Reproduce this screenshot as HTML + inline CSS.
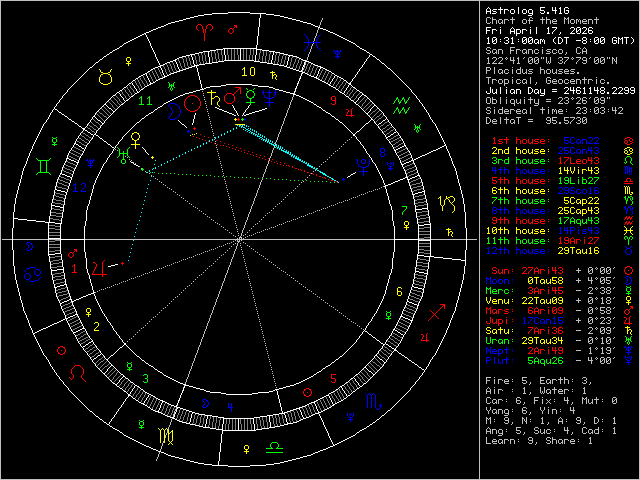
<!DOCTYPE html>
<html><head><meta charset="utf-8"><style>
html,body{margin:0;padding:0;background:#000;width:640px;height:480px;overflow:hidden}
#w{position:relative;width:640px;height:480px;background:#000}
svg{position:absolute;left:0;top:0}
.t{position:absolute;font-family:"Liberation Mono",monospace;font-size:10px;line-height:10px;white-space:pre;color:transparent}
</style></head><body><div id="w">
<svg width="640" height="480" viewBox="0 0 640 480" shape-rendering="crispEdges" fill="none">
<path stroke="#c0c0c0" d="M0 .5m0 0h640m-640 1h1m478 0h1m159 0h1m-640 1h1m478 0h1m159 0h1m-640 1h1m478 0h1m159 0h1m-640 1h1m478 0h1m159 0h1m-640 1h1m478 0h1m159 0h1m-640 1h1m478 0h1m159 0h1m-640 1h1m478 0h1m159 0h1m-640 1h1m478 0h1m159 0h1m-640 1h1m478 0h1m159 0h1m-640 1h1m478 0h1m159 0h1m-640 1h1m478 0h1m159 0h1m-640 1h1m478 0h1m159 0h1m-640 1h1m478 0h1m159 0h1m-640 1h1m478 0h1m159 0h1m-640 1h1m478 0h1m159 0h1m-640 1h1m478 0h1m159 0h1m-640 1h1m478 0h1m7 0h3m2 0h1m19 0h1m17 0h2m10 0h1m3 0h1m17 0h1m3 0h1m27 0h1m42 0h1m-640 1h1m321 0h1m156 0h1m6 0h1m3 0h1m1 0h1m19 0h1m16 0h1m2 0h1m9 0h1m3 0h1m17 0h2m1 0h2m27 0h1m42 0h1m-640 1h1m321 0h1m156 0h1m6 0h1m5 0h4m3 0h3m2 0h4m2 0h5m8 0h3m3 0h1m10 0h5m1 0h4m3 0h3m8 0h1m1 0h1m1 0h1m2 0h3m2 0h2m1 0h1m3 0h3m2 0h4m2 0h5m40 0h1m-640 1h1m320 0h1m157 0h1m6 0h1m5 0h1m3 0h1m1 0h1m3 0h1m1 0h1m3 0h1m3 0h1m9 0h1m3 0h1m1 0h5m9 0h1m3 0h1m3 0h1m1 0h1m3 0h1m7 0h1m3 0h1m1 0h1m3 0h1m1 0h1m1 0h1m1 0h1m1 0h1m3 0h1m1 0h1m3 0h1m3 0h1m42 0h1m-640 1h1m320 0h1m157 0h1m6 0h1m5 0h1m3 0h1m1 0h1m3 0h1m1 0h1m7 0h1m9 0h1m3 0h1m2 0h1m12 0h1m3 0h1m3 0h1m1 0h5m7 0h1m3 0h1m1 0h1m3 0h1m1 0h1m1 0h1m1 0h1m1 0h5m1 0h1m3 0h1m3 0h1m42 0h1m-640 1h1m319 0h1m158 0h1m6 0h1m3 0h1m1 0h1m3 0h1m1 0h1m2 0h2m1 0h1m7 0h1m9 0h1m3 0h1m2 0h1m12 0h1m3 0h1m3 0h1m1 0h1m11 0h1m3 0h1m1 0h1m3 0h1m1 0h1m3 0h1m1 0h1m5 0h1m3 0h1m3 0h1m42 0h1m-640 1h1m319 0h1m158 0h1m7 0h3m2 0h1m3 0h1m2 0h2m1 0h1m1 0h1m7 0h1m10 0h3m3 0h1m12 0h1m3 0h1m3 0h1m2 0h4m7 0h1m3 0h1m2 0h3m2 0h1m3 0h1m2 0h4m1 0h1m3 0h1m3 0h1m42 0h1m-640 1h1m319 0h1m158 0h1m159 0h1m-640 1h1m318 0h1m159 0h1m159 0h1m-640 1h1m318 0h1m159 0h1m159 0h1m-640 1h1m478 0h1m159 0h1m-640 1h1m317 0h1m160 0h1m159 0h1m-640 1h1m317 0h1m160 0h1m159 0h1m-640 1h1m316 0h1m161 0h1m159 0h1m-640 1h1m316 0h1m161 0h1m159 0h1m-640 1h1m316 0h1m161 0h1m159 0h1m-640 1h1m315 0h1m162 0h1m159 0h1m-640 1h1m315 0h1m162 0h1m159 0h1m-640 1h1m315 0h1m162 0h1m159 0h1m-640 1h1m314 0h1m163 0h1m159 0h1m-640 1h1m314 0h1m163 0h1m159 0h1m-640 1h1m313 0h1m164 0h1m159 0h1m-640 1h1m313 0h1m164 0h1m159 0h1m-640 1h1m313 0h1m164 0h1m159 0h1m-640 1h1m312 0h1m165 0h1m159 0h1m-640 1h1m478 0h1m159 0h1m-640 1h1m312 0h1m165 0h1m159 0h1m-640 1h1m311 0h1m166 0h1m159 0h1m-640 1h1m311 0h1m166 0h1m159 0h1m-640 1h1m310 0h1m167 0h1m159 0h1m-640 1h1m310 0h1m167 0h1m7 0h3m20 0h5m27 0h1m34 0h3m4 0h1m54 0h1m-640 1h1m310 0h1m167 0h1m6 0h1m3 0h1m19 0h1m65 0h1m3 0h1m2 0h1m1 0h1m53 0h1m-640 1h1m309 0h1m168 0h1m6 0h1m6 0h3m2 0h4m8 0h1m5 0h4m3 0h3m2 0h4m3 0h3m4 0h1m4 0h4m2 0h3m3 0h3m14 0h1m5 0h1m3 0h1m52 0h1m-640 1h1m309 0h1m168 0h1m7 0h3m2 0h1m3 0h1m1 0h1m3 0h1m7 0h4m2 0h1m3 0h1m1 0h1m3 0h1m1 0h1m3 0h1m1 0h1m3 0h1m3 0h1m3 0h1m5 0h1m3 0h1m1 0h1m3 0h1m13 0h1m5 0h1m3 0h1m52 0h1m-640 1h1m309 0h1m168 0h1m10 0h1m1 0h1m3 0h1m1 0h1m3 0h1m7 0h1m5 0h1m5 0h1m3 0h1m1 0h1m3 0h1m1 0h1m7 0h1m4 0h3m2 0h1m5 0h1m3 0h1m13 0h1m5 0h5m52 0h1m-640 1h1m308 0h1m169 0h1m6 0h1m3 0h1m1 0h1m2 0h2m1 0h1m3 0h1m7 0h1m5 0h1m5 0h1m2 0h2m1 0h1m3 0h1m1 0h1m3 0h1m3 0h1m7 0h1m1 0h1m3 0h1m1 0h1m3 0h1m3 0h1m9 0h1m3 0h1m1 0h1m3 0h1m52 0h1m-640 1h1m308 0h1m169 0h1m7 0h3m3 0h2m1 0h1m1 0h1m3 0h1m7 0h1m5 0h1m6 0h2m1 0h1m1 0h1m3 0h1m2 0h3m4 0h1m3 0h4m3 0h3m3 0h3m4 0h1m10 0h3m2 0h1m3 0h1m52 0h1m-640 1h1m307 0h1m170 0h1m85 0h1m73 0h1m-640 1h1m307 0h1m170 0h1m159 0h1m-640 1h1m307 0h1m170 0h1m159 0h1m-640 1h1m306 0h1m171 0h1m8 0h1m4 0h3m3 0h3m4 0h1m3 0h1m2 0h1m4 0h1m5 0h1m4 0h3m3 0h3m3 0h1m1 0h1m2 0h1m3 0h1m8 0h3m2 0h5m3 0h1m3 0h5m2 0h3m4 0h1m4 0h3m3 0h3m3 0h1m1 0h1m2 0h1m3 0h1m22 0h1m-640 1h1m306 0h1m171 0h1m7 0h2m3 0h1m3 0h1m1 0h1m3 0h1m2 0h1m1 0h1m2 0h1m2 0h1m3 0h2m4 0h1m4 0h1m3 0h1m1 0h1m3 0h1m2 0h1m1 0h1m2 0h1m3 0h1m7 0h1m3 0h1m5 0h1m2 0h1m1 0h1m6 0h1m1 0h1m3 0h1m2 0h1m4 0h1m3 0h1m1 0h1m3 0h1m2 0h1m1 0h1m2 0h2m2 0h1m22 0h1m-640 1h1m306 0h1m171 0h1m8 0h1m7 0h1m5 0h1m3 0h1m3 0h1m2 0h1m4 0h1m9 0h1m2 0h2m1 0h1m2 0h2m7 0h1m3 0h1m11 0h1m4 0h1m4 0h1m6 0h1m2 0h1m3 0h1m7 0h1m2 0h2m1 0h1m2 0h2m7 0h1m1 0h1m1 0h1m22 0h1m-640 1h1m305 0h1m172 0h1m8 0h1m6 0h1m5 0h1m8 0h5m3 0h1m9 0h1m1 0h1m1 0h1m1 0h1m1 0h1m1 0h1m7 0h1m3 0h1m9 0h2m4 0h1m11 0h1m4 0h4m7 0h1m1 0h1m1 0h1m1 0h1m1 0h1m1 0h1m7 0h1m1 0h1m1 0h1m22 0h1m-640 1h1m478 0h1m8 0h1m5 0h1m5 0h1m12 0h1m4 0h1m9 0h2m2 0h1m1 0h2m2 0h1m7 0h1m1 0h1m1 0h1m11 0h1m2 0h1m11 0h1m8 0h1m7 0h2m2 0h1m1 0h2m2 0h1m7 0h1m2 0h2m22 0h1m-640 1h1m304 0h1m173 0h1m8 0h1m4 0h1m5 0h1m13 0h1m4 0h1m9 0h1m3 0h1m1 0h1m3 0h1m7 0h1m1 0h1m1 0h1m7 0h1m3 0h1m1 0h1m11 0h1m5 0h1m3 0h1m7 0h1m3 0h1m1 0h1m3 0h1m7 0h1m3 0h1m22 0h1m-640 1h1m304 0h1m173 0h1m7 0h3m2 0h5m1 0h5m10 0h1m3 0h3m9 0h3m3 0h3m9 0h1m1 0h1m9 0h3m2 0h1m11 0h1m6 0h3m9 0h3m3 0h3m8 0h1m3 0h1m22 0h1m-640 1h1m304 0h1m173 0h1m159 0h1m-640 1h1m303 0h1m174 0h1m159 0h1m-640 1h1m303 0h1m174 0h1m159 0h1m-640 1h1m303 0h1m174 0h1m6 0h4m4 0h1m17 0h1m7 0h1m19 0h1m98 0h1m-640 1h1m302 0h1m175 0h1m6 0h1m3 0h1m3 0h1m25 0h1m19 0h1m98 0h1m-640 1h1m302 0h1m175 0h1m6 0h1m3 0h1m3 0h1m4 0h3m3 0h3m4 0h1m4 0h4m1 0h1m3 0h1m2 0h4m7 0h4m3 0h3m2 0h1m3 0h1m2 0h4m2 0h3m3 0h4m64 0h1m-640 1h1m301 0h1m176 0h1m6 0h4m4 0h1m3 0h1m3 0h1m1 0h1m3 0h1m3 0h1m3 0h1m3 0h1m1 0h1m3 0h1m1 0h1m11 0h1m3 0h1m1 0h1m3 0h1m1 0h1m3 0h1m1 0h1m5 0h1m3 0h1m1 0h1m68 0h1m-640 1h1m301 0h1m176 0h1m6 0h1m7 0h1m3 0h1m3 0h1m1 0h1m7 0h1m3 0h1m3 0h1m1 0h1m3 0h1m2 0h3m8 0h1m3 0h1m1 0h1m3 0h1m1 0h1m3 0h1m2 0h3m2 0h5m2 0h3m65 0h1m-640 1h1m478 0h1m6 0h1m7 0h1m3 0h1m2 0h2m1 0h1m3 0h1m3 0h1m3 0h1m3 0h1m1 0h1m2 0h2m5 0h1m7 0h1m3 0h1m1 0h1m3 0h1m1 0h1m2 0h2m5 0h1m1 0h1m9 0h1m2 0h2m60 0h1m-640 1h1m300 0h1m177 0h1m6 0h1m7 0h1m4 0h2m1 0h1m2 0h3m4 0h1m4 0h4m2 0h2m1 0h1m1 0h4m8 0h1m3 0h1m2 0h3m3 0h2m1 0h1m1 0h4m3 0h4m1 0h4m3 0h2m60 0h1m-640 1h1m478 0h1m159 0h1m-640 1h1m478 0h1m159 0h1m-640 1h1m478 0h1m159 0h1m-640 1h1m478 0h1m6 0h5m21 0h1m17 0h1m16 0h3m34 0h1m11 0h1m42 0h1m-640 1h1m298 0h1m179 0h1m8 0h1m41 0h1m15 0h1m3 0h1m33 0h1m54 0h1m-640 1h1m478 0h1m8 0h1m3 0h4m3 0h3m2 0h4m4 0h1m4 0h3m3 0h3m4 0h1m15 0h1m6 0h3m3 0h3m3 0h3m3 0h3m2 0h4m2 0h5m1 0h4m4 0h1m4 0h3m35 0h1m-640 1h1m478 0h1m8 0h1m3 0h1m3 0h1m1 0h1m3 0h1m1 0h1m3 0h1m3 0h1m3 0h1m3 0h1m1 0h1m3 0h1m3 0h1m15 0h1m1 0h3m1 0h1m3 0h1m1 0h1m3 0h1m1 0h1m3 0h1m1 0h1m3 0h1m1 0h1m3 0h1m3 0h1m3 0h1m3 0h1m3 0h1m3 0h1m3 0h1m34 0h1m-640 1h1m478 0h1m8 0h1m3 0h1m5 0h1m3 0h1m1 0h1m3 0h1m3 0h1m3 0h1m5 0h1m3 0h1m3 0h1m15 0h1m3 0h1m1 0h5m1 0h1m3 0h1m1 0h1m5 0h5m1 0h1m3 0h1m3 0h1m3 0h1m7 0h1m3 0h1m38 0h1m-640 1h1m478 0h1m8 0h1m3 0h1m5 0h1m3 0h1m1 0h1m3 0h1m3 0h1m3 0h1m3 0h1m1 0h1m2 0h2m3 0h1m5 0h1m9 0h1m3 0h1m1 0h1m5 0h1m3 0h1m1 0h1m3 0h1m1 0h1m5 0h1m3 0h1m3 0h1m3 0h1m7 0h1m3 0h1m3 0h1m2 0h2m30 0h1m-640 1h1m297 0h1m180 0h1m8 0h1m3 0h1m6 0h3m2 0h4m4 0h1m4 0h3m3 0h2m1 0h1m3 0h1m5 0h1m10 0h3m3 0h4m2 0h3m3 0h3m3 0h4m1 0h1m3 0h1m3 0h1m3 0h1m7 0h1m4 0h3m3 0h2m30 0h1m-640 1h1m478 0h1m24 0h1m30 0h1m103 0h1m-640 1h1m478 0h1m24 0h1m134 0h1m-640 1h1m478 0h1m159 0h1m-640 1h1m478 0h1m159 0h1m-640 1h1m295 0h1m182 0h1m159 0h1m-640 1h1m478 0h1m159 0h1m-640 1h1m478 0h1m159 0h1m-640 1h1m201 0h1m92 0h1m183 0h1m159 0h1m-640 1h1m478 0h1m159 0h1m-640 1h1m202 0h1m90 0h1m184 0h1m159 0h1m-640 1h1m478 0h1m159 0h1m-640 1h1m202 0h1m89 0h1m185 0h1m159 0h1m-640 1h1m292 0h1m185 0h1m159 0h1m-640 1h1m203 0h1m87 0h1m186 0h1m7 0h3m2 0h1m7 0h1m5 0h1m17 0h1m5 0h1m28 0h3m3 0h3m4 0h1m4 0h3m3 0h3m4 0h1m4 0h3m3 0h3m3 0h1m1 0h1m29 0h1m-640 1h1m291 0h1m186 0h1m6 0h1m3 0h1m1 0h1m7 0h1m29 0h1m27 0h1m3 0h1m1 0h1m3 0h1m2 0h1m1 0h1m2 0h1m3 0h1m1 0h1m3 0h1m2 0h1m4 0h1m3 0h1m1 0h1m3 0h1m2 0h1m1 0h1m29 0h1m-640 1h1m203 0h1m87 0h1m186 0h1m6 0h1m3 0h1m1 0h4m4 0h1m5 0h1m4 0h3m2 0h1m3 0h1m3 0h1m3 0h5m1 0h1m3 0h1m7 0h5m11 0h1m5 0h1m3 0h1m7 0h1m1 0h1m11 0h1m2 0h2m1 0h1m3 0h1m34 0h1m-640 1h1m290 0h1m187 0h1m6 0h1m3 0h1m1 0h1m3 0h1m3 0h1m5 0h1m3 0h1m3 0h1m1 0h1m3 0h1m3 0h1m5 0h1m3 0h1m3 0h1m22 0h1m4 0h2m11 0h1m2 0h4m8 0h1m1 0h1m1 0h1m2 0h4m34 0h1m-640 1h1m204 0h1m85 0h1m187 0h1m6 0h1m3 0h1m1 0h1m3 0h1m3 0h1m5 0h1m3 0h1m3 0h1m1 0h1m3 0h1m3 0h1m5 0h1m3 0h1m3 0h1m7 0h5m9 0h1m7 0h1m9 0h1m3 0h1m3 0h1m7 0h2m2 0h1m5 0h1m34 0h1m-640 1h1m289 0h1m188 0h1m6 0h1m3 0h1m1 0h1m3 0h1m3 0h1m5 0h1m3 0h1m3 0h1m1 0h1m2 0h2m3 0h1m5 0h1m3 0h1m3 0h1m20 0h1m4 0h1m3 0h1m8 0h1m4 0h1m3 0h1m7 0h1m3 0h1m1 0h1m3 0h1m34 0h1m-640 1h1m204 0h1m84 0h1m188 0h1m7 0h3m2 0h4m4 0h1m5 0h1m4 0h4m2 0h2m1 0h1m3 0h1m5 0h1m4 0h4m19 0h5m2 0h3m8 0h5m2 0h3m9 0h3m3 0h3m35 0h1m-640 1h1m289 0h1m188 0h1m34 0h1m23 0h1m100 0h1m-640 1h1m205 0h1m82 0h1m189 0h1m34 0h1m19 0h4m101 0h1m-640 1h1m288 0h1m189 0h1m159 0h1m-640 1h1m205 0h1m82 0h1m189 0h1m7 0h3m4 0h1m7 0h1m27 0h1m11 0h1m5 0h1m28 0h3m3 0h3m9 0h3m3 0h3m8 0h1m2 0h1m3 0h3m17 0h1m-640 1h1m287 0h1m190 0h1m6 0h1m3 0h1m11 0h1m27 0h1m11 0h1m33 0h1m3 0h1m1 0h1m3 0h1m7 0h1m3 0h1m1 0h1m3 0h1m7 0h1m2 0h1m2 0h1m3 0h1m16 0h1m-640 1h1m206 0h1m80 0h1m190 0h1m6 0h1m7 0h1m4 0h4m2 0h3m2 0h4m3 0h3m3 0h3m4 0h1m9 0h5m3 0h1m3 0h2m1 0h1m3 0h3m4 0h1m13 0h1m5 0h1m3 0h1m3 0h1m2 0h2m5 0h1m3 0h1m3 0h1m2 0h1m6 0h1m16 0h1m-640 1h1m286 0h1m191 0h1m7 0h3m4 0h1m3 0h1m3 0h1m1 0h1m3 0h1m1 0h1m3 0h1m1 0h1m3 0h1m1 0h1m3 0h1m3 0h1m11 0h1m5 0h1m3 0h1m1 0h1m1 0h1m1 0h1m3 0h1m16 0h1m4 0h2m8 0h1m1 0h1m1 0h1m3 0h2m8 0h5m4 0h1m17 0h1m-640 1h1m206 0h1m79 0h1m191 0h1m10 0h1m3 0h1m3 0h1m3 0h1m1 0h5m1 0h1m5 0h5m1 0h1m3 0h1m3 0h1m11 0h1m5 0h1m3 0h1m1 0h1m1 0h1m1 0h5m3 0h1m11 0h1m7 0h1m3 0h1m3 0h2m2 0h1m5 0h1m3 0h1m6 0h1m4 0h1m18 0h1m-640 1h1m286 0h1m191 0h1m6 0h1m3 0h1m3 0h1m3 0h1m3 0h1m1 0h1m5 0h1m5 0h1m5 0h1m2 0h2m3 0h1m11 0h1m5 0h1m3 0h1m3 0h1m1 0h1m18 0h1m4 0h1m3 0h1m7 0h1m3 0h1m1 0h1m3 0h1m10 0h1m3 0h1m19 0h1m-640 1h1m207 0h1m77 0h1m192 0h1m7 0h3m4 0h1m4 0h4m2 0h4m1 0h1m6 0h4m2 0h2m1 0h1m3 0h1m11 0h1m5 0h1m3 0h1m3 0h1m2 0h4m13 0h5m2 0h3m9 0h3m3 0h3m11 0h1m2 0h5m16 0h1m-640 1h1m285 0h1m192 0h1m159 0h1m-640 1h1m207 0h1m77 0h1m192 0h1m159 0h1m-640 1h1m284 0h1m193 0h1m159 0h1m-640 1h1m208 0h1m75 0h1m193 0h1m6 0h3m11 0h1m5 0h1m9 0h5m26 0h3m2 0h5m7 0h5m1 0h5m2 0h3m3 0h3m53 0h1m-640 1h1m283 0h1m194 0h1m6 0h1m2 0h1m10 0h1m5 0h1m11 0h1m27 0h1m3 0h1m1 0h1m11 0h1m9 0h1m1 0h1m3 0h1m1 0h1m3 0h1m52 0h1m-640 1h1m208 0h1m74 0h1m194 0h1m6 0h1m3 0h1m2 0h3m4 0h1m3 0h5m2 0h3m4 0h1m9 0h5m13 0h1m3 0h1m1 0h1m11 0h1m8 0h1m6 0h1m1 0h1m2 0h2m52 0h1m-640 1h1m283 0h1m194 0h1m6 0h1m3 0h1m1 0h1m3 0h1m3 0h1m5 0h1m3 0h1m3 0h1m3 0h1m28 0h4m1 0h4m8 0h4m4 0h1m5 0h2m2 0h1m1 0h1m1 0h1m52 0h1m-640 1h1m209 0h1m72 0h1m195 0h1m6 0h1m3 0h1m1 0h5m3 0h1m5 0h1m3 0h1m3 0h1m3 0h1m9 0h5m17 0h1m5 0h1m11 0h1m2 0h1m8 0h1m1 0h2m2 0h1m52 0h1m-640 1h1m282 0h1m195 0h1m6 0h1m2 0h1m2 0h1m7 0h1m5 0h1m3 0h1m2 0h2m3 0h1m27 0h1m3 0h1m1 0h1m3 0h1m2 0h2m3 0h1m3 0h1m1 0h1m5 0h1m3 0h1m1 0h1m3 0h1m52 0h1m-640 1h1m209 0h1m72 0h1m195 0h1m6 0h3m4 0h4m3 0h1m5 0h1m4 0h2m1 0h1m3 0h1m28 0h3m3 0h3m3 0h2m4 0h3m2 0h1m6 0h3m3 0h3m53 0h1m-640 1h1m281 0h1m196 0h1m159 0h1m-640 1h1m210 0h1m70 0h1m196 0h1m159 0h1m-640 1h1m280 0h1m197 0h1m159 0h1m-640 1h1m210 0h1m69 0h1m197 0h1m159 0h1m-640 1h1m280 0h1m197 0h1m159 0h1m-640 1h1m211 0h1m67 0h1m198 0h1m159 0h1m-640 1h1m279 0h1m198 0h1m159 0h1m-640 1h1m211 0h1m67 0h1m198 0h1m159 0h1m-640 1h1m278 0h1m199 0h1m159 0h1m-640 1h1m212 0h1m65 0h1m199 0h1m159 0h1m-640 1h1m277 0h1m200 0h1m159 0h1m-640 1h1m212 0h1m64 0h1m200 0h1m159 0h1m-640 1h1m277 0h1m200 0h1m159 0h1m-640 1h1m213 0h1m62 0h1m73 0h1m127 0h1m159 0h1m-640 1h1m276 0h1m201 0h1m159 0h1m-640 1h1m213 0h1m62 0h1m71 0h1m129 0h1m159 0h1m-640 1h1m275 0h1m70 0h1m131 0h1m159 0h1m-640 1h1m214 0h1m60 0h1m202 0h1m159 0h1m-640 1h1m274 0h1m69 0h1m133 0h1m159 0h1m-640 1h1m214 0h1m59 0h1m203 0h1m159 0h1m-640 1h1m274 0h1m67 0h1m135 0h1m159 0h1m-640 1h1m215 0h1m262 0h1m159 0h1m-640 1h1m273 0h1m66 0h1m137 0h1m159 0h1m-640 1h1m215 0h1m57 0h1m204 0h1m159 0h1m-640 1h1m272 0h1m65 0h1m139 0h1m159 0h1m-640 1h1m114 0h1m101 0h1m55 0h1m205 0h1m159 0h1m-640 1h1m116 0h1m154 0h1m64 0h1m141 0h1m159 0h1m-640 1h1m216 0h1m54 0h1m62 0h1m143 0h1m159 0h1m-640 1h1m271 0h1m206 0h1m159 0h1m-640 1h1m217 0h1m52 0h1m61 0h1m145 0h1m159 0h1m-640 1h1m270 0h1m207 0h1m159 0h1m-640 1h1m217 0h1m52 0h1m59 0h1m147 0h1m159 0h1m-640 1h1m124 0h1m144 0h1m208 0h1m159 0h1m-640 1h1m126 0h1m91 0h1m50 0h1m58 0h1m149 0h1m159 0h1m-640 1h1m268 0h1m209 0h1m159 0h1m-640 1h1m128 0h1m89 0h1m49 0h1m57 0h1m151 0h1m159 0h1m-640 1h1m130 0h1m137 0h1m209 0h1m159 0h1m-640 1h1m219 0h1m47 0h1m56 0h1m153 0h1m159 0h1m-640 1h1m132 0h1m134 0h1m54 0h1m155 0h1m159 0h1m-640 1h1m134 0h1m84 0h1m47 0h1m210 0h1m159 0h1m-640 1h1m266 0h1m53 0h1m157 0h1m159 0h1m-640 1h1m220 0h1m45 0h1m211 0h1m159 0h1m-640 1h1m138 0h1m126 0h1m52 0h1m159 0h1m159 0h1m-640 1h1m220 0h1m44 0h1m212 0h1m159 0h1m-640 1h1m140 0h1m124 0h1m50 0h1m161 0h1m159 0h1m-640 1h1m221 0h1m42 0h1m213 0h1m159 0h1m-640 1h1m264 0h1m49 0h1m163 0h1m159 0h1m-640 1h1m144 0h1m76 0h1m42 0h1m47 0h1m165 0h1m159 0h1m-640 1h1m146 0h1m116 0h1m214 0h1m159 0h1m-640 1h1m148 0h1m73 0h1m40 0h1m46 0h1m167 0h1m159 0h1m-640 1h1m262 0h1m215 0h1m159 0h1m-640 1h1m150 0h1m71 0h1m39 0h1m45 0h1m169 0h1m159 0h1m-640 1h1m152 0h1m109 0h1m215 0h1m159 0h1m-640 1h1m223 0h1m37 0h1m44 0h1m171 0h1m159 0h1m-640 1h1m154 0h1m323 0h1m159 0h1m-640 1h1m156 0h1m66 0h1m37 0h1m42 0h1m173 0h1m159 0h1m-640 1h1m260 0h1m217 0h1m159 0h1m-640 1h1m158 0h1m65 0h1m35 0h1m41 0h1m175 0h1m159 0h1m-640 1h1m160 0h1m98 0h1m40 0h1m177 0h1m159 0h1m-640 1h1m224 0h1m34 0h1m218 0h1m159 0h1m-640 1h1m162 0h1m96 0h1m38 0h1m179 0h1m159 0h1m-640 1h1m164 0h1m60 0h1m32 0h1m219 0h1m159 0h1m-640 1h1m258 0h1m37 0h1m85 0h1m95 0h1m159 0h1m-640 1h1m166 0h1m58 0h1m32 0h1m121 0h1m97 0h1m159 0h1m-640 1h1m168 0h1m88 0h1m36 0h1m83 0h1m99 0h1m159 0h1m-640 1h1m170 0h1m55 0h1m30 0h1m116 0h1m1 0h1m101 0h1m159 0h1m-640 1h1m256 0h1m35 0h1m79 0h1m105 0h1m159 0h1m-640 1h1m172 0h1m53 0h1m29 0h1m111 0h1m1 0h1m107 0h1m159 0h1m-640 1h1m174 0h1m81 0h1m33 0h1m75 0h1m111 0h1m159 0h1m-640 1h1m227 0h1m27 0h1m32 0h1m75 0h1m113 0h1m159 0h1m-640 1h1m176 0h1m78 0h1m104 0h1m1 0h1m115 0h1m159 0h1m-640 1h1m178 0h1m48 0h1m27 0h1m30 0h1m71 0h1m119 0h1m159 0h1m-640 1h1m254 0h1m101 0h1m121 0h1m159 0h1m-640 1h1m180 0h1m47 0h1m25 0h1m29 0h1m67 0h1m1 0h1m123 0h1m159 0h1m-640 1h1m182 0h1m70 0h1m96 0h1m127 0h1m159 0h1m-640 1h1m228 0h1m24 0h1m28 0h1m65 0h1m129 0h1m159 0h1m-640 1h1m184 0h1m68 0h1m90 0h1m1 0h1m131 0h1m159 0h1m-640 1h1m186 0h1m42 0h1m22 0h1m27 0h1m61 0h1m135 0h1m159 0h1m-640 1h1m252 0h1m85 0h1m1 0h1m137 0h1m159 0h1m-640 1h1m188 0h1m40 0h1m22 0h1m25 0h1m57 0h1m141 0h1m159 0h1m-640 1h1m190 0h1m60 0h1m24 0h1m57 0h1m143 0h1m159 0h1m-640 1h1m230 0h1m20 0h1m78 0h1m1 0h1m145 0h1m159 0h1m-640 1h1m192 0h1m57 0h1m23 0h1m53 0h1m149 0h1m159 0h1m-640 1h1m194 0h1m35 0h1m19 0h1m75 0h1m151 0h1m159 0h1m-640 1h1m196 0h1m53 0h1m21 0h1m49 0h1m1 0h1m153 0h1m159 0h1m-640 1h1m231 0h1m17 0h1m70 0h1m157 0h1m159 0h1m-640 1h1m198 0h1m50 0h1m20 0h1m45 0h1m1 0h1m159 0h1m159 0h1m-640 1h1m200 0h1m30 0h1m17 0h1m64 0h1m163 0h1m159 0h1m-640 1h1m248 0h1m19 0h1m43 0h1m165 0h1m159 0h1m-640 1h1m202 0h1m29 0h1m15 0h1m17 0h1m41 0h1m1 0h1m167 0h1m159 0h1m-640 1h1m204 0h1m42 0h1m58 0h1m171 0h1m159 0h1m-640 1h1m232 0h1m14 0h1m16 0h1m39 0h1m173 0h1m159 0h1m-640 1h1m206 0h1m40 0h1m52 0h1m1 0h1m175 0h1m159 0h1m-640 1h1m208 0h1m24 0h1m12 0h1m15 0h1m35 0h1m179 0h1m159 0h1m-640 1h1m246 0h1m49 0h1m181 0h1m159 0h1m-640 1h1m210 0h1m22 0h1m12 0h1m13 0h1m31 0h1m1 0h1m183 0h1m159 0h1m-640 1h1m212 0h1m32 0h1m44 0h1m187 0h1m159 0h1m-640 1h1m234 0h1m10 0h1m12 0h1m27 0h1m1 0h1m189 0h1m159 0h1m-640 1h1m214 0h1m29 0h1m39 0h1m193 0h1m159 0h1m-640 1h1m216 0h1m17 0h1m9 0h1m11 0h1m25 0h1m195 0h1m159 0h1m-640 1h1m218 0h1m25 0h1m9 0h1m23 0h1m1 0h1m197 0h1m159 0h1m-640 1h1m235 0h1m7 0h1m32 0h1m201 0h1m159 0h1m-640 1h1m220 0h1m22 0h1m8 0h1m21 0h1m203 0h1m159 0h1m-640 1h1m222 0h1m12 0h1m7 0h1m26 0h1m1 0h1m205 0h1m159 0h1m-640 1h1m242 0h1m7 0h1m17 0h1m209 0h1m159 0h1m-640 1h1m224 0h1m11 0h1m5 0h1m21 0h1m1 0h1m211 0h1m159 0h1m-640 1h1m226 0h1m14 0h1m6 0h1m13 0h1m215 0h1m159 0h1m-640 1h1m236 0h1m4 0h1m18 0h1m217 0h1m159 0h1m-640 1h1m228 0h1m12 0h1m4 0h1m9 0h1m1 0h1m219 0h1m159 0h1m-640 1h1m230 0h1m6 0h1m2 0h1m13 0h1m223 0h1m159 0h1m-640 1h1m240 0h1m3 0h1m7 0h1m225 0h1m159 0h1m-640 1h1m232 0h1m4 0h1m2 0h1m1 0h1m5 0h1m1 0h1m227 0h1m159 0h1m-640 1h1m234 0h1m4 0h1m6 0h1m231 0h1m159 0h1m-640 1h1m238 0h3m3 0h1m233 0h1m159 0h1m-640 1h1m236 0h1m1 0h1m1 0h1m1 0h1m235 0h1m159 0h1m-640 1h1m1 0h10m1 0h35m1 0h11m25 0h309m25 0h11m1 0h35m1 0h10m2 0h1m159 0h1m-640 1h1m234 0h1m1 0h1m1 0h1m1 0h1m237 0h1m159 0h1m-640 1h1m232 0h1m3 0h3m239 0h1m159 0h1m-640 1h1m230 0h1m6 0h1m4 0h1m235 0h1m159 0h1m-640 1h1m226 0h1m1 0h1m5 0h1m1 0h1m2 0h1m4 0h1m233 0h1m159 0h1m-640 1h1m224 0h1m7 0h1m3 0h1m241 0h1m159 0h1m-640 1h1m222 0h1m13 0h1m2 0h1m6 0h1m231 0h1m159 0h1m-640 1h1m218 0h1m1 0h1m9 0h1m4 0h1m12 0h1m229 0h1m159 0h1m-640 1h1m216 0h1m18 0h1m4 0h1m237 0h1m159 0h1m-640 1h1m214 0h1m13 0h1m6 0h1m14 0h1m227 0h1m159 0h1m-640 1h1m210 0h1m1 0h1m21 0h1m5 0h1m11 0h1m225 0h1m159 0h1m-640 1h1m208 0h1m17 0h1m7 0h1m243 0h1m159 0h1m-640 1h1m204 0h1m1 0h1m26 0h1m7 0h1m12 0h1m223 0h1m159 0h1m-640 1h1m202 0h1m21 0h1m8 0h1m22 0h1m221 0h1m159 0h1m-640 1h1m200 0h1m32 0h1m7 0h1m236 0h1m159 0h1m-640 1h1m196 0h1m1 0h1m23 0h1m9 0h1m25 0h1m219 0h1m159 0h1m-640 1h1m194 0h1m25 0h1m11 0h1m9 0h1m17 0h1m217 0h1m159 0h1m-640 1h1m192 0h1m39 0h1m29 0h1m215 0h1m159 0h1m-640 1h1m188 0h1m1 0h1m27 0h1m12 0h1m10 0h1m235 0h1m159 0h1m-640 1h1m186 0h1m44 0h1m32 0h1m213 0h1m159 0h1m-640 1h1m182 0h1m1 0h1m31 0h1m13 0h1m12 0h1m22 0h1m211 0h1m159 0h1m-640 1h1m180 0h1m49 0h1m247 0h1m159 0h1m-640 1h1m178 0h1m35 0h1m15 0h1m12 0h1m24 0h1m209 0h1m159 0h1m-640 1h1m174 0h1m1 0h1m52 0h1m40 0h1m207 0h1m159 0h1m-640 1h1m172 0h1m39 0h1m16 0h1m14 0h1m233 0h1m159 0h1m-640 1h1m170 0h1m58 0h1m42 0h1m205 0h1m159 0h1m-640 1h1m166 0h1m1 0h1m41 0h1m17 0h1m15 0h1m29 0h1m203 0h1m159 0h1m-640 1h1m164 0h1m43 0h1m19 0h1m249 0h1m159 0h1m-640 1h1m162 0h1m64 0h1m17 0h1m30 0h1m201 0h1m109 0h3m4 0h1m4 0h3m3 0h3m4 0h1m24 0h1m-640 1h1m158 0h1m1 0h1m45 0h1m20 0h1m50 0h1m199 0h1m98 0h1m9 0h1m3 0h1m2 0h1m1 0h1m2 0h1m3 0h1m1 0h1m3 0h1m2 0h1m25 0h1m-640 1h1m156 0h1m70 0h1m17 0h1m232 0h1m98 0h1m9 0h1m2 0h2m3 0h1m3 0h1m2 0h2m1 0h1m2 0h2m28 0h1m-640 1h1m152 0h1m1 0h1m49 0h1m21 0h1m53 0h1m197 0h1m96 0h5m7 0h1m1 0h1m1 0h1m7 0h1m1 0h1m1 0h1m1 0h1m1 0h1m1 0h1m28 0h1m-640 1h1m150 0h1m75 0h1m19 0h1m35 0h1m195 0h1m98 0h1m9 0h2m2 0h1m7 0h2m2 0h1m1 0h2m2 0h1m28 0h1m-640 1h1m148 0h1m53 0h1m23 0h1m57 0h1m193 0h1m98 0h1m9 0h1m3 0h1m7 0h1m3 0h1m1 0h1m3 0h1m28 0h1m-640 1h1m144 0h1m1 0h1m78 0h1m20 0h1m231 0h1m109 0h3m9 0h3m3 0h3m29 0h1m-640 1h1m142 0h1m57 0h1m24 0h1m60 0h1m191 0h1m159 0h1m-640 1h1m140 0h1m57 0h1m25 0h1m22 0h1m40 0h1m189 0h1m159 0h1m-640 1h1m136 0h1m1 0h1m85 0h1m253 0h1m159 0h1m-640 1h1m134 0h1m61 0h1m27 0h1m22 0h1m42 0h1m187 0h1m108 0h1m2 0h1m4 0h1m4 0h3m2 0h5m3 0h1m24 0h1m-640 1h1m130 0h1m1 0h1m90 0h1m68 0h1m185 0h1m98 0h1m9 0h1m2 0h1m3 0h1m1 0h1m2 0h1m3 0h1m1 0h1m6 0h1m25 0h1m-640 1h1m128 0h1m65 0h1m28 0h1m24 0h1m229 0h1m98 0h1m9 0h1m2 0h1m4 0h1m3 0h1m2 0h2m1 0h1m32 0h1m-640 1h1m126 0h1m96 0h1m70 0h1m183 0h1m96 0h5m7 0h5m7 0h1m1 0h1m1 0h1m1 0h4m29 0h1m-640 1h1m122 0h1m1 0h1m67 0h1m29 0h1m25 0h1m47 0h1m181 0h1m98 0h1m12 0h1m8 0h2m2 0h1m5 0h1m28 0h1m-640 1h1m120 0h1m101 0h1m255 0h1m98 0h1m12 0h1m8 0h1m3 0h1m1 0h1m3 0h1m28 0h1m-640 1h1m118 0h1m71 0h1m30 0h1m27 0h1m48 0h1m179 0h1m111 0h1m9 0h3m3 0h3m29 0h1m-640 1h1m114 0h1m1 0h1m104 0h1m78 0h1m177 0h1m159 0h1m-640 1h1m112 0h1m75 0h1m32 0h1m27 0h1m228 0h1m159 0h1m-640 1h1m110 0h1m75 0h1m33 0h1m81 0h1m175 0h1m159 0h1m-640 1h1m106 0h1m1 0h1m111 0h1m29 0h1m53 0h1m173 0h1m109 0h3m4 0h1m4 0h3m3 0h3m4 0h1m24 0h1m-640 1h1m104 0h1m79 0h1m35 0h1m257 0h1m108 0h1m3 0h1m2 0h1m1 0h1m2 0h1m3 0h1m1 0h1m3 0h1m2 0h1m25 0h1m-640 1h1m100 0h1m1 0h1m116 0h1m30 0h1m55 0h1m171 0h1m112 0h1m3 0h1m7 0h1m1 0h1m3 0h1m28 0h1m-640 1h1m98 0h1m83 0h1m36 0h1m88 0h1m169 0h1m96 0h5m10 0h1m10 0h2m3 0h3m29 0h1m-640 1h1m96 0h1m121 0h1m32 0h1m58 0h1m167 0h1m110 0h1m13 0h1m1 0h1m3 0h1m28 0h1m-640 1h1m94 0h1m85 0h1m37 0h1m259 0h1m109 0h1m10 0h1m3 0h1m1 0h1m3 0h1m28 0h1m-640 1h1m218 0h1m32 0h1m60 0h1m165 0h1m108 0h5m8 0h3m3 0h3m29 0h1m-640 1h1m178 0h1m38 0h1m96 0h1m163 0h1m159 0h1m-640 1h1m217 0h1m34 0h1m225 0h1m159 0h1m-640 1h1m176 0h1m40 0h1m98 0h1m161 0h1m159 0h1m-640 1h1m174 0h1m41 0h1m35 0h1m65 0h1m159 0h1m109 0h3m4 0h1m5 0h1m4 0h3m4 0h1m24 0h1m-640 1h1m216 0h1m261 0h1m98 0h1m9 0h1m3 0h1m2 0h1m1 0h1m3 0h2m3 0h1m3 0h1m2 0h1m25 0h1m-640 1h1m172 0h1m42 0h1m37 0h1m66 0h1m157 0h1m98 0h1m9 0h1m2 0h2m3 0h1m5 0h1m3 0h1m3 0h1m28 0h1m-640 1h1m215 0h1m106 0h1m155 0h1m96 0h5m7 0h1m1 0h1m1 0h1m9 0h1m4 0h3m29 0h1m-640 1h1m170 0h1m44 0h1m37 0h1m224 0h1m98 0h1m9 0h2m2 0h1m9 0h1m3 0h1m3 0h1m28 0h1m-640 1h1m214 0h1m109 0h1m153 0h1m98 0h1m9 0h1m3 0h1m9 0h1m3 0h1m3 0h1m28 0h1m-640 1h1m168 0h1m45 0h1m39 0h1m71 0h1m151 0h1m109 0h3m9 0h3m3 0h3m29 0h1m-640 1h1m214 0h1m263 0h1m159 0h1m-640 1h1m166 0h1m46 0h1m40 0h1m73 0h1m149 0h1m159 0h1m-640 1h1m213 0h1m116 0h1m147 0h1m159 0h1m-640 1h1m164 0h1m47 0h1m42 0h1m76 0h1m145 0h1m109 0h3m4 0h1m3 0h5m2 0h3m4 0h1m24 0h1m-640 1h1m162 0h1m49 0h1m265 0h1m108 0h1m3 0h1m2 0h1m1 0h1m2 0h1m5 0h1m3 0h1m2 0h1m25 0h1m-640 1h1m212 0h1m42 0h1m78 0h1m143 0h1m108 0h1m2 0h2m3 0h1m3 0h1m5 0h1m3 0h1m28 0h1m-640 1h1m160 0h1m50 0h1m124 0h1m141 0h1m96 0h5m7 0h1m1 0h1m1 0h1m7 0h4m3 0h3m29 0h1m-640 1h1m211 0h1m44 0h1m221 0h1m108 0h2m2 0h1m11 0h1m1 0h1m3 0h1m28 0h1m-640 1h1m158 0h1m52 0h1m126 0h1m139 0h1m108 0h1m3 0h1m7 0h1m3 0h1m1 0h1m3 0h1m28 0h1m-640 1h1m210 0h1m45 0h1m83 0h1m137 0h1m109 0h3m9 0h3m3 0h3m29 0h1m-640 1h1m156 0h1m53 0h1m267 0h1m159 0h1m-640 1h1m209 0h1m47 0h1m84 0h1m135 0h1m159 0h1m-640 1h1m154 0h1m54 0h1m134 0h1m133 0h1m159 0h1m-640 1h1m152 0h1m56 0h1m47 0h1m220 0h1m109 0h3m4 0h1m4 0h3m3 0h3m4 0h1m24 0h1m-640 1h1m208 0h1m137 0h1m131 0h1m98 0h1m9 0h1m3 0h1m2 0h1m1 0h1m2 0h1m3 0h1m1 0h1m3 0h1m2 0h1m25 0h1m-640 1h1m150 0h1m57 0h1m49 0h1m89 0h1m129 0h1m98 0h1m9 0h1m2 0h2m3 0h1m7 0h1m5 0h1m28 0h1m-640 1h1m208 0h1m269 0h1m96 0h5m7 0h1m1 0h1m1 0h1m10 0h1m4 0h2m29 0h1m-640 1h1m148 0h1m58 0h1m50 0h1m91 0h1m127 0h1m98 0h1m9 0h2m2 0h1m9 0h1m7 0h1m28 0h1m-640 1h1m207 0h1m144 0h1m125 0h1m98 0h1m9 0h1m3 0h1m8 0h1m4 0h1m3 0h1m28 0h1m-640 1h1m146 0h1m59 0h1m52 0h1m94 0h1m123 0h1m109 0h3m8 0h5m2 0h3m29 0h1m-640 1h1m206 0h1m271 0h1m159 0h1m-640 1h1m144 0h1m61 0h1m52 0h1m96 0h1m121 0h1m159 0h1m-640 1h1m205 0h1m152 0h1m119 0h1m159 0h1m-640 1h1m142 0h1m62 0h1m54 0h1m217 0h1m109 0h3m4 0h1m4 0h3m3 0h3m4 0h1m24 0h1m-640 1h1m140 0h1m64 0h1m154 0h1m117 0h1m108 0h1m3 0h1m2 0h1m1 0h1m2 0h1m3 0h1m1 0h1m3 0h1m2 0h1m25 0h1m-640 1h1m204 0h1m55 0h1m101 0h1m115 0h1m112 0h1m3 0h1m3 0h1m2 0h2m1 0h1m3 0h1m28 0h1m-640 1h1m138 0h1m65 0h1m273 0h1m96 0h5m10 0h1m8 0h1m1 0h1m1 0h1m2 0h4m28 0h1m-640 1h1m203 0h1m57 0h1m216 0h1m110 0h1m9 0h2m2 0h1m5 0h1m28 0h1m-640 1h1m136 0h1m66 0h1m274 0h1m109 0h1m10 0h1m3 0h1m1 0h1m3 0h1m28 0h1m-640 1h1m203 0h1m57 0h1m216 0h1m108 0h5m8 0h3m3 0h3m29 0h1m-640 1h1m134 0h1m67 0h1m275 0h1m159 0h1m-640 1h1m202 0h1m59 0h1m215 0h1m159 0h1m-640 1h1m132 0h1m69 0h1m275 0h1m159 0h1m-640 1h1m201 0h1m60 0h1m215 0h1m109 0h3m4 0h1m5 0h1m4 0h3m4 0h1m24 0h1m-640 1h1m130 0h1m70 0h1m276 0h1m108 0h1m3 0h1m2 0h1m1 0h1m3 0h2m3 0h1m3 0h1m2 0h1m25 0h1m-640 1h1m128 0h1m71 0h1m62 0h1m214 0h1m108 0h1m2 0h2m3 0h1m5 0h1m3 0h1m2 0h2m28 0h1m-640 1h1m200 0h1m277 0h1m96 0h5m7 0h1m1 0h1m1 0h1m9 0h1m3 0h1m1 0h1m1 0h1m28 0h1m-640 1h1m126 0h1m73 0h1m62 0h1m214 0h1m108 0h2m2 0h1m9 0h1m3 0h2m2 0h1m28 0h1m-640 1h1m199 0h1m278 0h1m108 0h1m3 0h1m9 0h1m3 0h1m3 0h1m28 0h1m-640 1h1m199 0h1m64 0h1m213 0h1m109 0h3m9 0h3m3 0h3m29 0h1m-640 1h1m199 0h1m278 0h1m159 0h1m-640 1h1m198 0h1m65 0h1m213 0h1m159 0h1m-640 1h1m198 0h1m279 0h1m159 0h1m-640 1h1m197 0h1m67 0h1m212 0h1m110 0h1m5 0h1m5 0h1m4 0h3m4 0h1m24 0h1m-640 1h1m197 0h1m280 0h1m109 0h2m4 0h1m1 0h1m3 0h2m3 0h1m3 0h1m2 0h1m25 0h1m-640 1h1m197 0h1m67 0h1m212 0h1m110 0h1m5 0h1m5 0h1m3 0h1m3 0h1m28 0h1m-640 1h1m196 0h1m281 0h1m96 0h5m9 0h1m11 0h1m4 0h4m28 0h1m-640 1h1m196 0h1m69 0h1m211 0h1m110 0h1m11 0h1m7 0h1m28 0h1m-640 1h1m196 0h1m281 0h1m110 0h1m11 0h1m3 0h1m3 0h1m28 0h1m-640 1h1m195 0h1m70 0h1m211 0h1m109 0h3m9 0h3m3 0h3m29 0h1m-640 1h1m195 0h1m282 0h1m159 0h1m-640 1h1m194 0h1m72 0h1m210 0h1m159 0h1m-640 1h1m194 0h1m283 0h1m159 0h1m-640 1h1m194 0h1m72 0h1m210 0h1m108 0h1m2 0h1m4 0h1m4 0h3m3 0h3m4 0h1m24 0h1m-640 1h1m193 0h1m284 0h1m108 0h1m2 0h1m3 0h1m1 0h1m2 0h1m3 0h1m1 0h1m3 0h1m2 0h1m25 0h1m-640 1h1m193 0h1m74 0h1m209 0h1m108 0h1m2 0h1m4 0h1m3 0h1m2 0h2m1 0h1m2 0h2m28 0h1m-640 1h1m193 0h1m284 0h1m96 0h5m7 0h5m7 0h1m1 0h1m1 0h1m1 0h1m1 0h1m1 0h1m28 0h1m-640 1h1m192 0h1m75 0h1m209 0h1m111 0h1m8 0h2m2 0h1m1 0h2m2 0h1m28 0h1m-640 1h1m192 0h1m285 0h1m111 0h1m8 0h1m3 0h1m1 0h1m3 0h1m28 0h1m-640 1h1m191 0h1m77 0h1m208 0h1m111 0h1m9 0h3m3 0h3m29 0h1m-640 1h1m191 0h1m286 0h1m159 0h1m-640 1h1m191 0h1m77 0h1m208 0h1m159 0h1m-640 1h1m190 0h1m287 0h1m159 0h1m-640 1h1m190 0h1m79 0h1m207 0h1m159 0h1m-640 1h1m190 0h1m287 0h1m159 0h1m-640 1h1m189 0h1m80 0h1m207 0h1m159 0h1m-640 1h1m189 0h1m288 0h1m159 0h1m-640 1h1m188 0h1m82 0h1m206 0h1m159 0h1m-640 1h1m188 0h1m289 0h1m159 0h1m-640 1h1m188 0h1m82 0h1m206 0h1m159 0h1m-640 1h1m187 0h1m290 0h1m159 0h1m-640 1h1m187 0h1m84 0h1m205 0h1m159 0h1m-640 1h1m187 0h1m290 0h1m159 0h1m-640 1h1m186 0h1m85 0h1m205 0h1m6 0h5m3 0h1m27 0h5m13 0h5m15 0h1m3 0h1m18 0h3m53 0h1m-640 1h1m186 0h1m291 0h1m6 0h1m35 0h1m17 0h1m19 0h1m3 0h1m17 0h1m3 0h1m52 0h1m-640 1h1m185 0h1m87 0h1m204 0h1m6 0h1m7 0h1m3 0h4m3 0h3m4 0h1m9 0h1m17 0h1m6 0h3m2 0h4m2 0h5m1 0h4m4 0h1m13 0h1m52 0h1m-640 1h1m185 0h1m292 0h1m6 0h4m4 0h1m3 0h1m3 0h1m1 0h1m3 0h1m13 0h4m14 0h4m2 0h1m3 0h1m1 0h1m3 0h1m3 0h1m3 0h1m3 0h1m15 0h2m53 0h1m-640 1h1m185 0h1m87 0h1m204 0h1m6 0h1m7 0h1m3 0h1m5 0h5m3 0h1m13 0h1m13 0h1m5 0h1m3 0h1m1 0h1m7 0h1m3 0h1m3 0h1m3 0h1m13 0h1m52 0h1m-640 1h1m184 0h1m293 0h1m6 0h1m7 0h1m3 0h1m5 0h1m17 0h1m3 0h1m3 0h1m9 0h1m5 0h1m2 0h2m1 0h1m7 0h1m3 0h1m3 0h1m13 0h1m3 0h1m3 0h1m48 0h1m-640 1h1m184 0h1m89 0h1m203 0h1m6 0h1m7 0h1m3 0h1m6 0h4m14 0h3m4 0h1m9 0h5m2 0h2m1 0h1m1 0h1m7 0h1m3 0h1m3 0h1m14 0h3m4 0h1m48 0h1m-640 1h1m478 0h1m49 0h1m59 0h1m49 0h1m-640 1h1m183 0h1m90 0h1m203 0h1m159 0h1m-640 1h1m478 0h1m159 0h1m-640 1h1m182 0h1m92 0h1m202 0h1m8 0h1m5 0h1m29 0h1m15 0h1m3 0h1m9 0h1m29 0h1m54 0h1m-640 1h1m478 0h1m7 0h1m1 0h1m33 0h2m15 0h1m3 0h1m9 0h1m28 0h2m54 0h1m-640 1h1m478 0h1m6 0h1m3 0h1m3 0h1m3 0h4m10 0h1m11 0h1m15 0h1m3 0h1m2 0h3m2 0h5m2 0h3m2 0h4m4 0h1m11 0h1m54 0h1m-640 1h1m181 0h1m296 0h1m6 0h1m3 0h1m3 0h1m3 0h1m3 0h1m21 0h1m15 0h1m3 0h1m1 0h1m3 0h1m3 0h1m3 0h1m3 0h1m1 0h1m3 0h1m15 0h1m54 0h1m-640 1h1m478 0h1m6 0h5m3 0h1m3 0h1m13 0h1m11 0h1m15 0h1m1 0h1m1 0h1m1 0h1m3 0h1m3 0h1m3 0h5m1 0h1m7 0h1m11 0h1m54 0h1m-640 1h1m478 0h1m6 0h1m3 0h1m3 0h1m3 0h1m25 0h1m5 0h1m9 0h1m1 0h1m1 0h1m1 0h1m2 0h2m3 0h1m3 0h1m5 0h1m19 0h1m54 0h1m-640 1h1m478 0h1m6 0h1m3 0h1m3 0h1m3 0h1m24 0h3m4 0h1m10 0h1m1 0h1m3 0h2m1 0h1m3 0h1m4 0h4m1 0h1m18 0h3m53 0h1m-640 1h1m478 0h1m49 0h1m109 0h1m-640 1h1m478 0h1m159 0h1m-640 1h1m478 0h1m159 0h1m-640 1h1m478 0h1m7 0h3m27 0h3m14 0h5m3 0h1m21 0h1m2 0h1m14 0h1m3 0h1m9 0h1m16 0h3m23 0h1m-640 1h1m478 0h1m6 0h1m3 0h1m25 0h1m3 0h1m13 0h1m29 0h1m2 0h1m14 0h2m1 0h2m9 0h1m15 0h1m3 0h1m22 0h1m-640 1h1m478 0h1m6 0h1m6 0h3m2 0h4m4 0h1m9 0h1m17 0h1m7 0h1m3 0h1m3 0h1m3 0h1m9 0h1m2 0h1m14 0h1m1 0h1m1 0h1m1 0h1m3 0h1m1 0h5m3 0h1m9 0h1m2 0h2m22 0h1m-640 1h1m178 0h1m299 0h1m6 0h1m5 0h1m3 0h1m1 0h1m3 0h1m13 0h4m14 0h4m4 0h1m4 0h1m1 0h1m14 0h5m13 0h1m3 0h1m1 0h1m3 0h1m3 0h1m15 0h1m1 0h1m1 0h1m22 0h1m-640 1h1m478 0h1m6 0h1m5 0h1m3 0h1m1 0h1m7 0h1m9 0h1m3 0h1m13 0h1m7 0h1m5 0h1m5 0h1m12 0h1m14 0h1m3 0h1m1 0h1m3 0h1m3 0h1m5 0h1m9 0h2m2 0h1m22 0h1m-640 1h1m478 0h1m6 0h1m3 0h1m1 0h1m2 0h2m1 0h1m17 0h1m3 0h1m3 0h1m9 0h1m7 0h1m4 0h1m1 0h1m17 0h1m4 0h1m9 0h1m3 0h1m1 0h1m2 0h2m3 0h1m15 0h1m3 0h1m22 0h1m-640 1h1m478 0h1m7 0h3m3 0h2m1 0h1m1 0h1m18 0h3m4 0h1m9 0h1m7 0h1m3 0h1m3 0h1m16 0h1m4 0h1m9 0h1m3 0h1m2 0h2m1 0h1m3 0h1m16 0h3m23 0h1m-640 1h1m478 0h1m43 0h1m47 0h1m67 0h1m-640 1h1m176 0h1m301 0h1m159 0h1m-640 1h1m478 0h1m159 0h1m-640 1h1m175 0h1m302 0h1m6 0h1m3 0h1m32 0h3m14 0h1m3 0h1m3 0h1m21 0h1m2 0h1m65 0h1m-640 1h1m175 0h1m302 0h1m6 0h1m3 0h1m31 0h1m3 0h1m13 0h1m3 0h1m25 0h1m2 0h1m65 0h1m-640 1h1m174 0h1m303 0h1m6 0h1m3 0h1m2 0h3m2 0h4m3 0h3m4 0h1m9 0h1m17 0h1m3 0h1m3 0h1m3 0h4m4 0h1m9 0h1m2 0h1m65 0h1m-640 1h1m174 0h1m303 0h1m7 0h1m1 0h1m2 0h1m3 0h1m1 0h1m3 0h1m1 0h1m3 0h1m13 0h4m15 0h1m1 0h1m4 0h1m3 0h1m3 0h1m13 0h5m64 0h1m-640 1h1m173 0h1m304 0h1m8 0h1m3 0h1m3 0h1m1 0h1m3 0h1m1 0h1m3 0h1m3 0h1m9 0h1m3 0h1m15 0h1m5 0h1m3 0h1m3 0h1m3 0h1m12 0h1m65 0h1m-640 1h1m173 0h1m304 0h1m8 0h1m3 0h1m2 0h2m1 0h1m3 0h1m1 0h1m3 0h1m13 0h1m3 0h1m3 0h1m11 0h1m5 0h1m3 0h1m3 0h1m16 0h1m65 0h1m-640 1h1m173 0h1m304 0h1m8 0h1m4 0h2m1 0h1m1 0h1m3 0h1m2 0h4m14 0h3m4 0h1m11 0h1m5 0h1m3 0h1m3 0h1m16 0h1m65 0h1m-640 1h1m172 0h1m305 0h1m28 0h1m20 0h1m109 0h1m-640 1h1m172 0h1m305 0h1m24 0h4m131 0h1m-640 1h1m172 0h1m305 0h1m159 0h1m-640 1h1m478 0h1m6 0h1m3 0h1m14 0h3m14 0h1m3 0h1m15 0h1m17 0h1m16 0h3m14 0h3m17 0h1m24 0h1m-640 1h1m171 0h1m306 0h1m6 0h2m1 0h2m13 0h1m3 0h1m13 0h2m2 0h1m14 0h2m16 0h1m1 0h1m14 0h1m3 0h1m13 0h1m2 0h1m15 0h2m24 0h1m-640 1h1m170 0h1m307 0h1m6 0h1m1 0h1m1 0h1m3 0h1m9 0h1m3 0h1m13 0h1m1 0h1m1 0h1m3 0h1m11 0h1m15 0h1m3 0h1m3 0h1m9 0h1m3 0h1m13 0h1m3 0h1m3 0h1m11 0h1m24 0h1m-640 1h1m170 0h1m307 0h1m6 0h1m3 0h1m14 0h4m13 0h1m1 0h1m1 0h1m15 0h1m15 0h1m3 0h1m14 0h4m13 0h1m3 0h1m15 0h1m24 0h1m-640 1h1m170 0h1m307 0h1m6 0h1m3 0h1m3 0h1m13 0h1m13 0h1m2 0h2m3 0h1m11 0h1m15 0h5m3 0h1m13 0h1m13 0h1m3 0h1m3 0h1m11 0h1m24 0h1m-640 1h1m169 0h1m308 0h1m6 0h1m3 0h1m13 0h1m3 0h1m3 0h1m9 0h1m3 0h1m15 0h1m5 0h1m9 0h1m3 0h1m13 0h1m3 0h1m3 0h1m9 0h1m2 0h1m16 0h1m24 0h1m-640 1h1m169 0h1m308 0h1m6 0h1m3 0h1m14 0h3m4 0h1m9 0h1m3 0h1m14 0h3m4 0h1m9 0h1m3 0h1m14 0h3m4 0h1m9 0h3m16 0h3m23 0h1m-640 1h1m169 0h1m308 0h1m31 0h1m35 0h1m35 0h1m55 0h1m-640 1h1m168 0h1m309 0h1m159 0h1m-640 1h1m168 0h1m309 0h1m159 0h1m-640 1h1m167 0h1m310 0h1m8 0h1m27 0h5m14 0h3m26 0h1m2 0h1m15 0h3m12 0h1m15 0h1m24 0h1m-640 1h1m167 0h1m310 0h1m7 0h1m1 0h1m26 0h1m17 0h1m3 0h1m25 0h1m2 0h1m14 0h1m3 0h1m11 0h1m14 0h2m24 0h1m-640 1h1m167 0h1m310 0h1m6 0h1m3 0h1m1 0h4m3 0h3m4 0h1m9 0h1m17 0h1m5 0h1m3 0h1m2 0h3m4 0h1m9 0h1m2 0h1m14 0h1m6 0h3m3 0h4m3 0h1m11 0h1m24 0h1m-640 1h1m166 0h1m311 0h1m6 0h1m3 0h1m1 0h1m3 0h1m1 0h1m3 0h1m13 0h4m15 0h3m2 0h1m3 0h1m1 0h1m3 0h1m13 0h5m13 0h1m5 0h1m3 0h1m1 0h1m3 0h1m15 0h1m24 0h1m-640 1h1m166 0h1m311 0h1m6 0h5m1 0h1m3 0h1m1 0h1m3 0h1m3 0h1m13 0h1m17 0h1m1 0h1m3 0h1m1 0h1m7 0h1m12 0h1m14 0h1m5 0h1m3 0h1m1 0h1m3 0h1m3 0h1m11 0h1m24 0h1m-640 1h1m166 0h1m311 0h1m6 0h1m3 0h1m1 0h1m3 0h1m1 0h1m3 0h1m13 0h1m3 0h1m3 0h1m9 0h1m3 0h1m1 0h1m2 0h2m1 0h1m3 0h1m16 0h1m4 0h1m9 0h1m3 0h1m1 0h1m2 0h2m1 0h1m3 0h1m15 0h1m24 0h1m-640 1h1m165 0h1m312 0h1m6 0h1m3 0h1m1 0h1m3 0h1m2 0h4m14 0h3m4 0h1m10 0h3m3 0h2m1 0h1m2 0h3m17 0h1m4 0h1m10 0h3m3 0h2m1 0h1m2 0h4m14 0h3m23 0h1m-640 1h1m165 0h1m312 0h1m22 0h1m20 0h1m47 0h1m67 0h1m-640 1h1m164 0h1m313 0h1m18 0h4m137 0h1m-640 1h1m164 0h1m313 0h1m159 0h1m-640 1h1m164 0h1m313 0h1m6 0h1m42 0h3m15 0h3m2 0h1m37 0h1m48 0h1m-640 1h1m478 0h1m6 0h1m41 0h1m3 0h1m13 0h1m3 0h1m1 0h1m36 0h2m48 0h1m-640 1h1m478 0h1m6 0h1m6 0h3m3 0h3m2 0h4m2 0h4m4 0h1m9 0h1m3 0h1m13 0h1m5 0h4m3 0h3m2 0h4m3 0h3m4 0h1m11 0h1m48 0h1m-640 1h1m478 0h1m6 0h1m5 0h1m3 0h1m1 0h1m3 0h1m1 0h1m3 0h1m1 0h1m3 0h1m14 0h4m14 0h3m2 0h1m3 0h1m1 0h1m3 0h1m1 0h1m3 0h1m1 0h1m3 0h1m15 0h1m48 0h1m-640 1h1m162 0h1m315 0h1m6 0h1m5 0h5m1 0h1m3 0h1m1 0h1m5 0h1m3 0h1m3 0h1m13 0h1m17 0h1m1 0h1m3 0h1m1 0h1m3 0h1m1 0h1m5 0h5m3 0h1m11 0h1m48 0h1m-640 1h1m162 0h1m315 0h1m6 0h1m5 0h1m5 0h1m2 0h2m1 0h1m5 0h1m3 0h1m13 0h1m3 0h1m3 0h1m9 0h1m3 0h1m1 0h1m3 0h1m1 0h1m2 0h2m1 0h1m5 0h1m19 0h1m48 0h1m-640 1h1m161 0h1m316 0h1m6 0h5m2 0h4m2 0h2m1 0h1m1 0h1m5 0h1m3 0h1m14 0h3m4 0h1m10 0h3m2 0h1m3 0h1m2 0h2m1 0h1m1 0h1m6 0h4m14 0h3m47 0h1m-640 1h1m161 0h1m316 0h1m55 0h1m103 0h1m-640 1h1m161 0h1m316 0h1m159 0h1m-640 1h1m160 0h1m317 0h1m159 0h1m-640 1h1m160 0h1m317 0h1m159 0h1m-640 1h1m160 0h1m317 0h1m159 0h1m-640 1h1m159 0h1m318 0h1m159 0h1m-640 1h1m159 0h1m318 0h1m159 0h1m-640 1h1m478 0h1m159 0h1m-640 1h1m158 0h1m319 0h1m159 0h1m-640 1h1m158 0h1m319 0h1m159 0h1m-640 1h1m157 0h1m320 0h1m159 0h1m-640 1h1m157 0h1m320 0h1m159 0h1m-640 1h1m157 0h1m320 0h1m159 0h1m-640 1h1m156 0h1m321 0h1m159 0h1m-640 1h1m156 0h1m321 0h1m159 0h1m-640 1h1m155 0h1m322 0h1m159 0h1m-640 1h1m155 0h1m322 0h1m159 0h1m-640 1h1m478 0h1m159 0h1m-640 1h1m478 0h1m159 0h1m-640 1h1m478 0h1m159 0h1m-640 1h1m478 0h1m159 0h1m-640 1h1m478 0h1m159 0h1m-640 1h1m478 0h1m159 0h1m-640 1h1m478 0h1m159 0h1m-640 1h1m478 0h1m159 0h1m-640 1h1m478 0h1m159 0h1m-640 1h1m478 0h1m159 0h1m-640 1h1m478 0h1m159 0h1m-640 1h1m478 0h1m159 0h1m-640 1h1m478 0h1m159 0h1m-640 1h1m478 0h1m159 0h1m-640 1h1m478 0h1m159 0h1m-640 1h1m478 0h1m159 0h1m-640 1h1m478 0h1m159 0h1m-640 1h1m478 0h1m159 0h1m-640 1h640"/>
<path stroke="#fff" d="M0 .5m488 7h1m11 0h1m17 0h1m21 0h5m7 0h1m2 0h1m4 0h1m4 0h3m-81 1h1m1 0h1m10 0h1m17 0h1m21 0h1m11 0h1m2 0h1m3 0h2m3 0h1m3 0h1m-83 1h1m3 0h1m2 0h4m1 0h5m1 0h4m3 0h3m4 0h1m4 0h3m3 0h3m8 0h1m11 0h1m2 0h1m4 0h1m3 0h1m-79 1h1m3 0h1m1 0h1m7 0h1m3 0h1m3 0h1m1 0h1m3 0h1m3 0h1m3 0h1m3 0h1m1 0h1m3 0h1m7 0h4m8 0h5m3 0h1m3 0h1m1 0h3m-83 1h5m2 0h3m4 0h1m3 0h1m5 0h1m3 0h1m3 0h1m3 0h1m3 0h1m1 0h1m3 0h1m11 0h1m10 0h1m4 0h1m3 0h1m3 0h1m-341 1h22m236 0h1m3 0h1m5 0h1m3 0h1m3 0h1m5 0h1m3 0h1m3 0h1m3 0h1m3 0h1m1 0h1m3 0h1m7 0h1m3 0h1m2 0h2m6 0h1m4 0h1m3 0h1m3 0h1m-357 1h16m22 0h16m220 0h1m3 0h1m1 0h4m4 0h1m3 0h1m6 0h3m4 0h1m4 0h3m3 0h4m8 0h3m3 0h2m6 0h1m3 0h3m3 0h3m-364 1h8m48 0h1m5 0h8m258 0h1m-335 1h6m56 0h1m13 0h6m248 0h4m-338 1h4m62 0h1m19 0h4m-94 1h4m66 0h1m23 0h4m-102 1h4m69 0h1m28 0h4m-109 1h3m73 0h1m32 0h4m-117 1h4m76 0h1m36 0h4m-125 1h4m80 0h1m40 0h3m-132 1h4m84 0h1m43 0h4m-139 1h3m88 0h1m47 0h4m-145 1h2m91 0h1m51 0h2m-149 1h2m93 0h1m53 0h2m-154 1h3m95 0h1m55 0h3m-160 1h3m97 0h1m59 0h2m166 0h5m9 0h1m11 0h1m17 0h1m5 0h1m11 0h1m3 0h5m14 0h3m3 0h3m3 0h3m3 0h3m-436 1h2m100 0h1m61 0h3m163 0h1m24 0h1m1 0h1m22 0h1m10 0h2m7 0h1m13 0h1m3 0h1m1 0h1m3 0h1m1 0h1m3 0h1m1 0h1m3 0h1m-440 1h3m102 0h1m64 0h3m160 0h1m5 0h4m4 0h1m9 0h1m3 0h1m1 0h4m2 0h4m4 0h1m5 0h1m11 0h1m6 0h1m18 0h1m1 0h1m2 0h2m5 0h1m1 0h1m-438 1h2m105 0h1m67 0h2m158 0h4m2 0h1m3 0h1m3 0h1m9 0h1m3 0h1m1 0h1m3 0h1m1 0h1m3 0h1m3 0h1m5 0h1m11 0h1m5 0h1m18 0h1m2 0h1m1 0h1m1 0h1m4 0h1m2 0h4m-443 1h2m107 0h1m69 0h2m156 0h1m5 0h1m7 0h1m9 0h5m1 0h1m3 0h1m1 0h1m7 0h1m5 0h1m11 0h1m4 0h1m18 0h1m3 0h2m2 0h1m3 0h1m3 0h1m3 0h1m-447 1h3m109 0h1m71 0h3m153 0h1m5 0h1m7 0h1m9 0h1m3 0h1m1 0h1m3 0h1m1 0h1m7 0h1m5 0h1m11 0h1m3 0h1m7 0h1m10 0h1m4 0h1m3 0h1m2 0h1m4 0h1m3 0h1m-449 1h2m112 0h1m74 0h2m151 0h1m5 0h1m7 0h1m9 0h1m3 0h1m1 0h4m2 0h1m7 0h1m5 0h1m10 0h3m2 0h1m7 0h1m9 0h5m2 0h3m2 0h5m2 0h3m-450 1h2m1 0h1m112 0h1m76 0h2m179 0h1m42 0h1m-420 1h2m4 0h1m111 0h1m78 0h2m177 0h1m-379 1h2m6 0h1m110 0h1m81 0h2m-205 1h2m9 0h1m109 0h1m83 0h2m145 0h1m4 0h3m9 0h3m4 0h1m10 0h3m3 0h3m23 0h1m2 0h3m3 0h5m14 0h3m9 0h3m3 0h3m9 0h3m2 0h1m3 0h1m1 0h5m2 0h1m-498 1h2m11 0h1m109 0h1m85 0h2m142 0h2m3 0h1m3 0h1m7 0h1m3 0h1m2 0h2m9 0h1m3 0h1m1 0h1m3 0h1m21 0h1m3 0h1m2 0h1m4 0h1m15 0h1m3 0h1m7 0h1m3 0h1m1 0h1m3 0h1m7 0h1m3 0h1m1 0h2m1 0h2m3 0h1m5 0h1m-501 1h2m14 0h1m108 0h1m87 0h2m141 0h1m3 0h1m2 0h2m3 0h1m7 0h1m3 0h1m5 0h1m3 0h1m2 0h2m1 0h1m2 0h2m2 0h3m2 0h2m1 0h1m9 0h1m4 0h1m3 0h1m3 0h1m15 0h1m3 0h1m3 0h1m3 0h1m2 0h2m1 0h1m2 0h2m7 0h1m5 0h1m1 0h1m1 0h1m3 0h1m6 0h1m-504 1h2m16 0h1m108 0h1m89 0h2m139 0h1m3 0h1m1 0h1m1 0h1m9 0h2m4 0h1m9 0h1m1 0h1m1 0h1m1 0h1m1 0h1m1 0h1m1 0h1m3 0h1m1 0h1m1 0h1m1 0h1m8 0h1m4 0h1m3 0h1m3 0h1m9 0h5m2 0h3m8 0h1m1 0h1m1 0h1m1 0h1m1 0h1m1 0h1m7 0h1m1 0h3m1 0h1m3 0h1m3 0h1m6 0h1m-506 1h2m19 0h1m107 0h1m91 0h2m137 0h1m3 0h2m2 0h1m3 0h1m7 0h1m3 0h1m5 0h1m3 0h2m2 0h1m1 0h2m2 0h1m1 0h1m3 0h1m1 0h1m1 0h1m1 0h1m8 0h1m4 0h1m3 0h1m3 0h1m15 0h1m3 0h1m3 0h1m3 0h2m2 0h1m1 0h2m2 0h1m7 0h1m3 0h1m1 0h1m3 0h1m3 0h1m6 0h1m-508 1h2m21 0h1m107 0h1m93 0h2m135 0h1m3 0h1m3 0h1m7 0h1m3 0h1m3 0h1m9 0h1m3 0h1m1 0h1m3 0h1m1 0h1m2 0h2m1 0h1m3 0h1m9 0h1m3 0h1m2 0h1m4 0h1m15 0h1m3 0h1m7 0h1m3 0h1m1 0h1m3 0h1m7 0h1m3 0h1m1 0h1m3 0h1m3 0h1m5 0h1m-509 1h2m24 0h1m106 0h1m95 0h2m132 0h3m3 0h3m9 0h3m3 0h3m9 0h3m3 0h3m3 0h2m1 0h1m1 0h1m3 0h1m10 0h1m2 0h3m5 0h1m16 0h3m9 0h3m3 0h3m9 0h3m2 0h1m3 0h1m3 0h1m4 0h1m-509 1h1m26 0h1m106 0h1m97 0h1m-234 1h1m27 0h1m105 0h1m99 0h1m-237 1h2m29 0h1m104 0h1m100 0h2m-240 1h1m31 0h1m104 0h1m102 0h1m-243 1h2m33 0h1m70 0h34m103 0h2m-247 1h2m35 0h1m63 0h7m1 0h1m15 0h1m15 0h6m100 0h2m-251 1h2m38 0h1m56 0h6m8 0h1m15 0h1m15 0h1m5 0h7m95 0h2m-254 1h1m40 0h1m49 0h7m14 0h1m15 0h1m15 0h1m12 0h6m91 0h1m-257 1h2m42 0h1m44 0h4m5 0h1m15 0h1m15 0h1m15 0h1m16 0h1m1 0h5m87 0h2m-260 1h1m44 0h1m40 0h4m9 0h1m15 0h1m15 0h1m15 0h1m16 0h1m6 0h4m85 0h1m-263 1h2m46 0h1m34 0h5m13 0h1m15 0h1m15 0h1m15 0h1m16 0h1m10 0h4m82 0h2m-266 1h1m48 0h1m30 0h4m1 0h1m16 0h1m16 0h1m14 0h1m14 0h1m16 0h1m15 0h5m76 0h1m2 0h1m-269 1h2m49 0h1m26 0h4m5 0h1m16 0h1m16 0h1m14 0h1m14 0h1m16 0h1m16 0h1m3 0h4m72 0h1m3 0h2m-272 1h1m52 0h1m22 0h3m10 0h1m16 0h1m15 0h1m14 0h1m14 0h1m16 0h1m15 0h1m8 0h2m69 0h1m6 0h1m-274 1h1m53 0h1m20 0h2m13 0h1m16 0h1m15 0h1m14 0h1m14 0h1m16 0h1m15 0h1m10 0h2m66 0h1m8 0h1m-277 1h2m55 0h1m17 0h2m15 0h1m16 0h1m15 0h1m14 0h1m14 0h1m16 0h1m15 0h1m12 0h2m63 0h1m10 0h2m-280 1h1m57 0h1m15 0h3m17 0h1m15 0h1m14 0h30m1 0h1m15 0h1m16 0h1m14 0h3m60 0h1m12 0h1m-282 1h1m59 0h1m11 0h3m2 0h1m17 0h1m15 0h1m8 0h6m30 0h6m11 0h1m15 0h1m17 0h4m56 0h1m14 0h1m-285 1h2m60 0h1m8 0h3m6 0h1m16 0h1m15 0h1m2 0h6m42 0h7m4 0h1m15 0h1m16 0h1m4 0h2m53 0h1m16 0h1m-287 1h1m63 0h1m5 0h2m9 0h1m16 0h1m11 0h7m55 0h6m14 0h1m16 0h1m6 0h2m51 0h1m17 0h2m-290 1h1m64 0h1m3 0h2m12 0h1m16 0h1m4 0h6m68 0h6m8 0h1m16 0h1m8 0h2m48 0h1m20 0h1m-292 1h1m66 0h3m14 0h1m16 0h5m80 0h5m2 0h1m16 0h1m11 0h3m44 0h1m22 0h1m-294 1h1m65 0h3m16 0h1m14 0h3m1 0h1m87 0h3m16 0h1m14 0h3m41 0h1m23 0h1m-297 1h2m63 0h3m2 0h1m17 0h1m10 0h3m4 0h1m90 0h3m12 0h1m17 0h3m38 0h1m25 0h1m-299 1h1m63 0h2m6 0h1m16 0h1m7 0h3m8 0h1m92 0h3m9 0h1m17 0h1m2 0h2m35 0h1m27 0h2m-302 1h1m62 0h2m8 0h1m17 0h1m3 0h3m11 0h1m95 0h3m6 0h1m16 0h1m5 0h2m32 0h1m30 0h1m-304 1h1m62 0h1m11 0h1m16 0h4m14 0h1m98 0h3m2 0h1m17 0h1m7 0h2m30 0h1m31 0h1m-306 1h1m61 0h2m12 0h1m14 0h3m17 0h1m101 0h3m16 0h1m10 0h2m27 0h1m33 0h1m-308 1h1m61 0h1m14 0h1m11 0h3m21 0h1m103 0h3m13 0h1m12 0h1m25 0h1m35 0h1m-310 1h1m60 0h2m16 0h1m7 0h3m24 0h1m103 0h1m2 0h2m11 0h1m13 0h2m23 0h1m36 0h1m-312 1h1m59 0h2m1 0h1m16 0h1m5 0h2m27 0h1m102 0h1m5 0h2m8 0h1m16 0h1m21 0h1m38 0h1m-314 1h1m58 0h2m3 0h1m17 0h1m2 0h2m29 0h1m102 0h1m7 0h2m6 0h1m17 0h2m18 0h1m40 0h1m-316 1h1m57 0h2m6 0h1m16 0h3m32 0h1m100 0h1m10 0h3m2 0h1m17 0h1m2 0h2m16 0h1m41 0h1m-318 1h1m57 0h1m8 0h1m15 0h2m34 0h1m100 0h1m13 0h3m17 0h1m4 0h2m13 0h1m43 0h1m-320 1h1m56 0h2m10 0h1m11 0h3m36 0h1m100 0h1m15 0h2m15 0h1m7 0h2m10 0h1m45 0h1m-322 1h1m56 0h1m12 0h1m9 0h2m39 0h1m99 0h1m18 0h2m12 0h1m10 0h1m8 0h1m47 0h1m-324 1h1m55 0h2m14 0h1m6 0h2m42 0h1m98 0h1m20 0h2m10 0h1m11 0h2m6 0h1m48 0h1m-326 1h1m55 0h1m16 0h1m5 0h1m44 0h1m97 0h1m23 0h2m7 0h1m14 0h1m4 0h1m50 0h1m-328 1h1m55 0h1m18 0h1m2 0h2m45 0h1m97 0h1m25 0h2m4 0h1m16 0h1m2 0h1m52 0h1m-330 1h1m54 0h2m1 0h1m17 0h3m47 0h1m96 0h1m28 0h2m2 0h1m17 0h3m53 0h1m-332 1h1m54 0h1m3 0h1m16 0h2m50 0h1m24 0h26m45 0h1m30 0h2m19 0h2m54 0h1m-334 1h1m54 0h1m5 0h1m13 0h2m52 0h1m19 0h5m26 0h6m39 0h1m31 0h2m17 0h1m2 0h1m54 0h1m-336 1h1m54 0h1m7 0h1m10 0h2m54 0h1m8 0h11m37 0h11m27 0h1m34 0h2m15 0h1m3 0h1m54 0h1m-338 1h1m53 0h2m8 0h1m9 0h1m56 0h1m4 0h4m59 0h4m23 0h1m36 0h2m12 0h1m5 0h2m53 0h1m81 0h1m9 0h1m5 0h1m21 0h3m34 0h3m2 0h1m2 0h1m3 0h3m4 0h1m5 0h1m3 0h1m2 0h1m3 0h3m9 0h3m3 0h3m3 0h3m3 0h3m-565 1h1m53 0h1m11 0h1m7 0h1m58 0h1m1 0h2m67 0h2m20 0h1m39 0h1m10 0h1m8 0h1m53 0h1m80 0h1m9 0h1m27 0h1m2 0h1m32 0h1m3 0h1m1 0h1m2 0h1m2 0h1m3 0h1m2 0h2m4 0h2m3 0h1m2 0h1m2 0h1m3 0h1m7 0h1m3 0h1m1 0h1m3 0h1m1 0h1m3 0h1m1 0h1m3 0h1m-567 1h1m53 0h1m13 0h1m4 0h2m57 0h4m71 0h4m16 0h1m40 0h2m8 0h1m9 0h1m53 0h1m79 0h1m1 0h1m3 0h1m3 0h1m5 0h1m4 0h3m2 0h4m8 0h1m3 0h1m2 0h3m2 0h1m3 0h1m7 0h5m11 0h1m1 0h1m2 0h1m2 0h1m7 0h1m5 0h1m3 0h1m2 0h1m2 0h1m3 0h1m11 0h1m5 0h1m1 0h1m3 0h1m1 0h1m3 0h1m-568 1h1m52 0h2m14 0h1m3 0h1m55 0h4m79 0h4m12 0h1m42 0h1m6 0h1m11 0h2m52 0h1m78 0h1m1 0h1m3 0h1m3 0h1m5 0h1m3 0h1m3 0h1m1 0h1m3 0h1m7 0h1m3 0h1m1 0h1m3 0h1m1 0h1m3 0h1m22 0h1m2 0h5m1 0h4m4 0h1m5 0h1m3 0h5m2 0h3m11 0h1m5 0h1m3 0h4m2 0h4m-568 1h1m51 0h1m17 0h1m1 0h1m53 0h3m87 0h3m8 0h1m44 0h1m4 0h1m14 0h1m51 0h1m74 0h1m3 0h1m1 0h1m3 0h1m3 0h1m5 0h1m3 0h1m3 0h1m1 0h1m3 0h1m7 0h1m3 0h1m1 0h1m3 0h1m1 0h1m3 0h1m7 0h5m9 0h1m6 0h1m2 0h1m3 0h1m3 0h1m5 0h1m6 0h1m2 0h1m3 0h1m9 0h1m5 0h1m7 0h1m5 0h1m-569 1h1m50 0h2m18 0h2m50 0h4m93 0h4m4 0h1m45 0h2m2 0h1m15 0h2m50 0h1m73 0h1m3 0h1m1 0h1m2 0h2m3 0h1m5 0h1m3 0h1m2 0h2m1 0h1m3 0h1m7 0h1m2 0h1m2 0h1m2 0h2m1 0h1m3 0h1m20 0h1m7 0h1m2 0h1m3 0h1m3 0h1m5 0h1m6 0h1m2 0h1m3 0h1m2 0h2m4 0h1m5 0h1m4 0h1m3 0h1m1 0h1m3 0h1m-570 1h1m50 0h1m2 0h1m15 0h2m48 0h4m101 0h4m48 0h2m18 0h1m50 0h1m73 0h3m3 0h2m1 0h1m3 0h1m5 0h1m4 0h2m1 0h1m1 0h1m3 0h1m7 0h3m4 0h2m1 0h1m2 0h4m19 0h5m4 0h1m3 0h3m3 0h3m3 0h3m5 0h1m3 0h3m3 0h2m3 0h5m1 0h5m2 0h3m3 0h3m-570 1h1m50 0h1m4 0h1m13 0h1m48 0h2m108 0h3m48 0h1m17 0h2m50 0h1m129 0h1m-482 1h1m49 0h2m5 0h1m12 0h1m46 0h3m113 0h3m46 0h1m15 0h1m2 0h2m49 0h1m124 0h4m-482 1h1m49 0h1m8 0h1m9 0h2m45 0h2m119 0h2m45 0h2m12 0h1m5 0h1m49 0h1m-355 1h1m48 0h1m10 0h1m7 0h1m45 0h2m123 0h2m45 0h1m10 0h1m7 0h1m48 0h1m-356 1h1m48 0h1m12 0h1m5 0h1m44 0h2m127 0h2m44 0h1m8 0h1m9 0h1m48 0h1m-358 1h1m48 0h1m13 0h1m4 0h1m43 0h2m131 0h2m43 0h1m7 0h1m10 0h1m48 0h1m-360 1h1m48 0h1m15 0h1m1 0h2m42 0h2m135 0h2m42 0h2m4 0h1m12 0h1m48 0h1m-361 1h1m47 0h1m17 0h1m42 0h2m139 0h2m42 0h1m2 0h1m14 0h1m47 0h1m-362 1h1m47 0h1m17 0h1m41 0h2m143 0h2m41 0h2m16 0h1m47 0h1m-364 1h1m47 0h1m17 0h1m40 0h2m147 0h1m41 0h1m17 0h1m47 0h1m-366 1h1m47 0h2m15 0h2m40 0h1m150 0h2m40 0h2m16 0h1m47 0h1m-367 1h1m46 0h1m2 0h1m13 0h1m41 0h1m69 0h1m16 0h1m66 0h1m41 0h1m15 0h2m46 0h1m-368 1h1m46 0h1m4 0h1m11 0h1m40 0h2m71 0h1m14 0h1m68 0h2m40 0h1m13 0h1m2 0h1m46 0h1m-370 1h1m46 0h1m6 0h1m9 0h1m39 0h2m55 0h2m16 0h1m14 0h1m70 0h2m39 0h1m11 0h1m4 0h1m46 0h1m-371 1h1m45 0h1m8 0h2m6 0h1m39 0h1m59 0h2m15 0h1m12 0h1m17 0h2m54 0h1m39 0h1m9 0h1m6 0h1m45 0h1m-372 1h1m1 0h2m42 0h1m11 0h1m4 0h1m38 0h2m62 0h3m12 0h1m11 0h1m15 0h3m57 0h1m39 0h1m7 0h1m8 0h1m45 0h1m-374 1h1m4 0h1m40 0h1m13 0h1m2 0h1m38 0h1m67 0h2m11 0h1m9 0h1m13 0h3m61 0h2m38 0h1m6 0h1m9 0h1m45 0h1m-375 1h1m5 0h1m38 0h1m15 0h2m38 0h1m70 0h3m9 0h1m8 0h1m9 0h4m66 0h1m38 0h1m4 0h1m11 0h1m44 0h1m-376 1h1m7 0h2m35 0h1m16 0h1m37 0h2m74 0h2m7 0h1m7 0h1m7 0h3m71 0h2m37 0h1m2 0h1m13 0h1m44 0h1m-378 1h1m10 0h1m33 0h1m16 0h1m36 0h2m44 0h1m33 0h3m5 0h1m5 0h1m5 0h3m76 0h2m36 0h2m15 0h1m44 0h1m-379 1h1m11 0h2m31 0h1m15 0h1m36 0h1m46 0h1m36 0h2m3 0h1m5 0h1m2 0h3m81 0h1m36 0h1m15 0h1m44 0h1m-380 1h1m14 0h1m29 0h1m15 0h1m35 0h2m46 0h1m39 0h2m2 0h1m3 0h1m1 0h2m85 0h1m36 0h1m15 0h1m44 0h1m-381 1h1m15 0h2m26 0h2m14 0h1m35 0h1m48 0h1m137 0h2m35 0h1m15 0h1m43 0h1m-382 1h1m18 0h1m24 0h1m2 0h1m12 0h1m35 0h1m49 0h1m139 0h1m35 0h1m15 0h1m43 0h1m-383 1h1m19 0h1m23 0h1m3 0h1m10 0h1m34 0h2m50 0h1m140 0h1m35 0h1m14 0h1m43 0h1m-384 1h1m21 0h2m20 0h1m5 0h1m8 0h1m34 0h1m51 0h1m142 0h2m33 0h2m12 0h1m1 0h1m43 0h1m-386 1h1m24 0h1m18 0h1m7 0h2m5 0h1m34 0h1m37 0h1m14 0h1m144 0h1m31 0h1m2 0h1m9 0h2m3 0h1m43 0h1m-387 1h1m25 0h2m16 0h1m9 0h1m3 0h1m34 0h1m39 0h1m13 0h1m145 0h1m29 0h1m4 0h1m7 0h1m5 0h1m43 0h1m-388 1h1m28 0h1m14 0h1m11 0h1m2 0h1m32 0h2m41 0h1m12 0h1m146 0h2m26 0h1m5 0h1m6 0h1m7 0h1m43 0h1m-390 1h1m30 0h2m11 0h1m13 0h2m32 0h1m44 0h1m10 0h1m149 0h1m23 0h2m7 0h1m3 0h2m9 0h1m43 0h1m-392 1h1m33 0h1m9 0h1m14 0h1m32 0h1m46 0h2m8 0h1m150 0h1m21 0h1m10 0h1m1 0h1m12 0h1m43 0h1m-393 1h1m34 0h1m8 0h1m13 0h1m32 0h1m49 0h1m159 0h1m19 0h1m12 0h1m13 0h1m43 0h1m-394 1h1m36 0h2m5 0h1m13 0h1m32 0h1m51 0h1m159 0h1m17 0h1m14 0h1m13 0h1m43 0h1m-395 1h1m38 0h1m3 0h1m14 0h1m31 0h1m53 0h1m159 0h1m15 0h1m15 0h1m14 0h1m42 0h1m-396 1h1m40 0h3m14 0h1m31 0h1m215 0h1m13 0h1m17 0h1m14 0h1m42 0h1m-397 1h1m41 0h2m13 0h1m31 0h1m217 0h1m11 0h1m19 0h1m14 0h1m41 0h1m-398 1h1m42 0h1m1 0h2m10 0h1m31 0h1m219 0h1m9 0h1m21 0h1m13 0h1m42 0h1m-399 1h1m41 0h1m4 0h1m8 0h1m31 0h1m221 0h1m6 0h2m23 0h1m13 0h1m41 0h1m-400 1h1m41 0h1m6 0h2m6 0h1m30 0h1m223 0h1m4 0h1m25 0h1m11 0h2m1 0h1m41 0h1m-401 1h1m40 0h1m9 0h1m4 0h1m30 0h1m225 0h1m2 0h1m27 0h1m9 0h1m4 0h1m40 0h1m-402 1h1m41 0h1m10 0h2m1 0h2m29 0h1m227 0h2m29 0h1m6 0h2m5 0h1m41 0h1m-403 1h1m40 0h1m13 0h1m2 0h2m26 0h1m228 0h2m30 0h1m4 0h1m8 0h1m40 0h1m-404 1h1m40 0h1m14 0h1m4 0h1m24 0h1m231 0h1m29 0h1m2 0h2m10 0h1m40 0h1m-405 1h1m40 0h1m13 0h1m6 0h1m22 0h1m233 0h1m29 0h2m12 0h1m40 0h1m-406 1h1m40 0h1m14 0h1m7 0h2m20 0h1m233 0h1m29 0h1m14 0h1m40 0h1m-407 1h1m39 0h1m14 0h1m10 0h1m18 0h1m235 0h1m29 0h1m14 0h1m39 0h1m-408 1h1m40 0h1m13 0h1m12 0h1m16 0h1m237 0h1m29 0h1m13 0h1m40 0h1m-409 1h1m39 0h1m13 0h1m14 0h2m13 0h1m239 0h1m29 0h1m13 0h1m39 0h1m-410 1h1m40 0h1m13 0h1m16 0h1m11 0h1m241 0h1m28 0h1m13 0h1m40 0h1m-411 1h1m39 0h2m12 0h1m18 0h1m10 0h1m241 0h1m29 0h1m13 0h1m39 0h1m-412 1h1m40 0h1m1 0h2m9 0h1m20 0h2m7 0h1m243 0h1m29 0h1m12 0h1m40 0h1m-413 1h1m39 0h1m4 0h1m7 0h1m23 0h1m5 0h1m245 0h1m29 0h1m11 0h2m38 0h2m-414 1h1m40 0h1m5 0h2m5 0h1m24 0h1m3 0h1m247 0h1m28 0h1m9 0h2m1 0h1m36 0h2m2 0h1m-415 1h1m39 0h1m8 0h1m3 0h1m26 0h2m1 0h1m26 0h1m220 0h1m29 0h1m6 0h2m4 0h1m33 0h2m4 0h1m-415 1h1m38 0h1m10 0h2m1 0h1m28 0h1m28 0h1m220 0h1m28 0h1m4 0h2m7 0h1m30 0h2m6 0h1m-416 1h1m39 0h1m12 0h1m28 0h1m30 0h1m220 0h1m28 0h1m1 0h2m9 0h1m28 0h2m9 0h1m-417 1h1m38 0h1m13 0h1m28 0h1m31 0h1m219 0h1m28 0h2m12 0h1m24 0h3m11 0h1m-418 1h1m38 0h1m13 0h1m28 0h1m32 0h1m220 0h1m28 0h1m13 0h1m21 0h2m15 0h1m-419 1h1m38 0h1m13 0h1m28 0h1m33 0h1m219 0h1m28 0h1m13 0h1m19 0h2m17 0h1m-420 1h1m38 0h1m13 0h1m28 0h1m35 0h1m219 0h1m28 0h1m13 0h1m16 0h2m20 0h1m-421 1h1m38 0h1m13 0h1m27 0h1m37 0h1m219 0h1m27 0h1m13 0h1m14 0h2m22 0h1m-421 1h1m37 0h1m13 0h1m27 0h1m259 0h1m27 0h1m13 0h1m10 0h3m24 0h1m-422 1h1m38 0h1m12 0h1m28 0h1m259 0h1m28 0h1m12 0h1m8 0h2m28 0h1m-423 1h1m38 0h1m12 0h1m27 0h1m261 0h1m27 0h1m12 0h1m6 0h2m30 0h1m-424 1h1m38 0h3m10 0h1m27 0h1m263 0h1m27 0h1m12 0h1m3 0h2m33 0h1m-425 1h1m38 0h1m2 0h2m8 0h1m27 0h1m263 0h1m27 0h1m12 0h1m1 0h2m35 0h1m-425 1h1m38 0h1m4 0h3m4 0h1m27 0h1m265 0h1m27 0h1m10 0h3m37 0h1m-426 1h1m38 0h1m8 0h2m2 0h1m27 0h1m23 0h1m241 0h1m27 0h1m8 0h2m2 0h1m38 0h1m-427 1h1m38 0h1m10 0h3m26 0h1m25 0h2m240 0h1m26 0h1m5 0h3m4 0h1m38 0h1m-427 1h1m37 0h1m12 0h1m26 0h1m28 0h1m240 0h1m26 0h1m2 0h2m8 0h1m37 0h1m-428 1h1m38 0h1m12 0h1m25 0h1m30 0h2m239 0h1m25 0h3m10 0h1m38 0h1m-429 1h1m37 0h1m12 0h1m26 0h1m32 0h2m237 0h1m26 0h1m12 0h1m37 0h1m-430 1h1m38 0h1m12 0h1m25 0h1m35 0h1m237 0h1m25 0h1m12 0h1m38 0h1m-431 1h1m37 0h1m12 0h1m26 0h1m273 0h1m26 0h1m12 0h1m37 0h1m-432 1h1m38 0h1m12 0h1m25 0h1m275 0h1m25 0h1m12 0h1m38 0h1m-433 1h1m38 0h1m11 0h1m26 0h1m275 0h1m26 0h1m11 0h1m38 0h1m-433 1h1m37 0h1m12 0h1m25 0h1m277 0h1m25 0h1m12 0h1m37 0h1m-434 1h1m38 0h1m11 0h1m26 0h1m277 0h1m26 0h1m11 0h1m38 0h1m-435 1h1m38 0h1m11 0h1m25 0h1m255 0h1m23 0h1m25 0h1m11 0h1m38 0h1m-435 1h1m37 0h2m11 0h1m25 0h1m253 0h2m24 0h1m25 0h1m12 0h1m37 0h1m-435 1h1m37 0h1m1 0h3m7 0h1m25 0h1m252 0h2m27 0h1m25 0h1m11 0h1m37 0h1m-436 1h1m37 0h1m5 0h2m5 0h1m25 0h1m251 0h1m29 0h1m25 0h1m10 0h3m37 0h1m-437 1h1m37 0h1m7 0h3m2 0h1m24 0h1m250 0h2m31 0h1m24 0h1m8 0h2m2 0h1m37 0h1m-437 1h1m36 0h1m11 0h2m25 0h1m249 0h1m33 0h1m23 0h3m4 0h3m5 0h1m36 0h1m-437 1h1m36 0h1m12 0h1m24 0h1m285 0h1m20 0h2m2 0h1m2 0h2m8 0h1m36 0h1m-438 1h1m36 0h1m13 0h1m24 0h1m285 0h1m17 0h3m4 0h3m11 0h1m36 0h1m-439 1h1m36 0h1m12 0h1m24 0h1m287 0h1m14 0h2m8 0h1m12 0h1m36 0h1m-439 1h1m36 0h1m12 0h1m24 0h1m287 0h1m11 0h3m10 0h1m12 0h1m36 0h1m-439 1h1m35 0h1m13 0h1m24 0h1m287 0h1m9 0h2m13 0h1m13 0h1m35 0h1m-440 1h1m36 0h1m12 0h1m24 0h1m289 0h1m6 0h2m16 0h1m12 0h1m36 0h1m-441 1h1m36 0h1m12 0h1m24 0h1m289 0h1m3 0h3m18 0h1m12 0h1m36 0h1m-441 1h1m36 0h1m12 0h1m23 0h1m291 0h3m21 0h1m12 0h1m36 0h1m-442 1h1m36 0h1m12 0h1m24 0h1m290 0h2m24 0h1m12 0h1m36 0h1m-443 1h1m36 0h1m12 0h1m24 0h1m291 0h1m24 0h1m12 0h1m36 0h1m-443 1h1m36 0h1m12 0h1m24 0h1m291 0h1m24 0h1m12 0h1m36 0h1m-443 1h1m36 0h2m10 0h1m24 0h1m293 0h1m24 0h1m11 0h1m36 0h1m-444 1h1m36 0h1m2 0h4m6 0h1m24 0h1m293 0h1m24 0h1m12 0h1m36 0h1m-445 1h1m36 0h1m6 0h4m2 0h1m24 0h1m293 0h1m24 0h1m10 0h3m36 0h1m-445 1h1m36 0h1m10 0h2m25 0h1m293 0h1m25 0h1m5 0h4m2 0h1m36 0h1m-445 1h1m36 0h1m11 0h1m24 0h1m295 0h1m24 0h1m2 0h3m6 0h1m36 0h1m-446 1h1m37 0h1m11 0h1m24 0h1m295 0h1m24 0h3m9 0h1m37 0h1m-447 1h1m36 0h1m11 0h1m25 0h1m295 0h1m25 0h1m11 0h1m36 0h1m-447 1h1m36 0h1m11 0h1m24 0h1m297 0h1m24 0h1m11 0h1m36 0h1m-447 1h1m36 0h1m11 0h1m24 0h1m297 0h1m24 0h1m11 0h1m36 0h1m-448 1h1m37 0h1m11 0h1m24 0h1m297 0h1m24 0h1m11 0h1m37 0h1m-449 1h1m36 0h1m11 0h1m25 0h1m297 0h1m25 0h1m11 0h1m36 0h1m-449 1h1m36 0h1m11 0h1m24 0h1m299 0h1m24 0h1m11 0h1m36 0h1m-449 1h1m36 0h1m11 0h1m24 0h1m299 0h1m24 0h1m11 0h1m36 0h1m-449 1h1m36 0h1m11 0h1m24 0h1m299 0h1m24 0h1m11 0h1m36 0h1m-449 1h1m35 0h1m12 0h1m24 0h1m299 0h1m24 0h1m12 0h1m35 0h1m-450 1h1m36 0h1m12 0h1m23 0h1m301 0h1m23 0h1m12 0h1m36 0h1m-451 1h1m36 0h4m8 0h1m24 0h1m301 0h1m24 0h1m11 0h1m36 0h1m-451 1h1m36 0h1m3 0h5m3 0h1m23 0h1m303 0h1m23 0h1m11 0h1m36 0h1m-451 1h1m36 0h1m8 0h4m23 0h1m303 0h1m23 0h1m11 0h1m36 0h1m-451 1h1m36 0h1m11 0h1m23 0h1m303 0h1m23 0h1m6 0h6m36 0h1m-451 1h1m36 0h1m11 0h1m23 0h1m303 0h1m23 0h7m5 0h1m36 0h1m-451 1h1m35 0h1m12 0h1m22 0h1m305 0h1m22 0h1m12 0h1m35 0h1m-451 1h1m35 0h1m12 0h1m22 0h1m305 0h1m22 0h1m12 0h1m35 0h1m-452 1h1m36 0h1m11 0h1m23 0h1m305 0h1m23 0h1m11 0h1m36 0h1m-453 1h1m36 0h1m11 0h1m23 0h1m305 0h1m23 0h1m11 0h1m36 0h1m-453 1h1m36 0h1m11 0h1m23 0h1m305 0h1m23 0h1m11 0h1m36 0h1m-453 1h1m36 0h1m11 0h1m23 0h1m305 0h1m23 0h1m11 0h1m36 0h1m-453 1h1m35 0h1m12 0h1m23 0h1m305 0h1m23 0h1m12 0h1m35 0h1m-453 1h1m35 0h1m12 0h1m23 0h1m305 0h1m23 0h1m12 0h1m35 0h1m-453 1h5m31 0h1m11 0h1m24 0h1m305 0h1m24 0h1m11 0h1m35 0h1m-453 1h1m4 0h9m22 0h1m11 0h1m24 0h1m305 0h1m24 0h1m11 0h1m35 0h1m-453 1h1m13 0h9m13 0h1m11 0h1m24 0h1m305 0h1m24 0h1m11 0h1m35 0h1m-453 1h1m22 0h9m4 0h1m11 0h1m23 0h1m307 0h1m23 0h1m11 0h1m35 0h1m-453 1h1m31 0h10m6 0h1m23 0h1m307 0h1m23 0h1m11 0h1m35 0h1m-453 1h1m34 0h1m6 0h7m23 0h1m307 0h1m23 0h1m12 0h1m34 0h1m-453 1h1m34 0h1m11 0h1m24 0h1m307 0h1m24 0h1m5 0h7m34 0h1m-453 1h1m34 0h1m11 0h1m24 0h1m307 0h1m24 0h6m6 0h1m34 0h1m-453 1h1m34 0h1m11 0h1m23 0h1m309 0h1m23 0h1m11 0h1m34 0h1m-453 1h1m34 0h1m11 0h1m23 0h1m309 0h1m23 0h1m11 0h1m34 0h1m-454 1h1m35 0h1m11 0h1m23 0h1m309 0h1m23 0h1m11 0h1m35 0h1m-455 1h1m35 0h1m11 0h1m23 0h1m309 0h1m23 0h1m11 0h1m35 0h1m-455 1h1m35 0h1m11 0h1m23 0h1m309 0h1m23 0h1m11 0h1m35 0h1m-455 1h1m35 0h1m11 0h1m23 0h1m309 0h1m23 0h1m11 0h1m35 0h1m-455 1h1m35 0h1m11 0h1m23 0h1m309 0h1m23 0h1m11 0h1m35 0h1m-455 1h1m35 0h1m11 0h1m23 0h1m309 0h1m23 0h1m11 0h1m35 0h1m-455 1h1m35 0h1m11 0h1m23 0h1m309 0h1m23 0h1m11 0h1m35 0h1m-455 1h1m35 0h1m11 0h1m23 0h1m309 0h1m23 0h1m11 0h1m35 0h1m-455 1h1m35 0h1m11 0h1m23 0h1m309 0h1m23 0h1m11 0h1m35 0h1m-455 1h1m35 0h1m11 0h1m23 0h1m309 0h1m23 0h1m11 0h1m35 0h1m-455 1h1m35 0h13m23 0h1m309 0h1m23 0h1m11 0h1m35 0h1m-455 1h1m35 0h1m11 0h25m309 0h25m11 0h1m35 0h1m-455 1h1m35 0h1m11 0h1m23 0h1m309 0h1m23 0h13m35 0h1m-455 1h1m35 0h1m11 0h1m23 0h1m309 0h1m23 0h1m11 0h1m35 0h1m-455 1h1m35 0h1m11 0h1m23 0h1m309 0h1m23 0h1m11 0h1m35 0h1m-455 1h1m35 0h1m11 0h1m23 0h1m309 0h1m23 0h1m11 0h1m35 0h1m-455 1h1m35 0h1m11 0h1m23 0h1m309 0h1m23 0h1m11 0h1m35 0h1m-455 1h1m35 0h1m11 0h1m23 0h1m309 0h1m23 0h1m11 0h1m35 0h1m-455 1h1m35 0h1m11 0h1m23 0h1m309 0h1m23 0h1m11 0h1m35 0h1m-455 1h1m35 0h1m11 0h1m23 0h1m309 0h1m23 0h1m11 0h1m35 0h1m-455 1h1m35 0h1m11 0h1m23 0h1m309 0h1m23 0h1m11 0h1m35 0h1m-455 1h1m35 0h1m11 0h1m23 0h1m309 0h1m23 0h1m11 0h1m35 0h1m-454 1h1m34 0h1m11 0h1m23 0h1m309 0h1m23 0h1m11 0h1m34 0h1m-453 1h1m34 0h1m11 0h1m23 0h1m309 0h1m23 0h1m11 0h1m34 0h1m-453 1h1m34 0h1m11 0h1m24 0h1m307 0h1m24 0h1m11 0h1m34 0h1m-453 1h1m34 0h1m6 0h6m24 0h1m307 0h1m24 0h1m11 0h1m34 0h1m-453 1h1m34 0h7m6 0h1m23 0h1m307 0h1m23 0h1m12 0h1m34 0h1m-453 1h1m34 0h1m12 0h1m23 0h1m307 0h1m23 0h7m6 0h1m34 0h1m-453 1h1m35 0h1m11 0h1m23 0h1m307 0h1m23 0h1m6 0h10m31 0h1m-453 1h1m35 0h1m11 0h1m23 0h1m307 0h1m23 0h1m11 0h1m4 0h9m22 0h1m-453 1h1m35 0h1m11 0h1m24 0h1m305 0h1m24 0h1m11 0h1m13 0h9m13 0h1m-453 1h1m35 0h1m11 0h1m24 0h1m305 0h1m24 0h1m11 0h1m22 0h9m4 0h1m-453 1h1m35 0h1m12 0h1m23 0h1m305 0h1m23 0h1m12 0h1m31 0h5m-453 1h1m35 0h1m12 0h1m23 0h1m305 0h1m23 0h1m12 0h1m35 0h1m-453 1h1m36 0h1m11 0h1m23 0h1m305 0h1m23 0h1m11 0h1m36 0h1m-453 1h1m36 0h1m11 0h1m23 0h1m305 0h1m23 0h1m11 0h1m36 0h1m-453 1h1m36 0h1m11 0h1m23 0h1m28 0h3m274 0h1m23 0h1m11 0h1m36 0h1m-453 1h1m36 0h1m11 0h1m23 0h1m24 0h4m277 0h1m23 0h1m11 0h1m36 0h1m-452 1h1m35 0h1m11 0h1m23 0h1m21 0h3m281 0h1m23 0h1m11 0h1m35 0h1m-451 1h1m35 0h1m12 0h1m22 0h1m305 0h1m22 0h1m12 0h1m35 0h1m-451 1h1m35 0h1m12 0h1m22 0h1m305 0h1m22 0h1m12 0h1m35 0h1m-451 1h1m36 0h1m5 0h7m23 0h1m303 0h1m23 0h1m11 0h1m36 0h1m-451 1h1m36 0h6m6 0h1m23 0h1m303 0h1m23 0h1m11 0h1m36 0h1m-451 1h1m36 0h1m11 0h1m23 0h1m303 0h1m23 0h4m8 0h1m36 0h1m-451 1h1m36 0h1m11 0h1m23 0h1m303 0h1m23 0h1m3 0h5m3 0h1m36 0h1m-451 1h1m36 0h1m12 0h1m23 0h1m301 0h1m23 0h1m9 0h4m36 0h1m-450 1h1m35 0h1m12 0h1m23 0h1m301 0h1m23 0h1m12 0h1m35 0h1m-449 1h1m36 0h1m11 0h1m24 0h1m299 0h1m24 0h1m11 0h1m36 0h1m-449 1h1m36 0h1m11 0h1m24 0h1m299 0h1m24 0h1m11 0h1m36 0h1m-449 1h1m36 0h1m11 0h1m24 0h1m299 0h1m24 0h1m11 0h1m36 0h1m-449 1h1m36 0h1m11 0h1m24 0h1m299 0h1m24 0h1m11 0h1m36 0h1m-449 1h1m36 0h1m12 0h1m24 0h1m297 0h1m24 0h1m12 0h1m36 0h1m-448 1h1m36 0h1m11 0h1m24 0h1m297 0h1m24 0h1m11 0h1m36 0h1m-447 1h1m36 0h1m11 0h1m24 0h1m297 0h1m24 0h1m11 0h1m36 0h1m-447 1h1m36 0h1m11 0h1m24 0h1m297 0h1m24 0h1m11 0h1m36 0h1m-447 1h1m36 0h1m11 0h1m25 0h1m295 0h1m25 0h1m11 0h1m36 0h1m-446 1h1m36 0h1m9 0h3m24 0h1m295 0h1m24 0h1m11 0h1m36 0h1m-445 1h1m36 0h1m5 0h4m2 0h1m24 0h1m295 0h1m24 0h1m11 0h1m36 0h1m-445 1h1m36 0h1m2 0h3m6 0h1m25 0h1m293 0h1m25 0h2m10 0h1m36 0h1m-445 1h1m36 0h3m10 0h1m24 0h1m293 0h1m24 0h1m2 0h4m6 0h1m36 0h1m-444 1h1m36 0h1m11 0h1m24 0h1m293 0h1m24 0h1m6 0h4m1 0h1m36 0h1m-443 1h1m36 0h1m11 0h1m24 0h1m293 0h1m24 0h1m10 0h2m36 0h1m-443 1h1m36 0h1m12 0h1m24 0h1m291 0h1m24 0h1m12 0h1m36 0h1m-443 1h1m36 0h1m12 0h1m24 0h1m291 0h1m24 0h1m12 0h1m36 0h1m-442 1h1m35 0h1m12 0h1m24 0h2m290 0h1m24 0h1m12 0h1m35 0h1m-441 1h1m36 0h1m12 0h1m21 0h3m291 0h1m23 0h1m12 0h1m36 0h1m-441 1h1m36 0h1m12 0h1m18 0h3m3 0h1m289 0h1m24 0h1m12 0h1m36 0h1m-441 1h1m36 0h1m12 0h1m16 0h2m6 0h1m289 0h1m24 0h1m12 0h1m36 0h1m-440 1h1m35 0h1m13 0h1m12 0h3m9 0h1m287 0h1m24 0h1m13 0h1m35 0h1m-439 1h1m36 0h1m12 0h1m10 0h2m12 0h1m287 0h1m24 0h1m12 0h1m36 0h1m-439 1h1m36 0h1m12 0h1m8 0h2m14 0h1m287 0h1m24 0h1m12 0h1m36 0h1m-439 1h1m37 0h1m10 0h3m4 0h3m17 0h1m285 0h1m24 0h1m12 0h1m37 0h1m-438 1h1m36 0h1m8 0h2m2 0h1m2 0h2m20 0h1m285 0h1m24 0h1m12 0h1m36 0h1m-437 1h1m37 0h1m4 0h3m4 0h3m23 0h1m283 0h1m25 0h2m10 0h1m37 0h1m-437 1h1m37 0h1m2 0h2m8 0h1m24 0h1m283 0h1m24 0h1m2 0h3m7 0h1m37 0h1m-436 1h1m37 0h2m10 0h1m25 0h1m281 0h1m25 0h1m5 0h2m4 0h1m37 0h1m-435 1h1m37 0h1m11 0h1m25 0h1m281 0h1m25 0h1m7 0h3m1 0h1m37 0h1m-435 1h1m37 0h1m12 0h1m25 0h1m279 0h1m25 0h1m11 0h2m37 0h1m-435 1h1m38 0h1m11 0h1m25 0h1m279 0h1m25 0h1m11 0h1m38 0h1m-434 1h1m37 0h1m12 0h1m25 0h1m277 0h1m25 0h1m12 0h1m37 0h1m-433 1h1m37 0h1m12 0h1m25 0h1m277 0h1m25 0h1m12 0h1m37 0h1m-433 1h1m38 0h1m12 0h1m25 0h1m275 0h1m25 0h1m12 0h1m38 0h1m-433 1h1m38 0h1m12 0h1m25 0h1m275 0h1m25 0h1m12 0h1m38 0h1m-432 1h1m38 0h1m12 0h1m25 0h1m273 0h1m25 0h1m12 0h1m38 0h1m-431 1h1m38 0h1m12 0h1m25 0h1m273 0h1m25 0h1m12 0h1m38 0h1m-430 1h1m38 0h1m11 0h1m26 0h1m271 0h1m26 0h1m11 0h1m38 0h1m-429 1h1m38 0h1m10 0h3m26 0h1m269 0h1m26 0h1m12 0h1m38 0h1m-428 1h1m38 0h1m7 0h2m2 0h1m26 0h1m269 0h1m26 0h1m11 0h1m38 0h1m-427 1h1m38 0h1m4 0h3m5 0h1m26 0h1m267 0h1m26 0h3m10 0h1m38 0h1m-427 1h1m38 0h1m2 0h2m8 0h1m27 0h1m265 0h1m27 0h1m2 0h2m8 0h1m38 0h1m-426 1h1m37 0h3m11 0h1m26 0h1m265 0h1m26 0h1m5 0h3m4 0h1m38 0h1m-425 1h1m35 0h2m1 0h1m12 0h1m27 0h1m263 0h1m27 0h1m8 0h2m2 0h1m38 0h1m-424 1h1m32 0h2m3 0h1m13 0h1m26 0h1m263 0h1m26 0h1m11 0h3m37 0h1m-423 1h1m30 0h2m6 0h1m12 0h1m27 0h1m261 0h1m27 0h1m12 0h1m38 0h1m-423 1h1m28 0h2m8 0h1m13 0h1m27 0h1m259 0h1m27 0h1m13 0h1m38 0h1m-422 1h1m24 0h3m11 0h1m12 0h1m28 0h1m257 0h1m28 0h1m12 0h1m38 0h1m-421 1h1m22 0h2m14 0h1m13 0h1m27 0h1m257 0h1m27 0h1m13 0h1m38 0h1m-421 1h1m20 0h2m17 0h1m12 0h1m28 0h1m255 0h1m28 0h1m12 0h1m39 0h1m-420 1h1m17 0h2m19 0h1m13 0h1m28 0h1m253 0h1m28 0h1m13 0h1m38 0h1m-419 1h1m15 0h2m22 0h1m12 0h1m28 0h1m253 0h1m28 0h1m12 0h1m39 0h1m-418 1h1m11 0h3m24 0h1m11 0h3m28 0h1m251 0h1m28 0h1m13 0h1m38 0h1m-417 1h1m9 0h2m28 0h1m8 0h2m3 0h1m27 0h1m251 0h1m27 0h2m12 0h1m39 0h1m-416 1h1m6 0h2m30 0h1m6 0h2m5 0h1m28 0h1m249 0h1m28 0h1m1 0h2m10 0h1m38 0h1m-415 1h1m4 0h2m33 0h1m3 0h2m8 0h1m28 0h1m247 0h1m1 0h2m25 0h1m4 0h1m8 0h1m39 0h1m-415 1h1m2 0h2m36 0h3m10 0h1m29 0h1m245 0h1m4 0h1m24 0h1m5 0h2m5 0h1m40 0h1m-414 1h2m38 0h1m13 0h1m28 0h1m245 0h1m5 0h1m22 0h1m8 0h1m4 0h1m39 0h1m-413 1h1m40 0h1m12 0h1m29 0h1m243 0h1m7 0h2m20 0h1m9 0h2m1 0h1m40 0h1m-412 1h1m40 0h1m12 0h1m29 0h1m241 0h1m10 0h1m18 0h1m12 0h1m40 0h1m-411 1h1m40 0h1m13 0h1m29 0h1m239 0h1m12 0h1m16 0h1m13 0h1m40 0h1m-410 1h1m40 0h1m12 0h1m29 0h1m239 0h1m13 0h2m14 0h1m12 0h1m40 0h1m-409 1h1m40 0h1m13 0h1m29 0h1m237 0h1m16 0h1m12 0h1m13 0h1m40 0h1m-408 1h1m40 0h1m13 0h1m29 0h1m235 0h1m18 0h1m10 0h1m13 0h1m40 0h1m-407 1h1m40 0h1m14 0h1m29 0h1m233 0h1m20 0h2m7 0h1m14 0h1m40 0h1m-406 1h1m40 0h1m12 0h2m29 0h1m233 0h1m22 0h1m6 0h1m13 0h1m40 0h1m-405 1h1m40 0h1m10 0h2m2 0h1m29 0h1m231 0h1m24 0h1m4 0h1m14 0h1m40 0h1m-404 1h1m40 0h1m8 0h1m4 0h1m30 0h2m228 0h1m26 0h2m2 0h1m13 0h1m40 0h1m-403 1h1m41 0h1m5 0h2m6 0h1m29 0h2m227 0h1m29 0h2m1 0h2m10 0h1m41 0h1m-402 1h1m40 0h1m4 0h1m9 0h1m27 0h1m2 0h1m225 0h1m30 0h1m4 0h1m9 0h1m40 0h1m-401 1h1m41 0h1m1 0h2m11 0h1m25 0h1m4 0h1m223 0h1m30 0h1m6 0h2m6 0h1m41 0h1m-400 1h1m41 0h1m13 0h1m23 0h2m6 0h1m221 0h1m31 0h1m8 0h1m4 0h1m41 0h1m-399 1h1m42 0h1m13 0h1m21 0h1m9 0h1m219 0h1m31 0h1m10 0h2m1 0h1m42 0h1m-398 1h1m41 0h1m14 0h1m19 0h1m11 0h1m217 0h1m31 0h1m13 0h2m41 0h1m-397 1h1m42 0h1m14 0h1m17 0h1m13 0h1m215 0h1m31 0h1m14 0h3m40 0h1m-396 1h1m42 0h1m14 0h1m15 0h1m15 0h1m213 0h1m31 0h1m14 0h1m3 0h1m38 0h1m-395 1h1m43 0h1m13 0h1m14 0h1m17 0h1m211 0h1m32 0h1m13 0h1m5 0h1m37 0h1m-394 1h1m43 0h1m13 0h1m12 0h1m19 0h1m209 0h1m32 0h1m13 0h1m7 0h2m34 0h1m-393 1h1m43 0h1m12 0h1m1 0h1m10 0h1m21 0h1m207 0h1m32 0h1m14 0h1m9 0h1m33 0h1m-392 1h1m43 0h1m9 0h2m3 0h1m7 0h2m23 0h1m205 0h1m32 0h2m13 0h1m11 0h2m30 0h1m-390 1h1m43 0h1m7 0h1m6 0h1m5 0h1m26 0h2m201 0h2m32 0h1m2 0h1m11 0h1m14 0h1m28 0h1m-388 1h1m43 0h1m5 0h1m7 0h1m4 0h1m29 0h1m199 0h1m34 0h1m3 0h1m9 0h1m16 0h2m25 0h1m-387 1h1m43 0h1m3 0h2m9 0h1m2 0h1m31 0h1m197 0h1m34 0h1m5 0h1m8 0h1m18 0h1m24 0h1m-386 1h1m43 0h1m1 0h1m12 0h2m33 0h1m194 0h2m34 0h1m7 0h2m5 0h1m20 0h1m22 0h1m-384 1h1m43 0h1m14 0h1m34 0h2m191 0h1m35 0h1m10 0h1m3 0h1m22 0h2m19 0h1m-383 1h1m43 0h1m15 0h1m35 0h1m189 0h1m35 0h1m12 0h1m2 0h1m24 0h1m18 0h1m-382 1h1m43 0h1m15 0h1m35 0h1m186 0h2m35 0h1m14 0h2m26 0h2m15 0h1m-381 1h1m44 0h1m15 0h1m35 0h2m183 0h1m36 0h1m15 0h1m29 0h1m14 0h1m-380 1h1m44 0h1m15 0h1m36 0h1m181 0h1m36 0h1m15 0h1m31 0h2m11 0h1m-379 1h1m44 0h1m15 0h2m36 0h2m177 0h2m36 0h1m16 0h1m33 0h1m10 0h1m-378 1h1m44 0h1m13 0h1m2 0h1m37 0h2m173 0h2m37 0h1m16 0h1m35 0h1m8 0h1m-376 1h1m44 0h1m11 0h1m4 0h1m38 0h1m171 0h1m38 0h2m15 0h1m37 0h2m5 0h1m-375 1h1m45 0h1m9 0h1m6 0h1m38 0h1m168 0h2m38 0h1m2 0h1m13 0h1m40 0h1m4 0h1m-374 1h1m45 0h1m7 0h1m8 0h1m38 0h2m165 0h1m39 0h1m4 0h1m11 0h1m42 0h2m1 0h1m-372 1h1m45 0h1m6 0h1m9 0h1m39 0h1m163 0h1m39 0h1m6 0h1m9 0h1m45 0h1m-371 1h1m46 0h1m4 0h1m11 0h1m39 0h2m159 0h2m39 0h1m8 0h2m6 0h1m46 0h1m-370 1h1m46 0h1m2 0h1m13 0h1m40 0h2m155 0h2m40 0h1m11 0h1m4 0h1m46 0h1m-368 1h1m46 0h2m15 0h1m41 0h1m153 0h1m41 0h1m13 0h1m2 0h1m46 0h1m-367 1h1m47 0h1m16 0h2m40 0h1m150 0h2m40 0h2m15 0h2m47 0h1m-366 1h1m47 0h1m17 0h1m40 0h2m147 0h1m41 0h1m17 0h1m47 0h1m-364 1h1m47 0h1m16 0h2m41 0h2m143 0h2m41 0h1m17 0h1m47 0h1m-362 1h1m47 0h1m14 0h1m2 0h1m42 0h2m139 0h2m42 0h1m17 0h1m47 0h1m-361 1h1m48 0h1m12 0h1m4 0h2m42 0h2m135 0h2m42 0h2m1 0h1m15 0h1m48 0h1m-360 1h1m48 0h1m10 0h1m7 0h1m43 0h2m131 0h2m43 0h1m4 0h1m13 0h1m48 0h1m-358 1h1m48 0h1m8 0h1m9 0h1m44 0h2m127 0h2m44 0h1m5 0h1m12 0h1m48 0h1m-356 1h1m48 0h1m7 0h1m10 0h1m45 0h2m123 0h2m45 0h1m7 0h1m10 0h1m48 0h1m-354 1h1m48 0h1m5 0h1m12 0h2m45 0h2m119 0h2m45 0h2m9 0h1m8 0h1m48 0h1m-353 1h1m49 0h2m2 0h1m15 0h1m46 0h3m113 0h3m46 0h1m12 0h1m5 0h2m49 0h1m-352 1h1m50 0h2m17 0h1m48 0h3m108 0h2m48 0h1m13 0h1m4 0h1m50 0h1m-350 1h1m50 0h1m18 0h2m48 0h4m101 0h4m48 0h2m15 0h1m2 0h1m50 0h1m-348 1h1m50 0h2m15 0h1m2 0h2m45 0h1m4 0h4m93 0h4m50 0h2m18 0h2m50 0h1m-346 1h1m51 0h1m14 0h1m4 0h1m44 0h1m8 0h3m87 0h3m53 0h1m1 0h1m17 0h1m51 0h1m-344 1h1m51 0h2m11 0h1m6 0h1m42 0h1m12 0h4m79 0h4m55 0h1m3 0h1m14 0h2m51 0h1m-343 1h1m53 0h1m9 0h1m8 0h2m40 0h1m16 0h4m71 0h4m57 0h2m4 0h1m13 0h1m53 0h1m-342 1h1m53 0h1m8 0h1m10 0h1m39 0h1m20 0h2m67 0h2m1 0h1m58 0h1m7 0h1m11 0h1m53 0h1m-340 1h1m53 0h2m5 0h1m12 0h1m37 0h1m23 0h4m59 0h4m4 0h1m55 0h2m9 0h1m8 0h2m53 0h1m-338 1h1m54 0h1m3 0h1m14 0h2m35 0h1m27 0h11m37 0h11m8 0h1m53 0h2m11 0h1m7 0h1m54 0h1m-336 1h1m54 0h1m2 0h1m16 0h2m32 0h1m39 0h5m26 0h6m19 0h1m51 0h2m14 0h1m5 0h1m54 0h1m-334 1h1m54 0h2m19 0h2m30 0h1m44 0h26m25 0h1m50 0h1m17 0h1m3 0h1m54 0h1m-332 1h1m53 0h3m17 0h1m2 0h2m27 0h1m97 0h1m47 0h3m17 0h1m1 0h2m54 0h1m-330 1h1m52 0h1m2 0h1m16 0h1m4 0h2m25 0h1m97 0h1m45 0h2m3 0h1m17 0h1m55 0h1m-328 1h1m50 0h1m4 0h1m14 0h1m7 0h1m24 0h1m97 0h1m43 0h2m5 0h1m16 0h1m55 0h1m-326 1h1m48 0h1m6 0h2m11 0h1m9 0h2m21 0h1m98 0h1m41 0h2m8 0h1m13 0h2m55 0h1m-324 1h1m46 0h1m9 0h1m10 0h1m11 0h2m19 0h1m99 0h1m38 0h2m10 0h1m12 0h1m56 0h1m-322 1h1m45 0h1m10 0h2m7 0h1m14 0h3m15 0h1m100 0h1m36 0h2m13 0h1m9 0h2m56 0h1m-320 1h1m43 0h1m13 0h1m5 0h1m17 0h3m13 0h1m100 0h1m34 0h2m15 0h1m7 0h2m57 0h1m-318 1h1m41 0h1m15 0h2m3 0h1m17 0h1m2 0h2m11 0h1m100 0h1m31 0h4m17 0h1m4 0h2m58 0h1m-316 1h1m40 0h1m17 0h3m17 0h1m5 0h2m8 0h1m102 0h1m28 0h2m3 0h1m17 0h1m2 0h2m59 0h1m-314 1h1m38 0h1m20 0h2m16 0h1m7 0h2m6 0h1m102 0h1m26 0h2m6 0h1m17 0h2m60 0h1m-312 1h1m36 0h1m23 0h2m13 0h1m10 0h3m2 0h1m103 0h1m24 0h2m8 0h1m16 0h2m60 0h1m-310 1h1m35 0h1m25 0h1m12 0h1m13 0h3m103 0h1m21 0h3m11 0h1m14 0h1m61 0h1m-308 1h1m33 0h1m27 0h2m10 0h1m16 0h3m101 0h1m17 0h3m14 0h1m12 0h2m61 0h1m-306 1h1m31 0h1m30 0h1m8 0h1m17 0h1m2 0h3m98 0h1m14 0h4m16 0h1m10 0h2m62 0h1m-304 1h1m29 0h1m32 0h2m6 0h1m16 0h1m6 0h3m95 0h1m11 0h3m3 0h1m17 0h1m7 0h2m63 0h1m-302 1h1m28 0h1m34 0h2m3 0h1m17 0h1m9 0h3m92 0h1m8 0h3m7 0h1m16 0h1m5 0h2m63 0h2m-300 1h2m25 0h1m37 0h4m17 0h1m12 0h3m90 0h1m4 0h3m10 0h1m17 0h1m2 0h2m64 0h1m-296 1h1m23 0h1m41 0h3m14 0h1m16 0h3m87 0h1m1 0h3m14 0h1m16 0h3m65 0h1m-294 1h1m22 0h1m44 0h2m12 0h1m16 0h1m2 0h4m80 0h6m16 0h1m13 0h4m66 0h1m-292 1h1m20 0h1m47 0h2m9 0h1m16 0h1m7 0h6m68 0h6m5 0h1m16 0h1m11 0h2m4 0h1m64 0h1m-290 1h1m18 0h1m50 0h2m7 0h1m16 0h1m13 0h7m55 0h6m12 0h1m16 0h1m8 0h2m6 0h1m62 0h2m-288 1h2m16 0h1m52 0h3m4 0h1m16 0h1m15 0h1m4 0h6m42 0h7m2 0h1m15 0h1m16 0h1m6 0h2m9 0h1m60 0h1m-284 1h1m14 0h1m56 0h4m17 0h1m15 0h1m10 0h6m30 0h6m9 0h1m15 0h1m17 0h1m2 0h3m11 0h1m59 0h1m-282 1h1m12 0h1m60 0h2m15 0h1m16 0h1m15 0h31m15 0h1m16 0h1m16 0h3m15 0h1m57 0h1m-280 1h2m9 0h1m63 0h2m13 0h1m15 0h1m16 0h1m14 0h1m14 0h1m15 0h1m16 0h1m14 0h2m18 0h1m55 0h2m-277 1h1m8 0h1m65 0h2m11 0h1m15 0h1m16 0h1m14 0h1m14 0h1m15 0h1m16 0h1m12 0h2m21 0h1m53 0h1m-274 1h1m6 0h1m68 0h3m8 0h1m15 0h1m16 0h1m14 0h1m14 0h1m15 0h1m16 0h1m10 0h2m23 0h1m52 0h1m-272 1h2m3 0h1m72 0h4m3 0h1m16 0h1m16 0h1m14 0h1m14 0h1m16 0h1m16 0h1m5 0h4m26 0h1m49 0h2m-269 1h1m2 0h1m76 0h4m16 0h1m16 0h1m14 0h1m14 0h1m16 0h1m16 0h6m30 0h1m48 0h1m-266 1h2m81 0h5m10 0h1m16 0h1m15 0h1m15 0h1m15 0h1m13 0h4m35 0h1m46 0h2m-263 1h1m85 0h4m6 0h1m16 0h1m15 0h1m15 0h1m15 0h1m9 0h4m40 0h1m44 0h1m-260 1h2m87 0h4m2 0h1m16 0h1m15 0h1m15 0h1m15 0h1m4 0h5m44 0h1m42 0h2m-257 1h1m90 0h7m12 0h1m15 0h1m15 0h1m14 0h6m50 0h1m40 0h1m-254 1h2m95 0h6m6 0h1m15 0h1m15 0h1m7 0h7m56 0h1m38 0h2m-251 1h2m99 0h7m15 0h1m15 0h1m1 0h6m64 0h1m35 0h2m-247 1h2m103 0h34m70 0h1m33 0h2m-243 1h1m102 0h1m104 0h1m31 0h1m-240 1h2m100 0h1m104 0h1m29 0h2m-237 1h1m99 0h1m105 0h1m27 0h1m-234 1h1m97 0h1m106 0h1m26 0h1m-232 1h2m95 0h1m106 0h1m24 0h2m-229 1h2m93 0h1m107 0h1m21 0h2m-225 1h2m91 0h1m107 0h1m19 0h2m-221 1h2m89 0h1m108 0h1m16 0h2m-217 1h2m87 0h1m108 0h1m14 0h2m-213 1h2m85 0h1m109 0h1m11 0h2m-209 1h2m83 0h1m109 0h1m9 0h2m-205 1h2m81 0h1m110 0h1m6 0h2m-201 1h2m78 0h1m111 0h1m4 0h2m-197 1h2m76 0h1m112 0h1m1 0h2m-193 1h2m74 0h1m112 0h2m-189 1h3m71 0h1m109 0h3m-184 1h2m69 0h1m107 0h2m-179 1h2m67 0h1m105 0h2m-175 1h3m64 0h1m102 0h3m-170 1h2m62 0h1m99 0h3m-165 1h3m59 0h1m97 0h2m-159 1h3m55 0h1m95 0h3m-154 1h2m53 0h1m93 0h2m-149 1h2m51 0h1m91 0h2m-145 1h3m48 0h1m87 0h4m-140 1h4m44 0h1m83 0h4m-132 1h4m40 0h1m80 0h3m-124 1h4m36 0h1m76 0h4m-117 1h3m33 0h1m72 0h4m-110 1h4m29 0h1m68 0h4m-102 1h4m24 0h1m65 0h4m-94 1h4m20 0h1m61 0h4m-86 1h6m14 0h1m55 0h6m-76 1h8m6 0h1m47 0h8m-62 1h16m22 0h16m-38 1h22"/>
<path stroke="#00f" d="M0 .5m304 34h1m15 0h1m-16 1h1m13 0h1m-14 1h1m11 0h1m-12 1h1m9 0h1m-11 1h1m9 0h1m-10 1h1m7 0h1m-9 1h1m7 0h1m-9 1h1m7 0h1m-13 1h17m-13 1h1m7 0h1m-9 1h1m7 0h1m-9 1h1m7 0h1m-10 1h1m9 0h1m-11 1h1m9 0h1m-12 1h1m11 0h1m-14 1h1m13 0h1m-16 1h1m15 0h1m13 0h1m2 0h1m2 0h1m-8 1h2m1 0h3m1 0h2m-7 1h1m1 0h1m1 0h1m-5 1h1m1 0h1m1 0h1m-4 1h3m-2 1h1m-3 1h5m-3 1h1m-1 1h1m-75 32h1m5 0h1m5 0h1m-13 1h1m5 0h1m5 0h1m-14 1h3m2 0h5m2 0h3m-14 1h1m5 0h1m5 0h1m-13 1h1m5 0h1m5 0h1m-12 1h1m4 0h1m4 0h1m-11 1h1m4 0h1m4 0h1m-10 1h2m2 0h1m2 0h2m-7 1h5m-3 1h1m-1 1h1m-1 1h1m-5 1h9m-104 1h5m94 0h1m-101 1h1m5 0h2m92 0h1m-102 1h1m8 0h1m91 0h1m-101 1h1m8 0h1m90 0h1m-100 1h1m8 0h1m-9 1h1m7 0h1m-9 1h1m8 0h1m-9 1h1m7 0h1m-9 1h1m7 0h1m-9 1h1m7 0h1m-10 1h1m8 0h1m-10 1h1m7 0h1m-10 1h1m8 0h1m-11 1h1m8 0h1m-11 1h1m8 0h1m-9 1h1m5 0h2m67 0h1m-75 1h5m69 0h2m-2 1h1m-57 10h1m-2 1h3m-2 1h1m375 5h5m2 0h3m15 0h3m3 0h3m-34 1h1m5 0h1m3 0h1m13 0h1m3 0h1m1 0h1m3 0h1m-35 1h1m5 0h1m6 0h3m2 0h4m6 0h1m5 0h1m-35 1h4m2 0h1m5 0h1m3 0h1m1 0h1m3 0h1m4 0h1m5 0h1m-30 1h1m1 0h1m5 0h1m3 0h1m1 0h1m3 0h1m3 0h1m5 0h1m-33 1h1m3 0h1m1 0h1m3 0h1m1 0h1m2 0h2m1 0h1m3 0h1m2 0h1m5 0h1m-31 1h3m3 0h3m3 0h2m1 0h1m1 0h1m3 0h1m1 0h5m1 0h5m-40 4h3m2 0h5m2 0h3m14 0h1m2 0h1m3 0h3m-217 1h3m174 0h1m3 0h1m1 0h1m5 0h1m3 0h1m13 0h1m2 0h1m2 0h1m3 0h1m-219 1h1m3 0h1m177 0h1m1 0h1m5 0h1m6 0h3m2 0h4m2 0h1m2 0h1m6 0h1m-219 1h1m3 0h1m176 0h1m2 0h4m2 0h1m5 0h1m3 0h1m1 0h1m3 0h1m1 0h5m3 0h2m-218 1h1m3 0h1m175 0h1m7 0h1m1 0h1m5 0h1m3 0h1m1 0h1m3 0h1m4 0h1m6 0h1m-218 1h3m175 0h1m4 0h1m3 0h1m1 0h1m3 0h1m1 0h1m2 0h2m1 0h1m3 0h1m4 0h1m2 0h1m3 0h1m-219 1h1m3 0h1m173 0h5m2 0h3m3 0h3m3 0h2m1 0h1m1 0h1m3 0h1m4 0h1m3 0h3m-218 1h1m3 0h1m-5 1h1m3 0h1m-4 1h3m-297 3h1m2 0h1m2 0h1m263 0h1m4 0h3m4 0h1m-284 1h2m1 0h3m1 0h2m262 0h1m3 0h1m3 0h1m3 0h1m-282 1h1m1 0h1m1 0h1m264 0h1m3 0h1m3 0h1m3 0h1m-282 1h1m1 0h1m1 0h1m264 0h1m3 0h1m3 0h1m3 0h1m17 0h1m2 0h1m2 0h1m-305 1h3m265 0h1m4 0h3m4 0h1m17 0h1m1 0h1m1 0h1m1 0h1m-304 1h1m267 0h1m9 0h1m18 0h1m2 0h1m2 0h1m-306 1h5m265 0h1m9 0h1m19 0h1m3 0h1m-303 1h1m268 0h2m5 0h2m21 0h3m232 0h1m1 0h1m1 0h1m-539 1h1m270 0h5m24 0h1m101 0h1m2 0h1m4 0h1m3 0h1m11 0h1m108 0h1m1 0h1m1 0h1m1 0h1m-269 1h1m24 0h5m99 0h1m2 0h1m4 0h1m3 0h1m11 0h1m108 0h1m1 0h1m1 0h3m-269 1h1m26 0h1m101 0h1m2 0h1m2 0h5m1 0h4m8 0h4m3 0h3m2 0h1m3 0h1m2 0h4m2 0h3m4 0h1m76 0h1m1 0h1m1 0h1m1 0h1m-269 1h1m26 0h1m101 0h5m3 0h1m3 0h1m3 0h1m7 0h1m3 0h1m1 0h1m3 0h1m1 0h1m3 0h1m1 0h1m5 0h1m3 0h1m80 0h1m1 0h1m1 0h1m1 0h1m-273 1h9m127 0h1m4 0h1m3 0h1m3 0h1m7 0h1m3 0h1m1 0h1m3 0h1m1 0h1m3 0h1m2 0h3m2 0h5m3 0h1m76 0h1m1 0h1m1 0h1m1 0h1m-269 1h1m131 0h1m4 0h1m3 0h1m3 0h1m7 0h1m3 0h1m1 0h1m3 0h1m1 0h1m2 0h2m5 0h1m1 0h1m84 0h1m1 0h1m1 0h1m1 0h1m-269 1h1m131 0h1m4 0h1m3 0h1m3 0h1m7 0h1m3 0h1m2 0h3m3 0h2m1 0h1m1 0h4m3 0h4m80 0h1m1 0h1m2 0h1m-268 1h1m265 0h1m1 0h1m-269 1h1m-21 3h1m-2 1h3m-2 1h1m-269 3h1m6 0h3m-11 1h2m5 0h1m3 0h1m-13 1h1m1 0h1m9 0h1m-11 1h1m9 0h1m-11 1h1m8 0h1m474 0h3m3 0h3m3 0h3m16 0h1m4 0h3m-523 1h1m7 0h1m474 0h1m3 0h1m1 0h1m3 0h1m1 0h1m3 0h1m14 0h2m3 0h1m3 0h1m-524 1h1m6 0h1m479 0h1m1 0h1m3 0h1m1 0h1m6 0h3m3 0h3m4 0h1m3 0h1m-520 1h1m5 0h1m479 0h1m3 0h4m2 0h3m2 0h1m3 0h1m1 0h1m3 0h1m3 0h1m3 0h4m-525 1h5m3 0h5m474 0h1m7 0h1m5 0h1m1 0h1m5 0h1m3 0h1m3 0h1m3 0h1m3 0h1m-40 1h1m4 0h1m3 0h1m1 0h1m3 0h1m1 0h1m3 0h1m1 0h1m3 0h1m3 0h1m3 0h1m3 0h1m-41 1h5m2 0h3m3 0h3m3 0h3m3 0h3m3 0h3m3 0h3m27 13h1m2 0h1m1 0h2m-139 1h3m4 0h1m3 0h1m11 0h1m107 0h2m2 0h2m2 0h1m-141 1h1m3 0h1m3 0h1m3 0h1m11 0h1m108 0h1m1 0h1m2 0h1m1 0h1m-141 1h1m3 0h1m1 0h5m1 0h4m8 0h4m3 0h3m2 0h1m3 0h1m2 0h4m2 0h3m4 0h1m76 0h1m1 0h1m2 0h1m1 0h1m-140 1h3m4 0h1m3 0h1m3 0h1m7 0h1m3 0h1m1 0h1m3 0h1m1 0h1m3 0h1m1 0h1m5 0h1m3 0h1m81 0h2m3 0h1m-140 1h1m3 0h1m3 0h1m3 0h1m3 0h1m7 0h1m3 0h1m1 0h1m3 0h1m1 0h1m3 0h1m2 0h3m2 0h5m3 0h1m77 0h1m5 0h1m-141 1h1m3 0h1m3 0h1m3 0h1m3 0h1m7 0h1m3 0h1m1 0h1m3 0h1m1 0h1m2 0h2m5 0h1m1 0h1m85 0h1m5 0h1m-140 1h3m4 0h1m3 0h1m3 0h1m7 0h1m3 0h1m2 0h3m3 0h2m1 0h1m1 0h4m3 0h4m81 0h1m5 0h1m-2 1h1m-72 13h1m3 0h1m2 0h1m2 0h4m4 0h1m9 0h1m2 0h1m3 0h3m-39 1h2m3 0h1m2 0h1m2 0h1m3 0h1m13 0h1m2 0h1m2 0h1m3 0h1m-39 1h1m3 0h1m2 0h1m2 0h1m3 0h1m3 0h1m4 0h4m1 0h1m2 0h1m6 0h1m-39 1h1m3 0h5m1 0h4m4 0h1m3 0h1m5 0h5m3 0h2m-38 1h1m6 0h1m2 0h1m7 0h1m4 0h3m5 0h1m6 0h1m-39 1h1m6 0h1m2 0h1m7 0h1m7 0h1m4 0h1m2 0h1m3 0h1m-40 1h3m5 0h1m2 0h1m7 0h1m3 0h4m5 0h1m3 0h3m-571 9h3m-4 1h1m3 0h2m-5 1h1m3 0h1m-4 1h1m3 0h1m-5 1h1m3 0h1m592 0h1m5 0h1m-604 1h1m3 0h1m455 0h1m4 0h3m4 0h1m3 0h1m11 0h1m109 0h1m3 0h1m-604 1h1m3 0h1m455 0h2m3 0h1m3 0h1m3 0h1m3 0h1m11 0h1m110 0h3m-604 1h1m3 0h2m456 0h1m7 0h1m1 0h5m1 0h4m8 0h4m3 0h3m2 0h1m3 0h1m2 0h4m2 0h3m4 0h1m77 0h1m3 0h1m-604 1h3m458 0h1m6 0h1m4 0h1m3 0h1m3 0h1m7 0h1m3 0h1m1 0h1m3 0h1m1 0h1m3 0h1m1 0h1m5 0h1m3 0h1m80 0h1m5 0h1m-144 1h1m5 0h1m5 0h1m3 0h1m3 0h1m7 0h1m3 0h1m1 0h1m3 0h1m1 0h1m3 0h1m2 0h3m2 0h5m3 0h1m76 0h1m5 0h1m-144 1h1m4 0h1m6 0h1m3 0h1m3 0h1m7 0h1m3 0h1m1 0h1m3 0h1m1 0h1m2 0h2m5 0h1m1 0h1m84 0h1m5 0h1m-145 1h3m2 0h5m3 0h1m3 0h1m3 0h1m7 0h1m3 0h1m2 0h3m3 0h2m1 0h1m1 0h4m3 0h4m81 0h1m3 0h1m-4 1h3m-600 13h5m-8 1h3m5 0h1m-10 1h1m9 0h3m-14 1h1m9 0h1m3 0h1m-16 1h1m9 0h1m5 0h1m-7 1h1m5 0h1m-15 1h3m5 0h1m5 0h1m-16 1h1m3 0h1m5 0h1m3 0h1m-16 1h1m5 0h1m5 0h3m-15 1h1m5 0h1m595 0h3m-605 1h1m5 0h1m9 0h1m445 0h1m3 0h1m134 0h1m3 0h2m-606 1h1m3 0h1m9 0h1m446 0h2m1 0h2m135 0h1m3 0h1m-605 1h3m9 0h1m447 0h1m1 0h1m1 0h1m2 0h3m3 0h3m2 0h4m4 0h1m114 0h1m3 0h1m-603 1h1m5 0h3m448 0h1m3 0h1m1 0h1m3 0h1m1 0h1m3 0h1m1 0h1m3 0h1m118 0h1m3 0h1m-602 1h5m451 0h1m3 0h1m1 0h1m3 0h1m1 0h1m3 0h1m1 0h1m3 0h1m3 0h1m114 0h1m3 0h1m-146 1h1m3 0h1m1 0h1m3 0h1m1 0h1m3 0h1m1 0h1m3 0h1m117 0h1m3 0h1m-145 1h1m3 0h1m2 0h3m3 0h3m2 0h1m3 0h1m116 0h1m3 0h2m-5 1h3m-105 33h1m3 0h5m2 0h3m16 0h1m3 0h5m-40 1h2m7 0h1m1 0h1m3 0h1m14 0h2m3 0h1m-35 1h1m6 0h1m2 0h1m6 0h3m2 0h4m4 0h1m3 0h1m-35 1h1m5 0h1m3 0h1m5 0h1m3 0h1m1 0h1m3 0h1m3 0h1m3 0h4m-38 1h1m4 0h1m4 0h1m5 0h1m3 0h1m1 0h1m3 0h1m3 0h1m7 0h1m-39 1h1m3 0h1m5 0h1m3 0h1m1 0h1m2 0h2m1 0h1m3 0h1m3 0h1m3 0h1m3 0h1m-40 1h3m2 0h1m6 0h3m3 0h2m1 0h1m1 0h1m3 0h1m2 0h3m3 0h3m63 23h1m2 0h1m2 0h1m-146 1h1m3 0h1m15 0h1m117 0h2m1 0h3m1 0h2m-147 1h2m2 0h1m15 0h1m119 0h1m1 0h1m1 0h1m-145 1h1m1 0h1m1 0h1m2 0h3m2 0h4m2 0h5m3 0h1m113 0h1m1 0h1m1 0h1m-145 1h1m1 0h1m1 0h1m1 0h1m3 0h1m1 0h1m3 0h1m3 0h1m120 0h3m-144 1h1m2 0h2m1 0h5m1 0h1m3 0h1m3 0h1m5 0h1m115 0h1m-143 1h1m3 0h1m1 0h1m5 0h1m3 0h1m3 0h1m119 0h5m-145 1h1m3 0h1m2 0h4m1 0h4m4 0h1m121 0h1m-131 1h1m129 0h1m-131 1h1m126 1h1m2 0h1m2 0h1m-146 1h4m4 0h1m11 0h1m118 0h1m1 0h1m1 0h1m1 0h1m-146 1h1m3 0h1m3 0h1m11 0h1m118 0h1m2 0h1m2 0h1m-146 1h1m3 0h1m3 0h1m3 0h1m3 0h1m1 0h5m3 0h1m113 0h1m3 0h1m-145 1h4m4 0h1m3 0h1m3 0h1m3 0h1m120 0h3m-144 1h1m7 0h1m3 0h1m3 0h1m3 0h1m5 0h1m115 0h1m-143 1h1m7 0h1m3 0h1m2 0h2m3 0h1m119 0h5m-145 1h1m7 0h1m4 0h2m1 0h1m3 0h1m121 0h1m-1 1h1m-264 29h1m3 0h1m3 0h1m-8 1h1m1 0h1m1 0h1m1 0h1m1 0h1m-8 1h1m3 0h1m3 0h1m-9 1h1m3 0h1m3 0h1m-9 1h1m3 0h1m3 0h1m-9 1h1m3 0h1m3 0h1m-173 1h3m161 0h1m3 0h1m3 0h1m-174 1h1m3 0h2m159 0h1m3 0h1m3 0h1m-173 1h1m3 0h1m159 0h1m3 0h1m3 0h1m-172 1h1m3 0h1m158 0h1m3 0h1m3 0h1m-172 1h1m3 0h1m19 0h1m2 0h1m135 0h1m3 0h1m3 0h1m-172 1h1m3 0h1m19 0h1m2 0h1m135 0h1m3 0h1m3 0h1m4 0h1m-178 1h1m3 0h1m20 0h1m2 0h1m135 0h1m3 0h1m3 0h1m3 0h3m-180 1h1m3 0h2m20 0h1m2 0h1m135 0h1m3 0h1m3 0h1m4 0h1m-178 1h3m22 0h5m134 0h1m3 0h1m3 0h1m4 0h1m-150 1h1m144 0h1m2 0h1m-149 1h1m145 0h2m-148 1h1m-1 1h1m115 2h1m2 0h1m2 0h1m-7 1h1m1 0h1m1 0h1m1 0h1m-7 1h1m2 0h1m2 0h1m-6 1h1m3 0h1m-4 1h3m-2 1h1m-3 1h5m-3 1h1m-1 1h1"/>
<path stroke="#0ff" d="M0 .5m237 125h1m1 0h2m1 0h1m1 0h1m1 0h1m-8 1h1m1 0h2m3 0h1m1 0h1m-13 1h1m4 0h1m1 0h2m-12 1h1m2 0h1m8 0h1m2 0h1m1 0h1m-18 1h1m9 0h1m2 0h2m2 0h1m1 0h1m-23 1h1m14 0h1m2 0h2m2 0h1m1 0h1m-28 1h1m2 0h1m16 0h1m2 0h1m3 0h1m1 0h1m-30 1h1m21 0h1m1 0h2m3 0h1m-33 1h1m26 0h1m1 0h2m3 0h1m-38 1h1m2 0h1m28 0h1m1 0h2m1 0h1m1 0h1m-40 1h1m33 0h1m1 0h1m2 0h1m1 0h1m-45 1h1m38 0h3m2 0h1m1 0h1m-50 1h1m2 0h1m41 0h2m2 0h1m-50 1h1m43 0h1m2 0h1m3 0h1m-55 1h1m48 0h1m1 0h2m1 0h1m1 0h1m-60 1h1m2 0h1m50 0h1m1 0h2m1 0h1m1 0h1m-62 1h1m55 0h1m1 0h2m1 0h1m1 0h1m-67 1h1m60 0h1m1 0h1m2 0h1m-70 1h1m2 0h1m62 0h3m2 0h1m-72 1h1m67 0h3m2 0h1m-77 1h1m72 0h4m1 0h1m-82 1h1m2 0h1m75 0h1m1 0h1m1 0h1m-84 1h1m77 0h1m1 0h2m1 0h1m1 0h1m-89 1h1m82 0h1m1 0h2m1 0h1m-92 1h1m87 0h1m1 0h1m2 0h1m-94 1h1m89 0h3m2 0h1m-99 1h1m94 0h4m1 0h1m-104 1h1m99 0h4m1 0h1m-106 1h1m101 0h2m1 0h1m-109 1h1m106 0h2m1 0h1m-114 1h1m111 0h2m1 0h1m-116 1h1m111 0h1m1 0h2m1 0h1m-121 1h1m116 0h1m1 0h2m1 0h1m-126 1h1m121 0h4m-126 1h1m123 0h4m-146 1h1m14 0h1m128 0h2m1 0h1m-136 1h1m133 0h2m1 0h1m-138 1h1m135 0h2m1 0h1m-143 1h1m140 0h2m1 0h1m-155 1h1m6 0h1m145 0h2m-148 1h1m145 0h4m-153 1h1m150 0h4m-158 1h1m155 0h2m1 0h1m-162 1h1m1 0h1m157 0h2m1 0h1m-165 1h1m162 0h2m-168 1h1m167 0h2m-170 1h1m169 0h2m-175 1h1m5 0h1m167 0h3m-1 1h3m-2 1h3m-1 1h2m-176 1h1m175 0h2m0 1h2m0 1h2m-1 1h2m-184 1h1m183 0h2m1 1h1m0 1h1m-191 2h1m-2 4h1m-2 4h1m-2 4h1m-2 4h1m-2 4h1m-2 4h1m-2 4h1m-2 4h1m-2 4h1m-3 4h1m-2 4h1m-2 4h1m-2 4h1m-2 4h1m-2 4h1m-2 4h1m-2 4h1m-2 4h1m-2 4h1"/>
<path stroke="#0f0" d="M0 .5m168 82h1m5 0h1m-6 1h1m3 0h1m-5 1h1m1 0h1m1 0h1m-5 1h5m-5 1h1m1 0h1m1 0h1m-6 1h1m2 0h1m2 0h1m-5 1h1m1 0h1m73 0h1m7 0h1m-85 1h1m1 0h1m74 0h1m5 0h1m-83 1h1m77 0h3m-5 1h2m3 0h2m-7 1h1m5 0h1m-8 1h1m7 0h1m-9 1h1m7 0h1m-9 1h1m7 0h1m-114 1h1m7 0h1m97 0h1m5 0h1m-114 1h2m6 0h2m97 0h2m3 0h2m143 0h1m5 0h1m5 0h1m-271 1h1m1 0h1m5 0h1m1 0h1m99 0h3m144 0h2m4 0h2m4 0h1m-268 1h1m7 0h1m100 0h1m145 0h1m1 0h1m3 0h1m1 0h1m3 0h1m-268 1h1m7 0h1m100 0h1m144 0h1m2 0h1m2 0h1m2 0h1m2 0h1m-267 1h1m7 0h1m100 0h1m143 0h1m3 0h1m1 0h1m3 0h1m1 0h1m-266 1h1m7 0h1m96 0h9m139 0h1m4 0h2m4 0h2m-266 1h1m7 0h1m100 0h1m142 0h1m5 0h1m5 0h1m-267 1h5m3 0h5m98 0h1m146 3h1m5 0h1m5 0h1m-14 1h2m4 0h2m4 0h1m-13 1h1m1 0h1m3 0h1m1 0h1m3 0h1m-14 1h1m2 0h1m2 0h1m2 0h1m2 0h1m-14 1h1m3 0h1m1 0h1m3 0h1m1 0h1m-13 1h1m4 0h2m4 0h2m-14 1h1m5 0h1m5 0h1m-164 5h1m-2 1h3m-2 1h1m171 4h1m5 0h1m-6 1h1m3 0h1m-5 1h1m1 0h1m1 0h1m-5 1h5m-5 1h1m1 0h1m1 0h1m-6 1h1m2 0h1m2 0h1m-5 1h1m1 0h1m-3 1h1m1 0h1m-2 1h1m-366 5h1m3 0h1m-4 1h3m-4 1h1m3 0h1m-5 1h1m3 0h1m-5 1h1m3 0h1m-4 1h3m-2 1h1m-3 1h5m-3 1h1m62 2h1m11 0h1m-12 1h1m9 0h1m-10 1h1m7 0h1m-9 1h1m7 0h1m-9 1h1m3 0h1m3 0h1m-9 1h1m3 0h1m3 0h1m-9 1h9m-9 1h1m3 0h1m3 0h1m-9 1h1m3 0h1m3 0h1m-10 1h1m4 0h1m4 0h1m498 0h3m-513 1h1m5 0h1m5 0h1m363 0h3m12 0h1m7 0h1m109 0h1m3 0h1m-595 1h1m13 0h1m72 0h1m368 0h1m3 0h1m11 0h1m7 0h1m108 0h1m5 0h1m-595 1h1m11 0h1m72 0h3m371 0h1m1 0h4m3 0h4m7 0h4m3 0h3m2 0h1m3 0h1m2 0h4m2 0h3m4 0h1m76 0h1m5 0h1m-594 1h11m72 0h1m3 0h1m368 0h2m2 0h1m3 0h1m1 0h1m3 0h1m7 0h1m3 0h1m1 0h1m3 0h1m1 0h1m3 0h1m1 0h1m5 0h1m3 0h1m80 0h1m5 0h1m-592 1h1m5 0h1m74 0h1m3 0h1m370 0h1m1 0h1m5 0h1m3 0h1m7 0h1m3 0h1m1 0h1m3 0h1m1 0h1m3 0h1m2 0h3m2 0h5m3 0h1m77 0h1m3 0h1m-591 1h1m5 0h1m74 0h1m3 0h1m366 0h1m3 0h1m1 0h1m5 0h1m3 0h1m7 0h1m3 0h1m1 0h1m3 0h1m1 0h1m2 0h2m5 0h1m1 0h1m83 0h1m1 0h1m3 0h1m-591 1h1m5 0h1m75 0h3m368 0h3m2 0h1m6 0h4m7 0h1m3 0h1m2 0h3m3 0h2m1 0h1m1 0h4m3 0h4m80 0h1m5 0h1m-592 1h1m5 0h1m585 0h1m-593 1h1m5 0h1m-7 1h1m5 0h1m-7 1h1m5 0h1m-7 1h1m5 0h1m95 0h1m-103 1h1m5 0h1m94 0h3m-104 1h1m5 0h1m95 0h1m-103 1h1m5 0h1m-9 1h11m101 0h1m3 0h1m-118 1h1m11 0h1m108 0h1m3 0h1m3 0h1m3 0h1m3 0h1m-139 1h1m13 0h1m127 0h1m3 0h1m3 0h1m3 0h1m3 1h1m3 0h1m3 0h1m3 0h1m3 0h1m3 1h1m3 0h1m3 0h1m3 0h1m3 0h1m3 1h1m3 0h1m3 0h1m3 0h1m3 0h1m309 0h1m4 0h3m2 0h1m7 0h1m3 0h1m6 0h3m2 0h5m-345 1h1m3 0h1m3 0h1m3 0h1m3 0h1m288 0h2m3 0h1m3 0h1m1 0h1m11 0h1m5 0h1m3 0h1m5 0h1m-325 1h1m3 0h1m3 0h1m3 0h1m273 0h1m3 0h1m3 0h1m1 0h1m7 0h1m3 0h4m6 0h1m4 0h1m-308 1h1m3 0h1m3 0h1m3 0h1m3 0h1m253 0h1m4 0h4m1 0h1m7 0h1m3 0h1m3 0h1m4 0h1m4 0h1m-287 1h1m3 0h1m3 0h1m3 0h1m3 0h1m233 0h1m7 0h1m1 0h1m7 0h1m3 0h1m3 0h1m3 0h1m4 0h1m-266 1h1m3 0h1m225 0h1m3 0h1m3 0h1m1 0h1m7 0h1m3 0h1m3 0h1m2 0h1m4 0h1m-36 1h3m3 0h3m2 0h5m3 0h1m3 0h4m2 0h5m1 0h1m30 13h1m2 0h1m1 0h2m-140 1h5m3 0h1m3 0h1m11 0h1m107 0h2m2 0h2m2 0h1m-137 1h1m3 0h1m3 0h1m11 0h1m108 0h1m1 0h1m2 0h1m1 0h1m-138 1h1m2 0h5m1 0h4m8 0h4m3 0h3m2 0h1m3 0h1m2 0h4m2 0h3m4 0h1m76 0h1m1 0h1m2 0h1m1 0h1m-139 1h1m5 0h1m3 0h1m3 0h1m7 0h1m3 0h1m1 0h1m3 0h1m1 0h1m3 0h1m1 0h1m5 0h1m3 0h1m81 0h2m3 0h1m-139 1h1m6 0h1m3 0h1m3 0h1m7 0h1m3 0h1m1 0h1m3 0h1m1 0h1m3 0h1m2 0h3m2 0h5m3 0h1m77 0h1m5 0h1m-141 1h1m7 0h1m3 0h1m3 0h1m7 0h1m3 0h1m1 0h1m3 0h1m1 0h1m2 0h2m5 0h1m1 0h1m85 0h1m5 0h1m-141 1h1m7 0h1m3 0h1m3 0h1m7 0h1m3 0h1m2 0h3m3 0h2m1 0h1m1 0h4m3 0h4m81 0h1m5 0h1m-2 1h1m-230 2h5m-1 1h1m-1 1h1m-2 1h1m-2 1h1m-2 1h1m-2 1h1m-1 1h1m-1 1h1m157 3h1m3 0h5m3 0h1m15 0h1m2 0h1m3 0h3m-39 1h2m7 0h1m2 0h1m1 0h1m14 0h1m2 0h1m2 0h1m3 0h1m-39 1h1m6 0h1m2 0h1m3 0h1m2 0h3m2 0h1m3 0h1m1 0h1m2 0h1m6 0h1m-39 1h1m5 0h1m3 0h1m3 0h1m1 0h1m3 0h1m1 0h1m3 0h1m1 0h5m3 0h2m-38 1h1m4 0h1m4 0h5m1 0h1m3 0h1m1 0h1m3 0h1m4 0h1m6 0h1m-39 1h1m3 0h1m5 0h1m3 0h1m1 0h1m3 0h1m1 0h1m2 0h2m4 0h1m2 0h1m3 0h1m-40 1h3m2 0h1m5 0h1m3 0h1m2 0h4m2 0h2m1 0h1m4 0h1m3 0h3m-18 1h1m-1 1h1m44 11h2m3 0h2m-144 1h1m5 0h1m5 0h1m3 0h1m11 0h1m107 0h1m2 0h1m1 0h1m2 0h1m-146 1h2m4 0h2m5 0h1m3 0h1m11 0h1m107 0h1m2 0h1m1 0h1m2 0h1m-145 1h1m5 0h1m3 0h5m1 0h4m8 0h4m3 0h3m2 0h1m3 0h1m2 0h4m2 0h3m4 0h1m76 0h1m2 0h1m2 0h1m-144 1h1m5 0h1m5 0h1m3 0h1m3 0h1m7 0h1m3 0h1m1 0h1m3 0h1m1 0h1m3 0h1m1 0h1m5 0h1m3 0h1m83 0h1m-141 1h1m5 0h1m5 0h1m3 0h1m3 0h1m7 0h1m3 0h1m1 0h1m3 0h1m1 0h1m3 0h1m2 0h3m2 0h5m3 0h1m79 0h1m-141 1h1m5 0h1m5 0h1m3 0h1m3 0h1m7 0h1m3 0h1m1 0h1m3 0h1m1 0h1m2 0h2m5 0h1m1 0h1m87 0h1m-142 1h3m3 0h3m4 0h1m3 0h1m3 0h1m7 0h1m3 0h1m2 0h3m3 0h2m1 0h1m1 0h4m3 0h4m83 0h1m-1 1h1m-3 42h1m3 0h1m-145 1h1m3 0h1m136 0h3m-144 1h2m1 0h2m135 0h1m3 0h1m-145 1h1m1 0h1m1 0h1m2 0h3m2 0h4m3 0h3m4 0h1m113 0h1m3 0h1m-145 1h1m3 0h1m1 0h1m3 0h1m1 0h1m3 0h1m1 0h1m3 0h1m117 0h1m3 0h1m-145 1h1m3 0h1m1 0h5m1 0h1m5 0h1m7 0h1m114 0h3m-144 1h1m3 0h1m1 0h1m5 0h1m5 0h1m3 0h1m119 0h1m-143 1h1m3 0h1m2 0h4m1 0h1m6 0h3m118 0h5m-3 1h1m-243 17h1m3 0h1m-4 1h3m-4 1h1m3 0h1m-5 1h1m3 0h1m-5 1h1m3 0h1m-4 1h3m-2 1h1m-3 1h5m-3 1h1m236 17h1m5 0h1m-146 1h1m3 0h1m135 0h1m3 0h1m-145 1h1m3 0h1m135 0h1m1 0h1m1 0h1m-145 1h1m3 0h1m1 0h4m3 0h3m2 0h4m4 0h1m113 0h5m-145 1h1m3 0h1m1 0h1m3 0h1m1 0h1m3 0h1m1 0h1m3 0h1m117 0h1m1 0h1m1 0h1m-145 1h1m3 0h1m1 0h1m5 0h1m3 0h1m1 0h1m3 0h1m3 0h1m112 0h1m2 0h1m2 0h1m-146 1h1m3 0h1m1 0h1m5 0h1m2 0h2m1 0h1m3 0h1m118 0h1m1 0h1m-143 1h3m2 0h1m6 0h2m1 0h1m1 0h1m3 0h1m118 0h1m1 0h1m-2 1h1m-101 13h5m3 0h1m16 0h3m3 0h3m-34 1h1m6 0h1m1 0h1m14 0h1m3 0h1m1 0h1m3 0h1m-35 1h1m5 0h1m3 0h1m2 0h3m2 0h1m3 0h1m5 0h1m1 0h1m-31 1h4m2 0h1m3 0h1m1 0h1m3 0h1m1 0h1m3 0h1m4 0h1m2 0h4m-30 1h1m1 0h5m1 0h1m3 0h1m1 0h1m3 0h1m3 0h1m3 0h1m3 0h1m-436 1h1m3 0h1m396 0h1m3 0h1m1 0h1m3 0h1m1 0h1m3 0h1m1 0h1m2 0h2m2 0h1m4 0h1m3 0h1m-435 1h3m398 0h3m2 0h1m3 0h1m2 0h4m2 0h2m1 0h1m1 0h5m2 0h3m-435 1h1m3 0h1m412 0h1m-418 1h1m3 0h1m412 0h1m-418 1h1m3 0h1m-4 1h3m-2 1h1m-3 1h5m-3 1h1m14 4h3m-4 1h1m3 0h1m-1 1h1m-1 1h1m-3 1h2m0 1h1m-1 1h1m-5 1h1m3 0h1m-4 1h3m-8 38h1m3 0h1m-4 1h3m-4 1h1m3 0h1m-5 1h1m3 0h1m-5 1h1m3 0h1m-4 1h3m-2 1h1m-3 1h5m-3 1h1m130 14h5m-6 1h1m5 0h1m-8 1h1m7 0h1m-9 1h1m7 0h1m-9 1h1m7 0h1m-8 1h1m5 0h1m-12 1h7m3 0h7m-17 4h17"/>
<path stroke="#ff0" d="M0 .5m127 57h3m-4 1h1m3 0h1m-5 1h1m3 0h1m-5 1h1m3 0h1m-4 1h3m-2 1h1m-3 1h5m-3 1h1m-1 1h1m115 2h1m6 0h3m-11 1h2m5 0h1m3 0h1m-156 1h1m11 0h1m130 0h1m1 0h1m5 0h1m3 0h1m-155 1h1m9 0h1m133 0h1m5 0h1m3 0h1m-155 1h1m9 0h1m133 0h1m5 0h1m3 0h1m17 0h1m-172 1h2m5 0h2m134 0h1m5 0h1m3 0h1m15 0h5m-172 1h5m136 0h1m5 0h1m3 0h1m17 0h1m-172 1h2m5 0h2m134 0h1m5 0h1m3 0h1m17 0h1m1 0h2m-176 1h1m9 0h1m131 0h5m4 0h3m18 0h2m2 0h1m-177 1h1m9 0h1m161 0h1m3 0h1m-178 1h1m11 0h1m160 0h1m2 0h1m-177 1h1m11 0h1m160 0h1m2 0h1m-177 1h1m11 0h1m164 0h1m-178 1h1m11 0h1m-13 1h1m11 0h1m-12 1h1m9 0h1m-10 1h2m5 0h2m-7 1h5m103 6h1m-1 1h1m-5 1h9m-5 1h1m-1 1h1m-1 1h1m-1 1h1m3 0h3m-7 1h1m2 0h1m3 0h1m-8 1h3m5 0h1m-9 1h1m7 0h1m-9 1h1m7 0h1m-9 1h1m6 0h1m-8 1h1m5 0h1m-7 1h1m5 0h1m-7 1h1m5 0h1m0 1h1m0 1h1m15 12h1m-2 1h3m-2 1h1m-1 4h10m-111 8h3m-5 1h2m3 0h2m57 0h1m-65 1h1m5 0h1m53 0h1m1 0h1m-64 1h1m7 0h1m50 0h1m-60 1h1m7 0h1m-9 1h1m7 0h1m-8 1h1m5 0h1m-7 1h2m3 0h2m-5 1h3m-2 1h1m-1 1h1m-1 1h1m-5 1h9m-5 1h1m-1 1h1m-1 1h1m357 0h3m12 0h1m7 0h1m110 0h3m-495 1h1m356 0h1m3 0h1m11 0h1m7 0h1m108 0h2m3 0h2m-136 1h1m1 0h4m3 0h4m7 0h4m3 0h3m2 0h1m3 0h1m2 0h4m2 0h3m4 0h1m75 0h1m4 0h1m2 0h1m-138 1h1m2 0h1m3 0h1m1 0h1m3 0h1m7 0h1m3 0h1m1 0h1m3 0h1m1 0h1m3 0h1m1 0h1m5 0h1m3 0h1m80 0h2m2 0h1m2 0h1m-139 1h1m3 0h1m3 0h1m1 0h1m3 0h1m7 0h1m3 0h1m1 0h1m3 0h1m1 0h1m3 0h1m2 0h3m2 0h5m3 0h1m75 0h1m2 0h1m2 0h2m-139 1h1m4 0h1m3 0h1m1 0h1m3 0h1m7 0h1m3 0h1m1 0h1m3 0h1m1 0h1m2 0h2m5 0h1m1 0h1m83 0h1m2 0h1m4 0h1m-141 1h5m1 0h1m3 0h1m2 0h4m7 0h1m3 0h1m2 0h3m3 0h2m1 0h1m1 0h4m3 0h4m80 0h2m3 0h2m-5 1h3m-478 2h1m-2 1h3m-2 1h1m407 9h1m3 0h1m2 0h1m2 0h1m3 0h1m3 0h1m9 0h1m2 0h1m3 0h3m-39 1h2m3 0h1m2 0h1m2 0h1m3 0h1m13 0h1m2 0h1m2 0h1m3 0h1m-39 1h1m3 0h1m2 0h1m2 0h1m3 0h1m3 0h1m3 0h4m2 0h1m2 0h1m6 0h1m-39 1h1m3 0h5m1 0h1m3 0h1m3 0h1m3 0h1m3 0h1m1 0h5m3 0h2m-38 1h1m6 0h1m3 0h1m1 0h1m4 0h1m3 0h1m8 0h1m6 0h1m-39 1h1m6 0h1m3 0h1m1 0h1m4 0h1m3 0h1m8 0h1m2 0h1m3 0h1m-40 1h3m5 0h1m4 0h1m5 0h1m3 0h1m8 0h1m3 0h3m26 13h1m1 0h1m1 0h1m-136 1h3m4 0h1m3 0h1m11 0h1m108 0h1m1 0h1m1 0h1m-138 1h1m3 0h1m3 0h1m3 0h1m11 0h1m108 0h1m1 0h1m1 0h1m-138 1h1m5 0h5m1 0h4m8 0h4m3 0h3m2 0h1m3 0h1m2 0h4m2 0h3m4 0h1m76 0h1m1 0h1m1 0h1m-138 1h4m4 0h1m3 0h1m3 0h1m7 0h1m3 0h1m1 0h1m3 0h1m1 0h1m3 0h1m1 0h1m5 0h1m3 0h1m80 0h1m1 0h1m1 0h1m-138 1h1m3 0h1m3 0h1m3 0h1m3 0h1m7 0h1m3 0h1m1 0h1m3 0h1m1 0h1m3 0h1m2 0h3m2 0h5m3 0h1m76 0h1m1 0h1m1 0h1m-138 1h1m3 0h1m3 0h1m3 0h1m3 0h1m7 0h1m3 0h1m1 0h1m3 0h1m1 0h1m2 0h2m5 0h1m1 0h1m84 0h1m1 0h1m1 0h1m1 0h2m-140 1h3m4 0h1m3 0h1m3 0h1m7 0h1m3 0h1m2 0h3m3 0h2m1 0h1m1 0h4m3 0h4m80 0h1m1 0h1m1 0h1m2 0h1m-3 1h2m-192 2h1m5 0h1m3 0h3m-14 1h2m5 0h1m1 0h2m3 0h1m110 0h5m2 0h3m15 0h3m3 0h3m-160 1h1m1 0h1m5 0h2m6 0h1m109 0h1m5 0h1m3 0h1m13 0h1m3 0h1m1 0h1m3 0h1m-159 1h1m4 0h1m2 0h1m5 0h1m109 0h1m5 0h1m6 0h3m2 0h4m6 0h1m5 0h1m-159 1h1m3 0h1m4 0h1m4 0h1m109 0h4m2 0h1m5 0h1m3 0h1m1 0h1m3 0h1m4 0h1m5 0h1m-158 1h1m3 0h1m4 0h1m3 0h1m114 0h1m1 0h1m5 0h1m3 0h1m1 0h1m3 0h1m3 0h1m5 0h1m-157 1h1m3 0h1m5 0h1m1 0h1m111 0h1m3 0h1m1 0h1m3 0h1m1 0h1m2 0h2m1 0h1m3 0h1m2 0h1m5 0h1m-156 1h1m3 0h1m6 0h1m113 0h3m3 0h3m3 0h2m1 0h1m1 0h4m2 0h5m1 0h5m-159 1h1m3 0h1m7 0h1m129 0h1m-142 1h1m1 0h1m9 0h1m128 0h1m-141 1h1m11 0h1m-13 1h1m11 0h1m104 0h3m2 0h5m2 0h3m14 0h1m2 0h1m3 0h3m-156 1h1m11 0h1m103 0h1m3 0h1m1 0h1m5 0h1m3 0h1m13 0h1m2 0h1m2 0h1m3 0h1m-157 1h1m11 0h1m107 0h1m1 0h1m5 0h1m6 0h3m2 0h4m2 0h1m2 0h1m6 0h1m-157 1h1m11 0h1m106 0h1m2 0h4m2 0h1m5 0h1m3 0h1m1 0h1m3 0h1m1 0h5m3 0h2m-145 1h1m106 0h1m7 0h1m1 0h1m5 0h1m3 0h1m1 0h1m3 0h1m4 0h1m6 0h1m-147 1h1m106 0h1m4 0h1m3 0h1m1 0h1m3 0h1m1 0h1m2 0h2m1 0h1m3 0h1m4 0h1m2 0h1m3 0h1m-41 1h5m2 0h3m3 0h3m3 0h2m1 0h1m1 0h4m5 0h1m3 0h3m-16 1h1m-1 1h1m-178 6h3m-4 1h1m3 0h1m-5 1h1m3 0h1m-5 1h1m3 0h1m-4 1h3m-2 1h1m217 0h1m7 0h1m-229 1h5m79 0h1m4 0h3m4 0h1m3 0h1m11 0h1m108 0h1m5 0h1m-226 1h1m41 0h1m38 0h2m3 0h1m3 0h1m3 0h1m3 0h1m11 0h1m109 0h1m3 0h1m-225 1h1m39 0h5m37 0h1m3 0h1m2 0h2m1 0h5m1 0h4m8 0h4m3 0h3m2 0h1m3 0h1m2 0h4m2 0h3m4 0h1m77 0h1m3 0h1m-183 1h1m39 0h1m3 0h1m1 0h1m1 0h1m3 0h1m3 0h1m3 0h1m7 0h1m3 0h1m1 0h1m3 0h1m1 0h1m3 0h1m1 0h1m5 0h1m3 0h1m79 0h9m-185 1h1m1 0h2m36 0h1m3 0h2m2 0h1m3 0h1m3 0h1m3 0h1m7 0h1m3 0h1m1 0h1m3 0h1m1 0h1m3 0h1m2 0h3m2 0h5m3 0h1m77 0h1m3 0h1m-183 1h2m2 0h1m35 0h1m3 0h1m3 0h1m3 0h1m3 0h1m3 0h1m7 0h1m3 0h1m1 0h1m3 0h1m1 0h1m2 0h2m5 0h1m1 0h1m85 0h1m3 0h1m-183 1h1m3 0h1m34 0h3m3 0h3m4 0h1m3 0h1m3 0h1m7 0h1m3 0h1m2 0h3m3 0h2m1 0h1m1 0h4m3 0h4m80 0h1m5 0h1m-184 1h1m2 0h1m172 0h1m7 0h1m-185 1h1m2 0h1m0 1h1m106 11h3m3 0h3m2 0h5m15 0h1m4 0h3m-40 1h1m3 0h1m1 0h1m3 0h1m3 0h1m16 0h2m3 0h1m3 0h1m-37 1h1m1 0h1m3 0h1m3 0h1m4 0h3m2 0h1m3 0h1m3 0h1m3 0h1m-34 1h1m3 0h4m3 0h1m3 0h1m3 0h1m1 0h1m3 0h1m3 0h1m3 0h4m-38 1h1m7 0h1m3 0h1m3 0h1m3 0h1m1 0h1m3 0h1m3 0h1m3 0h1m3 0h1m-40 1h1m4 0h1m3 0h1m3 0h1m3 0h1m2 0h2m1 0h1m2 0h2m3 0h1m3 0h1m3 0h1m-41 1h5m2 0h3m4 0h1m4 0h2m1 0h1m2 0h2m1 0h1m2 0h3m3 0h3m-69 24h3m2 0h5m13 0h5m2 0h3m-34 1h1m3 0h1m3 0h1m15 0h1m5 0h1m3 0h1m-35 1h1m2 0h2m3 0h1m4 0h3m2 0h1m3 0h1m1 0h1m5 0h1m3 0h1m-35 1h1m1 0h1m1 0h1m3 0h1m3 0h1m3 0h1m1 0h1m3 0h1m1 0h4m3 0h3m-34 1h2m2 0h1m3 0h1m3 0h1m3 0h1m1 0h1m3 0h1m5 0h1m1 0h1m3 0h1m-35 1h1m3 0h1m3 0h1m3 0h1m2 0h2m1 0h1m2 0h2m1 0h1m3 0h1m1 0h1m3 0h1m-34 1h3m4 0h1m4 0h2m1 0h1m2 0h2m1 0h1m2 0h3m3 0h3m-164 4h3m-4 1h1m3 0h1m-5 1h1m-1 1h1m-1 1h4m-4 1h1m3 0h1m-5 1h1m3 0h1m-5 1h1m3 0h1m-4 1h3m226 1h3m-144 1h1m3 0h1m32 0h3m3 0h3m2 0h5m14 0h3m3 0h3m64 0h1m3 0h1m-145 1h1m3 0h1m31 0h1m3 0h1m1 0h1m3 0h1m3 0h1m15 0h1m3 0h1m1 0h1m3 0h1m63 0h1m3 0h1m-145 1h1m3 0h1m2 0h3m2 0h4m2 0h1m3 0h1m3 0h1m13 0h1m5 0h1m3 0h1m4 0h3m2 0h1m3 0h1m1 0h1m2 0h2m1 0h1m3 0h1m63 0h1m3 0h1m-145 1h1m3 0h1m1 0h1m3 0h1m1 0h1m3 0h1m1 0h1m3 0h1m16 0h1m5 0h1m4 0h1m3 0h1m3 0h1m1 0h1m3 0h1m1 0h1m1 0h1m1 0h1m2 0h4m64 0h3m-143 1h1m1 0h1m2 0h5m1 0h1m3 0h1m1 0h1m3 0h1m3 0h1m11 0h1m5 0h1m5 0h1m3 0h1m3 0h1m1 0h1m3 0h1m1 0h2m2 0h1m5 0h1m65 0h1m-142 1h1m1 0h1m2 0h1m5 0h1m3 0h1m1 0h1m2 0h2m14 0h1m5 0h1m6 0h1m3 0h1m2 0h2m1 0h1m2 0h2m1 0h1m3 0h1m1 0h1m3 0h1m63 0h5m-143 1h1m4 0h4m1 0h1m3 0h1m2 0h2m1 0h1m13 0h5m1 0h5m3 0h1m4 0h2m1 0h1m2 0h2m1 0h1m2 0h3m3 0h3m66 0h1m-1 1h1m-542 4h3m-4 1h1m3 0h1m-5 1h1m3 0h1m-5 1h1m3 0h1m-4 1h3m-2 1h1m-3 1h5m-3 1h1m-1 1h1m6 6h3m-4 1h1m3 0h1m-1 1h1m-1 1h1m-2 1h1m529 0h1m-532 1h1m390 0h3m10 0h1m124 0h5m-535 1h1m390 0h1m3 0h1m9 0h1m126 0h1m-534 1h1m391 0h1m6 0h3m2 0h5m1 0h1m3 0h1m3 0h1m114 0h1m1 0h2m-537 1h5m388 0h3m2 0h1m3 0h1m3 0h1m3 0h1m3 0h1m118 0h2m2 0h1m-142 1h1m1 0h1m3 0h1m3 0h1m3 0h1m3 0h1m3 0h1m114 0h1m3 0h1m-146 1h1m3 0h1m1 0h1m2 0h2m3 0h1m3 0h1m2 0h2m118 0h1m2 0h1m-144 1h3m3 0h2m1 0h1m3 0h1m4 0h2m1 0h1m118 0h1m2 0h1m0 1h1m-109 3h3m3 0h3m2 0h5m14 0h3m2 0h1m2 0h1m-40 1h1m3 0h1m1 0h1m3 0h1m3 0h1m15 0h1m3 0h1m1 0h1m2 0h1m-36 1h1m1 0h1m3 0h1m3 0h1m4 0h3m2 0h1m3 0h1m5 0h1m1 0h1m2 0h1m-37 1h1m3 0h4m3 0h1m3 0h1m3 0h1m1 0h1m3 0h1m3 0h2m2 0h5m-39 1h1m7 0h1m3 0h1m3 0h1m3 0h1m1 0h1m3 0h1m5 0h1m4 0h1m-39 1h1m4 0h1m3 0h1m3 0h1m3 0h1m2 0h2m1 0h1m2 0h2m1 0h1m3 0h1m4 0h1m-40 1h5m2 0h3m4 0h1m4 0h2m1 0h1m2 0h2m1 0h1m2 0h3m5 0h1m-404 85h1m3 0h1m3 0h1m-8 1h1m1 0h1m1 0h1m1 0h1m1 0h1m-8 1h1m3 0h1m3 0h1m3 0h1m-13 1h1m3 0h1m3 0h1m2 0h2m-13 1h1m3 0h1m3 0h1m1 0h1m1 0h1m-13 1h1m3 0h1m3 0h2m2 0h1m-13 1h1m3 0h1m3 0h1m3 0h1m-13 1h1m3 0h1m3 0h1m3 0h1m-13 1h1m3 0h1m3 0h1m3 0h1m-13 1h1m3 0h1m3 0h1m3 0h1m-13 1h1m3 0h1m3 0h1m3 0h1m-13 1h1m3 0h1m3 0h1m3 0h1m-13 1h1m3 0h1m3 0h1m3 0h1m-13 1h1m3 0h1m4 0h1m1 0h1m-12 1h1m3 0h1m5 0h1m-2 1h1m1 0h1m-4 1h1m3 0h1m72 1h3m-4 1h1m3 0h1m-5 1h1m3 0h1m-5 1h1m3 0h1m-4 1h3m-2 1h1m-3 1h5m-3 1h1m-1 1h1"/>
<path stroke="#808080" d="M0 .5m227 49h1m3 0h1m2 0h1m2 0h1m5 0h1m2 0h1m3 0h1m2 0h1m-37 1h1m3 0h1m5 0h1m3 0h1m2 0h1m2 0h1m5 0h1m2 0h1m3 0h1m2 0h1m6 0h1m-50 1h1m2 0h1m2 0h1m3 0h1m5 0h1m3 0h1m2 0h1m2 0h1m5 0h1m2 0h1m3 0h1m2 0h1m6 0h1m2 0h1m2 0h1m-63 1h1m6 0h1m2 0h1m2 0h1m3 0h1m5 0h1m3 0h1m2 0h1m2 0h1m5 0h1m2 0h1m3 0h1m2 0h1m6 0h1m2 0h1m2 0h1m3 0h1m-70 1h1m2 0h1m6 0h1m3 0h1m2 0h1m2 0h1m5 0h1m3 0h1m2 0h1m2 0h1m5 0h1m2 0h1m3 0h1m2 0h1m5 0h1m3 0h1m2 0h1m3 0h1m5 0h1m2 0h1m-82 1h1m2 0h1m2 0h1m6 0h1m3 0h1m2 0h1m2 0h1m5 0h1m3 0h1m2 0h1m2 0h1m5 0h1m2 0h1m3 0h1m2 0h1m5 0h1m3 0h1m2 0h1m2 0h1m6 0h1m2 0h1m3 0h1m-90 1h1m3 0h1m3 0h1m2 0h1m5 0h1m3 0h1m2 0h1m3 0h1m5 0h1m2 0h1m2 0h1m3 0h1m4 0h1m2 0h1m2 0h1m2 0h1m6 0h1m3 0h1m2 0h1m2 0h1m5 0h1m3 0h1m3 0h1m2 0h1m-99 1h1m6 0h1m3 0h1m2 0h1m2 0h1m5 0h1m3 0h1m2 0h1m3 0h1m5 0h1m2 0h1m2 0h1m3 0h1m4 0h1m2 0h1m2 0h1m2 0h1m6 0h1m2 0h1m2 0h1m3 0h1m5 0h1m2 0h1m3 0h1m2 0h1m6 0h1m-111 1h1m2 0h1m2 0h1m6 0h1m3 0h1m2 0h1m2 0h1m6 0h1m2 0h1m2 0h1m3 0h1m5 0h1m2 0h1m2 0h1m3 0h1m4 0h1m2 0h1m2 0h1m2 0h1m6 0h1m2 0h1m2 0h1m3 0h1m5 0h1m2 0h1m3 0h1m2 0h1m6 0h1m3 0h1m-115 1h1m3 0h1m2 0h1m5 0h1m3 0h1m2 0h1m2 0h1m6 0h1m2 0h1m2 0h1m3 0h1m5 0h1m2 0h1m2 0h1m3 0h1m4 0h1m2 0h1m2 0h1m2 0h1m6 0h1m2 0h1m2 0h1m3 0h1m5 0h1m2 0h1m3 0h1m2 0h1m5 0h1m4 0h1m-119 1h1m4 0h1m2 0h1m2 0h1m5 0h1m3 0h1m2 0h1m2 0h1m6 0h1m3 0h1m2 0h1m2 0h1m5 0h1m2 0h1m2 0h1m3 0h1m4 0h1m2 0h1m2 0h1m2 0h1m5 0h1m3 0h1m2 0h1m3 0h1m5 0h1m2 0h1m2 0h1m3 0h1m5 0h1m3 0h1m3 0h1m-122 1h1m4 0h1m2 0h1m2 0h1m6 0h1m2 0h1m2 0h1m2 0h1m6 0h1m3 0h1m2 0h1m2 0h1m35 0h1m3 0h1m2 0h1m2 0h1m6 0h1m2 0h1m2 0h1m2 0h1m6 0h1m3 0h1m2 0h1m3 0h1m-124 1h1m3 0h1m2 0h1m3 0h1m5 0h1m2 0h1m3 0h1m2 0h1m5 0h1m3 0h1m45 0h1m2 0h1m2 0h1m5 0h1m3 0h1m2 0h1m2 0h1m6 0h1m3 0h1m2 0h1m2 0h1m-130 1h1m6 0h1m3 0h1m3 0h1m2 0h1m5 0h1m3 0h1m2 0h1m2 0h1m61 0h1m5 0h1m2 0h1m3 0h1m2 0h1m5 0h1m3 0h1m3 0h1m2 0h1m6 0h1m-140 1h1m3 0h1m6 0h1m3 0h1m2 0h1m2 0h1m5 0h1m3 0h1m2 0h1m70 0h1m2 0h1m2 0h1m3 0h1m5 0h1m3 0h1m2 0h1m3 0h1m6 0h1m-143 1h1m3 0h1m2 0h1m6 0h1m3 0h1m2 0h1m2 0h1m6 0h1m82 0h1m2 0h1m6 0h1m2 0h1m3 0h1m2 0h1m6 0h1m3 0h1m-149 1h1m3 0h1m2 0h1m3 0h1m5 0h1m3 0h1m2 0h1m3 0h1m98 0h1m2 0h1m2 0h1m3 0h1m6 0h1m2 0h1m3 0h1m-152 1h1m3 0h1m3 0h1m2 0h1m6 0h1m2 0h1m3 0h1m2 0h1m97 0h1m3 0h1m2 0h1m2 0h1m6 0h1m3 0h1m2 0h1m3 0h1m-154 1h1m3 0h1m2 0h1m2 0h1m6 0h1m3 0h1m2 0h1m103 0h1m3 0h1m2 0h1m6 0h1m2 0h1m3 0h1m3 0h1m-160 1h1m5 0h1m3 0h1m2 0h1m3 0h1m6 0h1m2 0h1m109 0h1m3 0h1m6 0h1m2 0h1m2 0h1m3 0h1m-163 1h1m3 0h1m6 0h1m2 0h1m3 0h1m2 0h1m6 0h1m115 0h1m6 0h1m3 0h1m2 0h1m3 0h1m5 0h1m-172 1h1m3 0h1m3 0h1m5 0h1m3 0h1m2 0h1m3 0h1m128 0h1m2 0h1m3 0h1m2 0h1m6 0h1m3 0h1m-175 1h1m2 0h1m3 0h1m5 0h1m3 0h1m3 0h1m2 0h1m127 0h1m3 0h1m2 0h1m3 0h1m5 0h1m3 0h1m-178 1h1m3 0h1m3 0h1m3 0h1m5 0h1m3 0h1m2 0h1m133 0h1m3 0h1m3 0h1m5 0h1m3 0h1m2 0h1m-180 1h1m3 0h1m2 0h1m3 0h1m5 0h1m3 0h1m136 0h1m2 0h1m3 0h1m5 0h1m3 0h1m3 0h1m-180 1h1m3 0h1m3 0h1m3 0h1m5 0h1m142 0h1m3 0h1m5 0h1m3 0h1m2 0h1m3 0h1m-182 1h1m3 0h1m2 0h1m3 0h1m151 0h1m5 0h1m3 0h1m3 0h1m3 0h1m-189 1h1m6 0h1m3 0h1m3 0h1m3 0h1m156 0h1m3 0h1m2 0h1m3 0h1m-192 1h1m3 0h1m7 0h1m3 0h1m2 0h1m3 0h1m155 0h1m3 0h1m3 0h1m3 0h1m6 0h1m-198 1h1m3 0h1m6 0h1m3 0h1m3 0h1m158 0h1m3 0h1m2 0h1m3 0h1m7 0h1m-201 1h1m2 0h1m3 0h1m7 0h1m3 0h1m164 0h1m3 0h1m3 0h1m6 0h1m3 0h1m-203 1h1m2 0h1m3 0h1m6 0h1m171 0h1m3 0h1m7 0h1m3 0h1m-206 1h1m2 0h1m3 0h1m3 0h1m6 0h1m170 0h1m3 0h1m6 0h1m3 0h1m3 0h1m-209 1h1m3 0h1m2 0h1m3 0h1m180 0h1m6 0h1m3 0h1m3 0h1m3 0h1m-211 1h1m2 0h1m3 0h1m3 0h1m186 0h1m3 0h1m3 0h1m2 0h1m-210 1h1m3 0h1m3 0h1m2 0h1m185 0h1m3 0h1m3 0h1m3 0h1m-217 1h1m7 0h1m2 0h1m3 0h1m188 0h1m2 0h1m3 0h1m3 0h1m-215 1h1m7 0h1m2 0h1m194 0h1m2 0h1m3 0h1m-217 1h1m2 0h1m7 0h1m2 0h1m193 0h1m3 0h1m3 0h1m7 0h1m-225 1h1m3 0h1m7 0h1m2 0h1m195 0h1m3 0h1m7 0h1m3 0h1m-231 1h1m3 0h1m3 0h1m6 0h1m201 0h1m8 0h1m2 0h1m-229 1h1m3 0h1m3 0h1m207 0h1m7 0h1m2 0h1m-232 1h1m3 0h1m3 0h1m3 0h1m206 0h1m7 0h1m3 0h1m3 0h1m-235 1h1m3 0h1m3 0h1m3 0h1m212 0h1m3 0h1m3 0h1m-234 1h1m4 0h1m3 0h1m215 0h1m2 0h1m3 0h1m4 0h1m-237 1h1m4 0h1m2 0h1m214 0h1m2 0h1m3 0h1m4 0h1m-244 1h1m8 0h1m3 0h1m3 0h1m216 0h1m3 0h1m3 0h1m-242 1h1m8 0h1m3 0h1m218 0h1m3 0h1m3 0h1m8 0h1m-253 1h1m3 0h1m7 0h1m225 0h1m4 0h1m7 0h1m-251 1h1m3 0h1m7 0h1m223 0h1m4 0h1m7 0h1m3 0h1m-258 1h1m4 0h1m3 0h1m7 0h1m226 0h1m7 0h1m3 0h1m-256 1h1m4 0h1m2 0h1m233 0h1m7 0h1m3 0h1m-258 1h1m3 0h1m4 0h1m2 0h1m239 0h1m4 0h1m4 0h1m-262 1h1m3 0h1m3 0h1m3 0h1m237 0h1m4 0h1m4 0h1m-260 1h1m3 0h1m3 0h1m3 0h1m235 0h1m4 0h1m4 0h1m3 0h1m-262 1h1m3 0h1m3 0h1m242 0h1m4 0h1m3 0h1m-260 1h1m3 0h1m245 0h1m3 0h1m3 0h1m-268 1h1m8 0h1m4 0h1m243 0h1m3 0h1m3 0h1m-266 1h1m8 0h1m250 0h1m3 0h1m-268 1h1m3 0h1m8 0h1m248 0h1m3 0h1m9 0h1m-276 1h1m3 0h1m8 0h1m250 0h1m9 0h1m-274 1h1m3 0h1m257 0h1m9 0h1m3 0h1m-282 1h1m5 0h1m3 0h1m264 0h2m3 0h1m-280 1h1m5 0h1m3 0h1m262 0h1m4 0h1m-282 1h1m3 0h2m4 0h1m3 0h1m260 0h1m4 0h1m4 0h1m-285 1h1m4 0h1m4 0h1m262 0h1m4 0h1m4 0h1m-283 1h1m4 0h1m4 0h1m260 0h1m4 0h1m4 0h1m3 0h1m-285 1h1m4 0h2m267 0h1m3 0h2m3 0h1m-283 1h1m5 0h1m265 0h1m3 0h1m4 0h1m-281 1h1m273 0h1m3 0h2m-288 1h1m8 0h1m271 0h1m3 0h1m-285 1h1m8 0h1m273 0h1m-283 1h1m280 0h1m10 0h1m-297 1h1m4 0h2m277 0h1m9 0h2m-295 1h1m5 0h1m285 0h1m-297 1h1m4 0h1m5 0h1m283 0h1m5 0h1m-301 1h1m4 0h2m4 0h1m280 0h2m4 0h2m-299 1h2m4 0h1m283 0h1m5 0h1m-300 1h1m4 0h1m4 0h1m281 0h1m5 0h1m4 0h2m-304 1h2m3 0h1m4 0h1m284 0h2m4 0h1m-300 1h1m3 0h2m286 0h1m4 0h2m4 0h1m-303 1h1m4 0h1m289 0h1m4 0h2m-301 1h2m290 0h2m4 0h1m-309 1h1m11 0h1m288 0h1m5 0h1m-307 1h2m302 0h2m-304 1h1m300 0h1m-306 1h1m4 0h2m308 0h2m-316 1h2m4 0h1m305 0h2m-312 1h1m4 0h2m302 0h1m5 0h1m-321 1h2m4 0h1m5 0h1m299 0h2m4 0h2m-318 1h1m4 0h2m301 0h2m4 0h2m4 0h1m-320 1h2m4 0h1m304 0h2m4 0h2m-324 1h2m5 0h1m306 0h2m5 0h1m-320 1h2m4 0h2m303 0h1m5 0h2m-317 1h1m5 0h1m307 0h1m5 0h2m-321 1h2m309 0h2m4 0h2m-317 1h2m312 0h1m-3 1h2m-324 1h2m318 0h2m-320 1h2m327 0h2m-329 1h2m323 0h2m-333 1h2m6 0h2m319 0h2m-329 1h2m6 0h1m316 0h2m6 0h2m-339 1h1m5 0h2m319 0h2m6 0h2m-336 1h2m5 0h2m323 0h2m-332 1h2m5 0h2m319 0h2m5 0h2m-342 1h1m6 0h2m322 0h2m5 0h2m-339 1h2m6 0h2m325 0h2m-335 1h2m6 0h1m322 0h2m6 0h1m-338 1h2m325 0h2m6 0h2m-335 1h2m329 0h2m-331 1h1m326 0h2m-340 1h2m334 0h2m-336 1h2m331 0h1m-332 1h3m339 0h2m-349 1h1m7 0h2m335 0h2m-346 1h2m7 0h1m331 0h3m-342 1h3m334 0h2m7 0h1m-352 1h2m6 0h2m331 0h1m7 0h2m-349 1h2m6 0h2m334 0h3m-345 1h3m337 0h2m6 0h1m-354 1h2m6 0h2m333 0h2m6 0h2m-351 1h2m6 0h1m337 0h3m-347 1h3m339 0h2m6 0h1m-348 1h2m335 0h2m6 0h2m-345 1h1m339 0h3m-5 1h2m-351 1h1m346 0h2m-348 1h3m0 1h2m352 0h2m-362 1h2m6 0h3m347 0h2m-358 1h3m6 0h1m343 0h3m-353 1h2m346 0h2m-356 1h2m6 0h3m341 0h2m9 0h2m-363 1h3m6 0h1m347 0h4m-358 1h2m348 0h4m-352 1h3m343 0h2m9 0h1m-366 1h2m9 0h1m349 0h4m-363 1h4m351 0h4m-355 1h4m345 0h2m8 0h2m-357 1h1m350 0h4m-7 1h3m-5 1h2m-359 1h1m0 1h4m0 1h4m359 0h1m-370 1h2m8 0h1m354 0h4m-367 1h3m356 0h4m-360 1h4m351 0h1m-352 1h2m358 0h2m-372 1h3m361 0h6m-367 1h6m353 0h2m-355 1h2m360 0h2m-373 1h2m363 0h6m-369 1h6m354 0h3m-357 1h3m360 0h3m-9 1h6m-8 1h2m-366 2h2m0 1h6m0 1h3m359 1h6m-377 1h5m361 0h5m-366 1h6m364 1h2m-377 1h5m364 0h6m-370 1h6m355 0h3m6 1h3m-379 1h3m367 0h6m-373 1h6m359 0h2m-361 1h2m363 1h5m-11 1h6m-375 3h6m0 1h5m364 1h6m-381 1h6m364 0h5m-369 1h5m359 2h11m-381 1h11m359 2h11m-381 1h11m364 2h6m-11 1h5m-369 2h5m-11 1h6m364 2h11m-381 1h11m359 2h11m-381 1h11m359 2h5m-369 1h5m364 0h6m-381 1h6m364 1h5m0 1h6m-375 3h6m-11 1h5m363 1h2m-361 1h2m359 0h6m-373 1h6m367 0h3m-379 1h3m6 1h3m355 0h6m-370 1h6m364 0h5m-377 1h2m364 1h5m-365 1h5m360 0h6m-377 1h6m359 1h3m0 1h6m0 1h2m-366 2h2m-8 1h6m-9 1h3m360 0h3m-357 1h3m354 0h6m-369 1h6m363 0h2m-373 1h2m360 0h2m-355 1h2m353 0h6m-367 1h6m361 0h3m-372 1h2m358 0h2m-352 1h1m351 0h3m-359 1h4m355 0h4m-367 1h4m354 0h1m8 0h2m-370 1h1m359 0h4m0 1h4m0 1h1m-359 1h2m-6 1h4m-7 1h3m351 0h1m-357 1h2m8 0h2m345 0h4m-355 1h4m351 0h4m-363 1h4m349 0h1m9 0h2m-366 1h1m9 0h2m343 0h3m-352 1h4m348 0h2m-358 1h4m347 0h1m6 0h3m-363 1h2m9 0h2m341 0h3m6 0h2m-356 1h2m346 0h2m-353 1h3m343 0h1m6 0h3m-358 1h2m347 0h3m6 0h1m-361 1h2m352 0h2m0 1h3m-348 1h2m346 0h1m-351 1h2m-5 1h3m339 0h1m-345 1h2m6 0h2m335 0h2m-348 1h1m6 0h2m339 0h3m-347 1h3m336 0h2m6 0h2m-351 1h2m6 0h2m333 0h2m6 0h2m-354 1h1m6 0h2m337 0h3m-345 1h3m334 0h2m6 0h2m-349 1h2m7 0h2m330 0h2m6 0h1m-351 1h1m7 0h2m334 0h3m-342 1h3m331 0h1m7 0h2m-346 1h2m335 0h2m7 0h1m-348 1h1m339 0h3m-333 1h2m331 0h2m-337 1h2m335 0h2m-341 1h2m326 0h1m-331 1h2m6 0h1m322 0h2m-335 1h2m6 0h2m325 0h2m-331 1h2m329 0h2m-335 1h2m5 0h2m318 0h2m6 0h2m-339 1h2m5 0h2m322 0h2m6 0h1m-341 1h1m5 0h2m320 0h1m5 0h2m-332 1h2m6 0h1m316 0h2m5 0h2m-336 1h2m6 0h2m319 0h2m5 0h2m-332 1h2m323 0h2m-329 1h2m319 0h2m6 0h2m-333 1h2m323 0h2m6 0h1m-335 1h1m327 0h2m-319 1h2m317 0h2m-323 1h2m321 0h1m-325 1h1m5 0h1m306 0h2m-317 1h2m4 0h2m309 0h2m-321 1h2m5 0h1m307 0h1m5 0h1m-317 1h2m5 0h1m303 0h2m4 0h2m-320 1h1m5 0h2m306 0h1m5 0h2m-324 1h2m4 0h2m304 0h1m4 0h2m-315 1h2m4 0h2m301 0h2m4 0h1m-318 1h2m4 0h2m299 0h1m5 0h1m4 0h2m-321 1h1m5 0h1m302 0h2m4 0h1m-312 1h2m305 0h1m4 0h2m-316 1h2m308 0h2m4 0h1m-306 1h1m300 0h1m-304 1h2m302 0h2m-307 1h1m5 0h1m288 0h1m11 0h1m-309 1h1m4 0h2m290 0h2m-301 1h2m4 0h1m289 0h1m4 0h1m-303 1h1m4 0h2m4 0h1m286 0h1m4 0h1m-300 1h1m4 0h2m284 0h1m3 0h2m3 0h2m-304 1h2m4 0h1m5 0h1m281 0h1m4 0h1m4 0h1m-300 1h1m5 0h1m283 0h1m4 0h1m-298 1h2m4 0h2m280 0h1m4 0h1m4 0h2m-301 1h1m5 0h1m283 0h1m4 0h2m4 0h1m-297 1h1m285 0h1m5 0h1m-295 1h2m9 0h1m277 0h1m5 0h1m-297 1h1m10 0h1m279 0h2m-283 1h1m273 0h1m8 0h1m-286 1h2m3 0h1m271 0h1m8 0h1m-288 1h1m4 0h1m273 0h1m-281 1h1m3 0h2m3 0h1m265 0h1m5 0h1m-283 1h1m3 0h1m4 0h1m267 0h2m4 0h1m-285 1h1m3 0h1m4 0h1m4 0h1m260 0h1m4 0h1m4 0h1m-283 1h1m4 0h1m4 0h1m262 0h1m4 0h1m4 0h1m-285 1h1m4 0h1m4 0h1m260 0h1m3 0h1m4 0h2m3 0h1m-282 1h1m3 0h2m262 0h1m3 0h1m5 0h1m-280 1h1m3 0h1m265 0h1m3 0h1m5 0h1m-282 1h1m3 0h1m9 0h1m257 0h1m3 0h1m-274 1h1m9 0h1m250 0h1m8 0h1m3 0h1m-276 1h1m9 0h1m3 0h1m248 0h1m8 0h1m3 0h1m-268 1h1m3 0h1m250 0h1m8 0h1m-266 1h1m3 0h1m3 0h1m243 0h1m4 0h1m8 0h1m-268 1h1m3 0h1m3 0h1m245 0h1m4 0h1m-261 1h1m3 0h1m4 0h1m242 0h1m3 0h1m3 0h1m-262 1h1m3 0h1m4 0h1m4 0h1m235 0h1m3 0h1m3 0h1m3 0h1m-260 1h1m4 0h1m4 0h1m237 0h1m3 0h1m3 0h1m3 0h1m-262 1h1m4 0h1m4 0h1m239 0h1m3 0h1m3 0h1m3 0h1m-258 1h1m3 0h1m7 0h1m233 0h1m2 0h1m4 0h1m-256 1h1m3 0h1m7 0h1m226 0h1m8 0h1m2 0h1m4 0h1m-258 1h1m3 0h1m7 0h1m4 0h1m223 0h1m7 0h1m3 0h1m-251 1h1m7 0h1m4 0h1m225 0h1m7 0h1m3 0h1m-253 1h1m7 0h1m4 0h1m3 0h1m218 0h1m3 0h1m8 0h1m-242 1h1m3 0h1m3 0h1m216 0h1m3 0h1m3 0h1m8 0h1m-244 1h1m3 0h1m3 0h1m3 0h1m214 0h1m2 0h1m4 0h1m-237 1h1m4 0h1m3 0h1m2 0h1m215 0h1m3 0h1m4 0h1m-234 1h1m3 0h1m3 0h1m212 0h1m3 0h1m3 0h1m3 0h1m-235 1h1m3 0h1m3 0h1m7 0h1m206 0h1m3 0h1m3 0h1m3 0h1m-233 1h1m3 0h1m7 0h1m207 0h1m3 0h1m3 0h1m-229 1h1m2 0h1m8 0h1m201 0h1m6 0h1m3 0h1m3 0h1m-231 1h1m3 0h1m7 0h1m3 0h1m195 0h1m2 0h1m7 0h1m3 0h1m-225 1h1m7 0h1m3 0h1m3 0h1m193 0h1m2 0h1m7 0h1m2 0h1m-217 1h1m3 0h1m2 0h1m190 0h1m3 0h1m2 0h1m7 0h1m-215 1h1m3 0h1m3 0h1m2 0h1m188 0h1m3 0h1m2 0h1m7 0h1m-217 1h1m3 0h1m3 0h1m3 0h1m185 0h1m2 0h1m3 0h1m3 0h1m-210 1h1m2 0h1m3 0h1m3 0h1m186 0h1m3 0h1m3 0h1m2 0h1m-211 1h1m3 0h1m3 0h1m3 0h1m5 0h1m181 0h1m3 0h1m2 0h1m3 0h1m-209 1h1m3 0h1m3 0h1m6 0h1m3 0h1m171 0h1m5 0h1m3 0h1m3 0h1m2 0h1m-206 1h1m3 0h1m6 0h1m3 0h1m168 0h1m3 0h1m6 0h1m3 0h1m2 0h1m-203 1h1m3 0h1m6 0h1m3 0h1m2 0h1m166 0h1m3 0h1m6 0h1m3 0h1m2 0h1m-201 1h1m6 0h1m3 0h1m3 0h1m163 0h1m2 0h1m3 0h1m6 0h1m3 0h1m-198 1h1m6 0h1m3 0h1m2 0h1m3 0h1m156 0h1m3 0h1m3 0h1m3 0h1m6 0h1m-189 1h1m3 0h1m3 0h1m3 0h1m157 0h1m3 0h1m2 0h1m3 0h1m6 0h1m-189 1h1m3 0h1m2 0h1m3 0h1m6 0h1m145 0h1m5 0h1m3 0h1m3 0h1m3 0h1m-184 1h1m3 0h1m3 0h1m3 0h1m5 0h1m3 0h1m142 0h1m6 0h1m3 0h1m2 0h1m3 0h1m-180 1h1m2 0h1m3 0h1m6 0h1m3 0h1m139 0h1m3 0h1m5 0h1m3 0h1m3 0h1m3 0h1m-182 1h1m3 0h1m3 0h1m5 0h1m3 0h1m3 0h1m133 0h1m2 0h1m3 0h1m6 0h1m3 0h1m2 0h1m3 0h1m-179 1h1m3 0h1m6 0h1m3 0h1m2 0h1m3 0h1m127 0h1m2 0h1m3 0h1m3 0h1m5 0h1m3 0h1m3 0h1m-176 1h1m3 0h1m6 0h1m2 0h1m3 0h1m2 0h1m128 0h1m3 0h1m2 0h1m3 0h1m6 0h1m3 0h1m-170 1h1m6 0h1m3 0h1m2 0h1m3 0h1m6 0h1m115 0h1m6 0h1m2 0h1m3 0h1m2 0h1m6 0h1m3 0h1m-170 1h1m6 0h1m3 0h1m2 0h1m2 0h1m6 0h1m3 0h1m109 0h1m2 0h1m6 0h1m3 0h1m2 0h1m3 0h1m6 0h1m-161 1h1m3 0h1m3 0h1m2 0h1m6 0h1m2 0h1m3 0h1m103 0h1m2 0h1m3 0h1m6 0h1m2 0h1m2 0h1m3 0h1m-154 1h1m3 0h1m2 0h1m3 0h1m6 0h1m2 0h1m2 0h1m3 0h1m97 0h1m2 0h1m3 0h1m2 0h1m6 0h1m2 0h1m3 0h1m3 0h1m-152 1h1m3 0h1m2 0h1m6 0h1m3 0h1m2 0h1m2 0h1m98 0h1m3 0h1m2 0h1m3 0h1m5 0h1m3 0h1m2 0h1m-145 1h1m3 0h1m6 0h1m2 0h1m3 0h1m2 0h1m6 0h1m2 0h1m82 0h1m6 0h1m2 0h1m2 0h1m3 0h1m6 0h1m2 0h1m3 0h1m-146 1h1m2 0h1m6 0h1m3 0h1m2 0h1m3 0h1m5 0h1m3 0h1m2 0h1m2 0h1m70 0h1m2 0h1m3 0h1m5 0h1m2 0h1m2 0h1m3 0h1m6 0h1m3 0h1m-140 1h1m6 0h1m2 0h1m3 0h1m3 0h1m5 0h1m2 0h1m3 0h1m2 0h1m5 0h1m61 0h1m2 0h1m2 0h1m3 0h1m5 0h1m2 0h1m3 0h1m3 0h1m6 0h1m-130 1h1m2 0h1m2 0h1m3 0h1m6 0h1m2 0h1m2 0h1m3 0h1m5 0h1m2 0h1m2 0h1m45 0h1m3 0h1m5 0h1m2 0h1m3 0h1m2 0h1m6 0h1m2 0h1m2 0h1m3 0h1m-124 1h1m3 0h1m2 0h1m3 0h1m6 0h1m2 0h1m2 0h1m2 0h1m6 0h1m2 0h1m2 0h1m3 0h1m35 0h1m2 0h1m2 0h1m3 0h1m6 0h1m2 0h1m2 0h1m2 0h1m6 0h1m2 0h1m2 0h1m4 0h1m-122 1h1m3 0h1m3 0h1m5 0h1m2 0h1m3 0h1m2 0h1m5 0h1m3 0h1m2 0h1m3 0h1m5 0h1m2 0h1m2 0h1m2 0h1m4 0h1m3 0h1m2 0h1m2 0h1m5 0h1m2 0h1m2 0h1m3 0h1m6 0h1m2 0h1m2 0h1m3 0h1m5 0h1m2 0h1m2 0h1m4 0h1m-122 1h1m2 0h1m4 0h1m5 0h1m2 0h1m3 0h1m2 0h1m5 0h1m3 0h1m2 0h1m2 0h1m6 0h1m2 0h1m2 0h1m2 0h1m4 0h1m3 0h1m2 0h1m2 0h1m5 0h1m3 0h1m2 0h1m2 0h1m6 0h1m2 0h1m2 0h1m3 0h1m5 0h1m2 0h1m3 0h1m-115 1h1m3 0h1m6 0h1m2 0h1m3 0h1m2 0h1m5 0h1m3 0h1m2 0h1m2 0h1m6 0h1m2 0h1m2 0h1m2 0h1m4 0h1m3 0h1m2 0h1m2 0h1m5 0h1m3 0h1m2 0h1m2 0h1m6 0h1m2 0h1m2 0h1m3 0h1m6 0h1m2 0h1m2 0h1m-111 1h1m6 0h1m2 0h1m3 0h1m2 0h1m5 0h1m2 0h1m3 0h1m2 0h1m6 0h1m2 0h1m2 0h1m2 0h1m4 0h1m3 0h1m2 0h1m2 0h1m5 0h1m3 0h1m2 0h1m3 0h1m5 0h1m2 0h1m2 0h1m3 0h1m6 0h1m-99 1h1m2 0h1m3 0h1m3 0h1m5 0h1m2 0h1m2 0h1m3 0h1m6 0h1m2 0h1m2 0h1m2 0h1m4 0h1m3 0h1m2 0h1m2 0h1m5 0h1m3 0h1m2 0h1m3 0h1m5 0h1m2 0h1m3 0h1m3 0h1m-90 1h1m3 0h1m2 0h1m6 0h1m2 0h1m2 0h1m3 0h1m5 0h1m2 0h1m3 0h1m2 0h1m5 0h1m2 0h1m2 0h1m3 0h1m5 0h1m2 0h1m2 0h1m3 0h1m6 0h1m2 0h1m2 0h1m-82 1h1m2 0h1m5 0h1m3 0h1m2 0h1m3 0h1m5 0h1m2 0h1m3 0h1m2 0h1m5 0h1m2 0h1m2 0h1m3 0h1m5 0h1m2 0h1m2 0h1m3 0h1m6 0h1m2 0h1m-70 1h1m3 0h1m2 0h1m2 0h1m6 0h1m2 0h1m3 0h1m2 0h1m5 0h1m2 0h1m2 0h1m3 0h1m5 0h1m3 0h1m2 0h1m2 0h1m6 0h1m-63 1h1m2 0h1m2 0h1m6 0h1m2 0h1m3 0h1m2 0h1m5 0h1m2 0h1m2 0h1m3 0h1m5 0h1m3 0h1m2 0h1m2 0h1m-50 1h1m6 0h1m2 0h1m3 0h1m2 0h1m5 0h1m2 0h1m2 0h1m3 0h1m5 0h1m3 0h1m-37 1h1m2 0h1m3 0h1m2 0h1m5 0h1m2 0h1m2 0h1m3 0h1"/>
<path stroke="#f00" d="M0 .5m198 24h3m7 0h3m-14 1h1m3 0h1m5 0h1m3 0h1m22 0h3m-41 1h1m5 0h1m3 0h1m5 0h1m22 0h2m-41 1h1m5 0h1m3 0h1m5 0h1m21 0h1m1 0h1m-41 1h1m5 0h1m3 0h1m5 0h1m17 0h2m1 0h1m-37 1h1m5 0h1m1 0h1m5 0h1m17 0h1m2 0h1m-35 1h1m4 0h1m1 0h1m4 0h1m17 0h1m4 0h1m-31 1h1m1 0h1m22 0h1m4 0h1m-31 1h1m1 0h1m23 0h1m2 0h1m-29 1h1m25 0h2m-28 1h1m-1 1h1m-1 1h1m-1 1h1m-1 1h1m-1 1h1m-1 1h1m30 47h6m-2 1h2m-3 1h1m1 0h1m-4 1h1m2 0h1m-5 1h1m3 0h1m-6 1h1m4 0h1m-14 1h5m2 0h1m5 0h1m-15 1h1m5 0h2m-44 1h5m30 0h1m7 0h1m-46 1h2m5 0h2m27 0h1m9 0h1m97 0h3m-148 1h1m9 0h1m26 0h1m9 0h1m96 0h1m3 0h1m-150 1h1m11 0h1m25 0h1m9 0h1m96 0h1m3 0h1m-151 1h1m13 0h1m24 0h1m9 0h1m96 0h1m3 0h1m-151 1h1m13 0h1m24 0h1m9 0h1m97 0h4m-152 1h1m15 0h1m24 0h1m7 0h1m101 0h1m-152 1h1m15 0h1m25 0h1m5 0h1m102 0h1m-152 1h1m7 0h1m7 0h1m26 0h5m99 0h1m3 0h1m-152 1h1m15 0h1m131 0h3m-151 1h1m15 0h1m-16 1h1m13 0h1m-15 1h1m13 0h1m-14 1h1m11 0h1m153 0h1m-166 1h1m9 0h1m148 0h2m3 0h1m-164 1h2m5 0h2m151 0h1m2 0h1m-162 1h5m153 0h1m2 0h1m-5 1h1m3 0h1m-5 1h1m3 0h1m-6 1h1m4 0h1m-6 1h8m-3 1h1m-114 2h1m-2 1h3m-2 1h1m-45 7h1m-2 1h3m-2 1h1m5 5h1m-8 2h1m10 0h1m-9 1h1m11 0h1m285 0h1m11 0h1m9 0h1m110 0h3m-431 1h1m293 0h2m11 0h1m9 0h1m108 0h2m3 0h2m-430 1h1m291 0h1m4 0h4m1 0h5m7 0h4m3 0h3m2 0h1m3 0h1m2 0h4m2 0h3m4 0h1m75 0h1m4 0h1m2 0h1m-428 1h1m10 0h1m277 0h1m3 0h1m7 0h1m9 0h1m3 0h1m1 0h1m3 0h1m1 0h1m3 0h1m1 0h1m5 0h1m3 0h1m80 0h2m2 0h1m2 0h1m-425 1h1m11 0h1m273 0h1m4 0h3m4 0h1m9 0h1m3 0h1m1 0h1m3 0h1m1 0h1m3 0h1m2 0h3m2 0h5m3 0h1m75 0h1m2 0h1m2 0h2m-421 1h1m282 0h1m7 0h1m3 0h1m9 0h1m3 0h1m1 0h1m3 0h1m1 0h1m2 0h2m5 0h1m1 0h1m83 0h1m2 0h1m4 0h1m-419 1h1m9 0h1m268 0h3m2 0h4m4 0h1m9 0h1m3 0h1m2 0h3m3 0h2m1 0h1m1 0h4m3 0h4m80 0h2m3 0h2m-415 1h1m10 0h1m398 0h3m-410 1h1m2 0h1m8 0h1m-7 1h1m2 1h1m6 0h1m-5 1h1m7 0h1m-6 1h1m2 1h1m5 0h1m-4 1h1m6 0h1m-5 1h1m7 0h1m-6 1h1m2 1h1m5 0h1m-4 1h1m6 0h1m-5 1h1m7 0h1m-6 1h1m300 0h1m3 0h5m1 0h1m17 0h1m2 0h1m3 0h3m-336 1h1m5 0h1m290 0h2m7 0h1m1 0h1m17 0h1m2 0h1m2 0h1m3 0h1m-334 1h1m6 0h1m287 0h1m6 0h1m2 0h1m6 0h3m3 0h3m2 0h1m2 0h1m6 0h1m-331 1h1m291 0h1m5 0h1m3 0h1m5 0h1m3 0h1m1 0h1m3 0h1m1 0h5m3 0h2m-327 1h1m4 0h1m283 0h1m4 0h1m4 0h1m5 0h5m1 0h1m3 0h1m4 0h1m6 0h1m-325 1h1m5 0h1m279 0h1m3 0h1m5 0h1m5 0h1m5 0h1m3 0h1m4 0h1m2 0h1m3 0h1m-322 1h1m6 0h1m274 0h3m2 0h1m5 0h5m2 0h4m2 0h3m5 0h1m3 0h3m-318 1h1m2 1h1m2 0h1m1 0h1m0 1h1m2 0h1m-1 1h1m2 1h2m1 1h1m1 0h1m0 1h1m2 0h1m-1 1h1m2 1h2m1 1h1m1 0h1m0 1h1m2 0h1m-1 1h1m2 1h2m1 1h1m1 0h1m167 0h5m3 0h1m3 0h1m11 0h1m-192 1h1m166 0h1m7 0h1m3 0h1m11 0h1m110 0h3m-302 1h1m163 0h1m5 0h5m1 0h4m8 0h4m3 0h3m2 0h1m3 0h1m2 0h4m2 0h3m4 0h1m77 0h1m3 0h1m-300 1h2m159 0h4m4 0h1m3 0h1m3 0h1m7 0h1m3 0h1m1 0h1m3 0h1m1 0h1m3 0h1m1 0h1m5 0h1m3 0h1m81 0h1m3 0h1m-297 1h1m1 0h1m159 0h1m3 0h1m3 0h1m3 0h1m7 0h1m3 0h1m1 0h1m3 0h1m1 0h1m3 0h1m2 0h3m2 0h5m3 0h1m75 0h4m1 0h4m-296 1h1m154 0h1m3 0h1m3 0h1m3 0h1m3 0h1m7 0h1m3 0h1m1 0h1m3 0h1m1 0h1m2 0h2m5 0h1m1 0h1m-48 1h3m4 0h1m3 0h1m3 0h1m7 0h1m3 0h1m2 0h3m3 0h2m1 0h1m1 0h4m3 0h4m79 0h9m-7 33h1m2 0h1m2 0h1m-140 1h3m4 0h1m3 0h1m11 0h1m108 0h2m1 0h2m1 0h1m-140 1h1m3 0h1m3 0h1m3 0h1m11 0h1m108 0h1m1 0h2m1 0h2m-140 1h1m3 0h1m1 0h5m1 0h4m8 0h4m3 0h3m2 0h1m3 0h1m2 0h4m2 0h3m4 0h1m75 0h1m2 0h1m2 0h1m-138 1h4m3 0h1m3 0h1m3 0h1m7 0h1m3 0h1m1 0h1m3 0h1m1 0h1m3 0h1m1 0h1m5 0h1m3 0h1m-49 1h1m3 0h1m3 0h1m3 0h1m7 0h1m3 0h1m1 0h1m3 0h1m1 0h1m3 0h1m2 0h3m2 0h5m3 0h1m77 0h1m2 0h1m2 0h1m-141 1h1m3 0h1m3 0h1m3 0h1m3 0h1m7 0h1m3 0h1m1 0h1m3 0h1m1 0h1m2 0h2m5 0h1m1 0h1m84 0h2m1 0h2m1 0h1m-139 1h3m4 0h1m3 0h1m3 0h1m7 0h1m3 0h1m2 0h3m3 0h2m1 0h1m1 0h4m3 0h4m80 0h1m1 0h2m1 0h2m-8 1h1m2 0h1m2 0h1m-71 13h1m4 0h3m4 0h1m11 0h1m4 0h3m2 0h5m-40 1h2m3 0h1m3 0h1m2 0h1m1 0h1m14 0h1m3 0h1m5 0h1m-39 1h1m3 0h1m3 0h1m1 0h1m3 0h1m1 0h4m4 0h1m7 0h1m4 0h1m-38 1h1m4 0h4m1 0h1m3 0h1m1 0h1m3 0h1m3 0h1m6 0h1m4 0h1m-37 1h1m7 0h1m1 0h5m1 0h1m7 0h1m5 0h1m4 0h1m-36 1h1m3 0h1m3 0h1m1 0h1m3 0h1m1 0h1m7 0h1m4 0h1m4 0h1m-36 1h3m3 0h3m2 0h1m3 0h1m1 0h1m7 0h1m3 0h5m1 0h1m-521 6h3m-2 1h2m-3 1h1m1 0h1m-7 1h2m1 0h1m-5 1h1m2 0h1m-5 1h1m4 0h1m-6 1h1m4 0h1m-5 1h1m2 0h1m-3 1h2m32 3h1m-2 1h1m-11 1h2m7 0h1m19 0h1m-28 1h1m6 0h1m18 0h3m-50 1h1m21 0h1m5 0h1m19 0h1m-50 1h2m21 0h1m5 0h1m-31 1h1m1 0h1m21 0h1m5 0h1m524 0h3m-556 1h1m20 0h1m6 0h1m390 0h3m27 0h3m2 0h5m3 0h1m11 0h1m3 0h1m2 0h1m3 0h3m63 0h2m3 0h2m-558 1h1m20 0h1m6 0h1m389 0h1m3 0h1m25 0h1m3 0h1m5 0h1m2 0h1m1 0h1m14 0h1m2 0h1m2 0h1m3 0h1m62 0h1m5 0h1m-558 1h1m19 0h1m7 0h1m389 0h1m5 0h1m3 0h1m1 0h4m4 0h1m13 0h1m4 0h1m2 0h1m3 0h1m1 0h4m4 0h1m3 0h1m2 0h1m6 0h1m61 0h1m7 0h1m-559 1h1m19 0h1m7 0h1m390 0h3m2 0h1m3 0h1m1 0h1m3 0h1m16 0h1m4 0h1m3 0h1m3 0h1m1 0h1m3 0h1m3 0h1m3 0h5m3 0h2m62 0h1m3 0h1m3 0h1m-559 1h1m18 0h1m8 0h1m393 0h1m1 0h1m3 0h1m1 0h1m3 0h1m3 0h1m11 0h1m4 0h1m4 0h5m1 0h1m7 0h1m6 0h1m6 0h1m61 0h1m7 0h1m-561 1h5m16 0h1m8 0h1m389 0h1m3 0h1m1 0h1m2 0h2m1 0h1m3 0h1m14 0h1m4 0h1m5 0h1m3 0h1m1 0h1m7 0h1m6 0h1m2 0h1m3 0h1m62 0h1m5 0h1m-540 1h1m9 0h1m390 0h3m3 0h2m1 0h1m1 0h1m3 0h1m13 0h5m1 0h1m5 0h1m3 0h1m1 0h1m7 0h1m6 0h1m3 0h3m63 0h2m3 0h2m-540 1h15m520 0h3m-528 1h1m-1 1h1m426 11h3m4 0h1m11 0h1m3 0h1m2 0h1m2 0h5m-35 1h1m3 0h1m2 0h1m1 0h1m14 0h1m2 0h1m2 0h1m-27 1h1m1 0h1m3 0h1m1 0h4m4 0h1m3 0h1m2 0h1m2 0h1m-29 1h2m2 0h1m3 0h1m1 0h1m3 0h1m3 0h1m3 0h5m1 0h4m-30 1h1m1 0h5m1 0h1m7 0h1m6 0h1m6 0h1m-35 1h1m3 0h1m1 0h1m3 0h1m1 0h1m7 0h1m6 0h1m2 0h1m3 0h1m-34 1h3m2 0h1m3 0h1m1 0h1m7 0h1m6 0h1m3 0h3m-122 11h5m-2 1h2m-3 1h1m1 0h1m185 0h3m-192 1h1m2 0h1m41 0h1m3 0h1m38 0h3m4 0h1m11 0h1m4 0h3m3 0h3m69 0h2m-193 1h1m3 0h1m41 0h2m1 0h2m37 0h1m3 0h1m2 0h1m1 0h1m14 0h1m3 0h1m1 0h1m3 0h1m67 0h1m1 0h1m-194 1h1m46 0h1m1 0h1m1 0h1m2 0h3m2 0h4m3 0h4m3 0h1m15 0h1m5 0h1m3 0h1m1 0h4m4 0h1m3 0h1m2 0h2m1 0h1m3 0h1m63 0h2m1 0h1m-200 1h1m7 0h1m47 0h1m3 0h1m1 0h1m3 0h1m1 0h1m3 0h1m1 0h1m23 0h4m2 0h1m3 0h1m1 0h1m3 0h1m3 0h1m3 0h1m1 0h1m1 0h1m2 0h4m62 0h1m2 0h1m-198 1h1m5 0h1m48 0h1m3 0h1m1 0h1m3 0h1m1 0h1m6 0h3m4 0h1m15 0h1m3 0h1m1 0h5m1 0h1m7 0h1m3 0h2m2 0h1m5 0h1m61 0h1m4 0h1m-198 1h1m3 0h1m49 0h1m3 0h1m1 0h1m2 0h2m1 0h1m9 0h1m19 0h1m3 0h1m1 0h1m3 0h1m1 0h1m7 0h1m3 0h1m3 0h1m1 0h1m3 0h1m61 0h1m4 0h1m-197 1h1m1 0h1m50 0h1m3 0h1m2 0h2m1 0h1m1 0h1m5 0h4m21 0h3m2 0h1m3 0h1m1 0h1m7 0h1m4 0h3m3 0h3m63 0h1m2 0h1m-195 1h1m191 0h2m-195 1h1m1 0h1m-4 1h1m3 0h1m193 0h1m-200 1h1m5 0h1m52 0h1m15 0h1m117 0h2m3 0h1m-200 1h1m7 0h1m51 0h1m135 0h1m2 0h1m-201 1h1m60 0h1m1 0h1m3 0h1m1 0h4m4 0h1m5 0h1m113 0h1m2 0h1m-202 1h1m61 0h1m1 0h1m3 0h1m1 0h1m3 0h1m3 0h1m118 0h1m3 0h1m-144 1h1m3 0h1m1 0h1m3 0h1m1 0h1m3 0h1m3 0h1m5 0h1m112 0h1m3 0h1m-144 1h1m3 0h1m1 0h1m2 0h2m1 0h1m3 0h1m3 0h1m117 0h1m4 0h1m-143 1h3m3 0h2m1 0h1m1 0h4m4 0h1m117 0h8m-134 1h1m130 0h1m-132 1h1m29 2h5m3 0h1m11 0h1m4 0h3m3 0h3m-30 1h1m2 0h1m1 0h1m14 0h1m3 0h1m1 0h1m3 0h1m-32 1h1m2 0h1m3 0h1m1 0h4m4 0h1m7 0h1m1 0h1m-29 1h1m3 0h1m3 0h1m1 0h1m3 0h1m3 0h1m5 0h2m2 0h4m-33 1h1m4 0h5m1 0h1m7 0h1m7 0h1m1 0h1m3 0h1m-35 1h1m5 0h1m3 0h1m1 0h1m7 0h1m3 0h1m3 0h1m1 0h1m3 0h1m-136 1h1m100 0h1m5 0h1m3 0h1m1 0h1m7 0h1m4 0h3m3 0h3m-141 1h2m3 0h1m-4 1h1m2 0h1m-4 1h1m2 0h1m-5 1h1m3 0h1m-5 1h1m3 0h1m-6 1h1m4 0h1m-6 1h8m-3 1h1m-367 5h3m-5 1h2m3 0h2m464 0h3m4 0h1m11 0h1m3 0h1m2 0h1m3 0h3m-504 1h1m5 0h1m463 0h1m3 0h1m2 0h1m1 0h1m14 0h1m2 0h1m2 0h1m3 0h1m-506 1h1m7 0h1m466 0h1m1 0h1m3 0h1m1 0h4m4 0h1m3 0h1m2 0h1m2 0h1m3 0h1m-506 1h1m3 0h1m3 0h1m465 0h1m2 0h1m3 0h1m1 0h1m3 0h1m3 0h1m3 0h5m2 0h4m-506 1h1m7 0h1m464 0h1m3 0h5m1 0h1m7 0h1m6 0h1m6 0h1m-505 1h1m5 0h1m464 0h1m4 0h1m3 0h1m1 0h1m7 0h1m6 0h1m2 0h1m3 0h1m-505 1h2m3 0h2m463 0h5m1 0h1m3 0h1m1 0h1m7 0h1m6 0h1m3 0h3m-502 1h3m12 11h5m-6 1h1m5 0h1m-8 1h1m7 0h1m-10 1h1m9 0h1m-12 1h1m11 0h1m-13 1h1m11 0h1m-13 1h1m11 0h1m-13 1h1m11 0h1m-13 1h1m11 0h1m-12 1h1m9 0h1m248 0h5m-263 1h1m7 0h1m249 0h1m-259 1h1m7 0h1m249 0h1m-263 1h1m3 0h1m7 0h1m249 0h1m-262 1h1m1 0h1m9 0h1m248 0h4m-264 1h1m11 0h1m251 0h1m-252 1h1m250 0h1m-251 1h1m245 0h1m3 0h1m-4 1h3m-29 6h3m-5 1h2m3 0h2m-7 1h1m5 0h1m-8 1h1m7 0h1m-9 1h1m3 0h1m3 0h1m-9 1h1m7 0h1m-8 1h1m5 0h1m-7 1h2m3 0h2m-5 1h3"/>
</svg>
<div class="t" style="top:6px;left:486px">Astrolog 5.41G</div><div class="t" style="top:16px;left:486px">Chart of the Moment</div><div class="t" style="top:26px;left:486px">Fri April 17, 2026</div><div class="t" style="top:36px;left:486px">10:31:00am (DT -8:00 GMT)</div><div class="t" style="top:46px;left:486px">San Francisco, CA</div><div class="t" style="top:56px;left:486px">122°41&#x27;00&quot;W 37°79&#x27;00&quot;N</div><div class="t" style="top:66px;left:486px">Placidus houses.</div><div class="t" style="top:76px;left:486px">Tropical, Geocentric.</div><div class="t" style="top:86px;left:486px">Julian Day = 2461148.2299</div><div class="t" style="top:96px;left:486px">Obliquity = 23°26&#x27;09&quot;</div><div class="t" style="top:106px;left:486px">Sidereal time: 23:03:42</div><div class="t" style="top:116px;left:486px">DeltaT =  95.5730</div><div class="t" style="top:136px;left:486px"> 1st house:</div><div class="t" style="top:136px;left:558px"> 5Can22</div><div class="t" style="top:146px;left:486px"> 2nd house:</div><div class="t" style="top:146px;left:558px">25Can43</div><div class="t" style="top:156px;left:486px"> 3rd house:</div><div class="t" style="top:156px;left:558px">17Leo43</div><div class="t" style="top:166px;left:486px"> 4th house:</div><div class="t" style="top:166px;left:558px">14Vir43</div><div class="t" style="top:176px;left:486px"> 5th house:</div><div class="t" style="top:176px;left:558px">19Lib27</div><div class="t" style="top:186px;left:486px"> 6th house:</div><div class="t" style="top:186px;left:558px">29Sco16</div><div class="t" style="top:196px;left:486px"> 7th house:</div><div class="t" style="top:196px;left:558px"> 5Cap22</div><div class="t" style="top:206px;left:486px"> 8th house:</div><div class="t" style="top:206px;left:558px">25Cap43</div><div class="t" style="top:216px;left:486px"> 9th house:</div><div class="t" style="top:216px;left:558px">17Aqu43</div><div class="t" style="top:226px;left:486px">10th house:</div><div class="t" style="top:226px;left:558px">14Pis43</div><div class="t" style="top:236px;left:486px">11th house:</div><div class="t" style="top:236px;left:558px">19Ari27</div><div class="t" style="top:246px;left:486px">12th house:</div><div class="t" style="top:246px;left:558px">29Tau16</div><div class="t" style="top:266px;left:486px"> Sun:</div><div class="t" style="top:266px;left:522px">27Ari43</div><div class="t" style="top:266px;left:576px">+ 0°00&#x27;</div><div class="t" style="top:276px;left:486px">Moon:</div><div class="t" style="top:276px;left:522px"> 0Tau58</div><div class="t" style="top:276px;left:576px">+ 4°05&#x27;</div><div class="t" style="top:286px;left:486px">Merc:</div><div class="t" style="top:286px;left:522px"> 3Ari45</div><div class="t" style="top:286px;left:576px">- 2°38&#x27;</div><div class="t" style="top:296px;left:486px">Venu:</div><div class="t" style="top:296px;left:522px">22Tau09</div><div class="t" style="top:296px;left:576px">+ 0°18&#x27;</div><div class="t" style="top:306px;left:486px">Mars:</div><div class="t" style="top:306px;left:522px"> 6Ari09</div><div class="t" style="top:306px;left:576px">- 0°58&#x27;</div><div class="t" style="top:316px;left:486px">Jupi:</div><div class="t" style="top:316px;left:522px">17Can15</div><div class="t" style="top:316px;left:576px">+ 0°23&#x27;</div><div class="t" style="top:326px;left:486px">Satu:</div><div class="t" style="top:326px;left:522px"> 7Ari36</div><div class="t" style="top:326px;left:576px">- 2°09&#x27;</div><div class="t" style="top:336px;left:486px">Uran:</div><div class="t" style="top:336px;left:522px">29Tau34</div><div class="t" style="top:336px;left:576px">- 0°10&#x27;</div><div class="t" style="top:346px;left:486px">Nept:</div><div class="t" style="top:346px;left:522px"> 2Ari49</div><div class="t" style="top:346px;left:576px">- 1°19&#x27;</div><div class="t" style="top:356px;left:486px">Plut:</div><div class="t" style="top:356px;left:522px"> 5Aqu26</div><div class="t" style="top:356px;left:576px">- 4°00&#x27;</div><div class="t" style="top:376px;left:486px">Fire: 5, Earth: 3,</div><div class="t" style="top:386px;left:486px">Air : 1, Water: 1</div><div class="t" style="top:396px;left:486px">Car: 6, Fix: 4, Mut: 0</div><div class="t" style="top:406px;left:486px">Yang: 6, Yin: 4</div><div class="t" style="top:416px;left:486px">M: 9, N: 1, A: 9, D: 1</div><div class="t" style="top:426px;left:486px">Ang: 5, Suc: 4, Cad: 1</div><div class="t" style="top:436px;left:486px">Learn: 9, Share: 1</div>
</div></body></html>
